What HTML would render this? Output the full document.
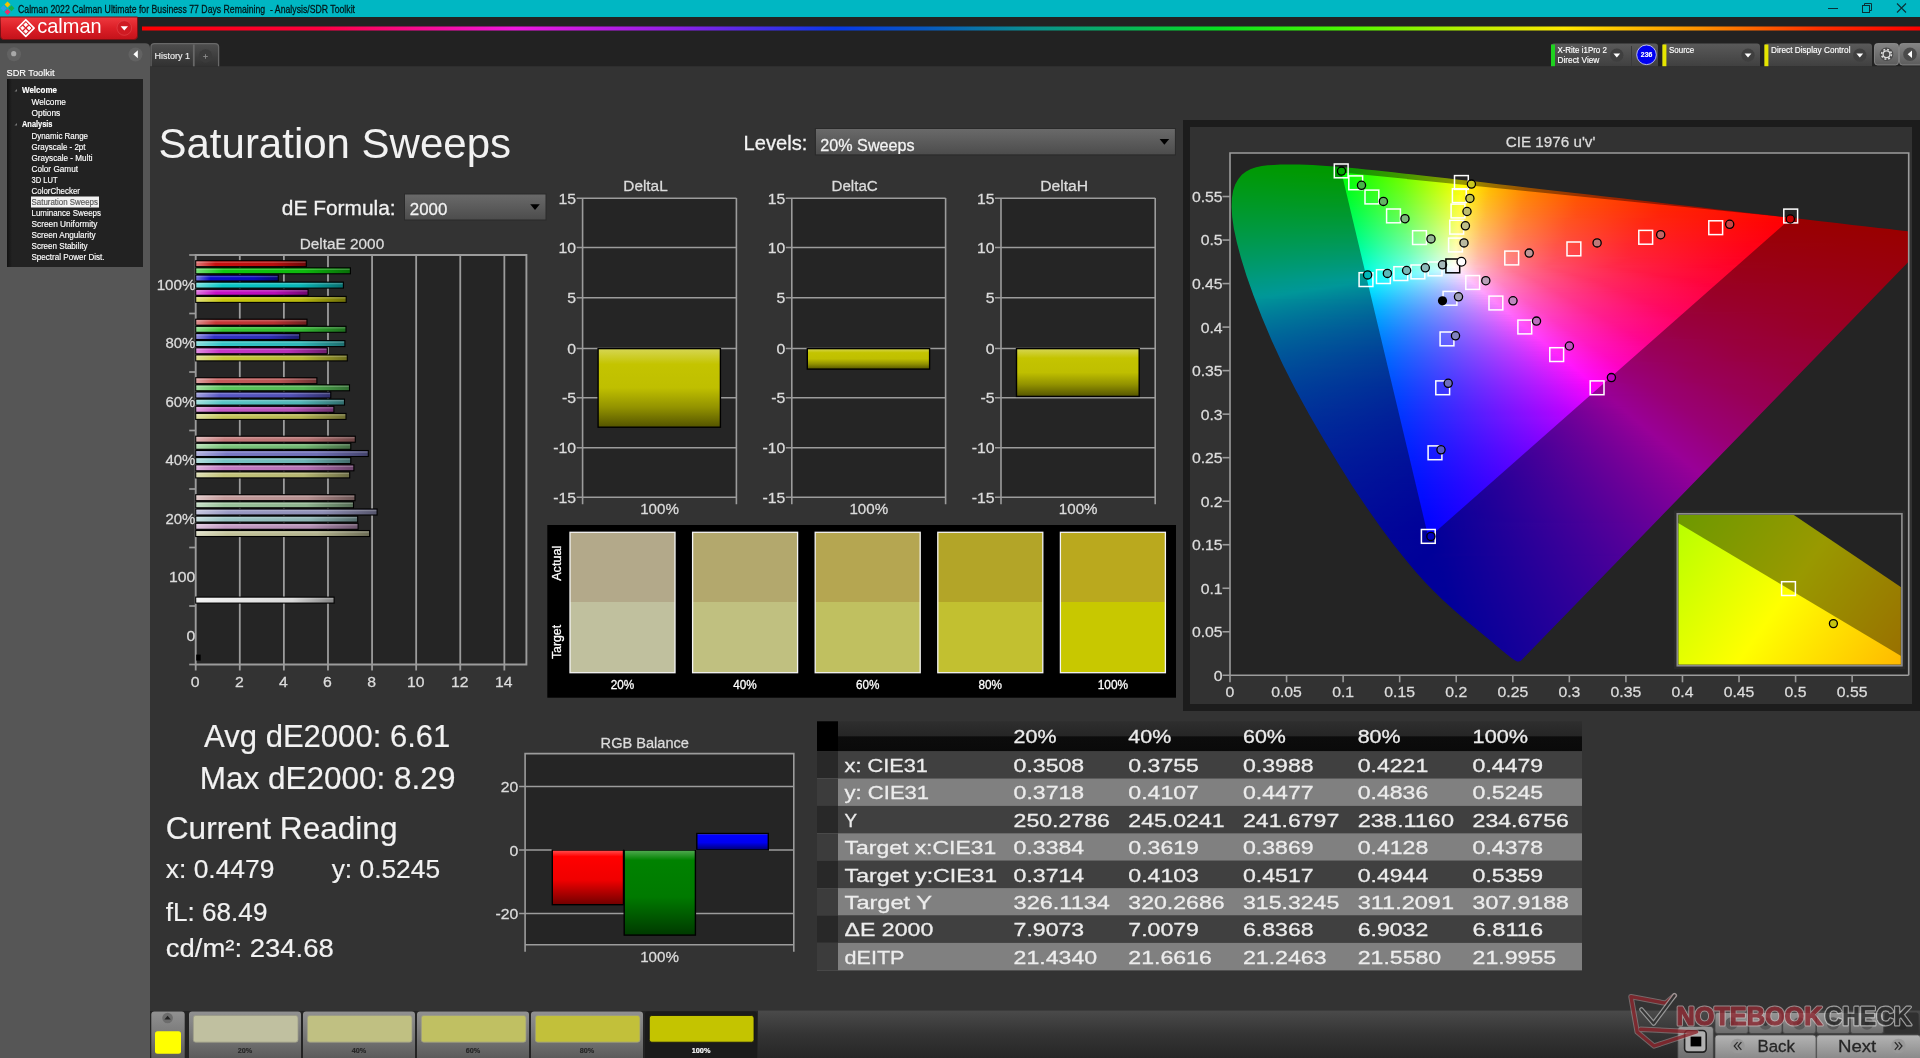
<!DOCTYPE html>
<html lang="en"><head><meta charset="utf-8"><title>Calman 2022 - Analysis/SDR Toolkit</title>
<style>
html,body{margin:0;padding:0;background:#333;}
body{width:1920px;height:1058px;overflow:hidden;position:relative;font-family:"Liberation Sans",sans-serif;}
body>svg{position:absolute;left:0;top:0;will-change:transform;}
svg text{font-family:"Liberation Sans",sans-serif;}
.cie{position:absolute;overflow:hidden;}
.cie i{position:absolute;left:0;width:100%;display:block;}
</style></head><body>
<svg width="1920" height="1058" viewBox="0 0 1920 1058"><defs><linearGradient id="gRed" x1="0" y1="0" x2="0" y2="1"><stop offset="0" stop-color="#ee3a3f"/><stop offset="0.5" stop-color="#dc1f27"/><stop offset="1" stop-color="#c3121a"/></linearGradient>
<radialGradient id="gRedBtn"><stop offset="0" stop-color="#e0262d"/><stop offset="1" stop-color="#c9151c"/></radialGradient>
<linearGradient id="gRain" x1="0" y1="0" x2="1" y2="0"><stop offset="0" stop-color="#f00"/><stop offset="0.1" stop-color="#ff0040"/><stop offset="0.21" stop-color="#f018e0"/><stop offset="0.3" stop-color="#9020e8"/><stop offset="0.39" stop-color="#0838e8"/><stop offset="0.44" stop-color="#0858c0"/><stop offset="0.5" stop-color="#0a9090"/><stop offset="0.555" stop-color="#08b858"/><stop offset="0.605" stop-color="#08e020"/><stop offset="0.68" stop-color="#50f800"/><stop offset="0.745" stop-color="#b8f000"/><stop offset="0.8" stop-color="#ffe800"/><stop offset="0.877" stop-color="#ff9000"/><stop offset="0.943" stop-color="#ff3000"/><stop offset="1" stop-color="#f00"/></linearGradient>
<radialGradient id="gKnob"><stop offset="0" stop-color="#777"/><stop offset="1" stop-color="#5e5e5e"/></radialGradient>
<linearGradient id="gTreeL" x1="0" y1="0" x2="1" y2="0"><stop offset="0" stop-color="#111"/><stop offset="1" stop-color="#222"/></linearGradient>
<linearGradient id="gTab" x1="0" y1="0" x2="0" y2="1"><stop offset="0" stop-color="#4e4e4e"/><stop offset="1" stop-color="#313131"/></linearGradient>
<linearGradient id="gTb" x1="0" y1="0" x2="0" y2="1"><stop offset="0" stop-color="#5a5a5a"/><stop offset="1" stop-color="#404040"/></linearGradient>
<linearGradient id="gBtn" x1="0" y1="0" x2="0" y2="1"><stop offset="0" stop-color="#858585"/><stop offset="1" stop-color="#5c5c5c"/></linearGradient>
<linearGradient id="gDD" x1="0" y1="0" x2="0" y2="1"><stop offset="0" stop-color="#6a6a6a"/><stop offset="1" stop-color="#4c4c4c"/></linearGradient>
<linearGradient id="hb1" x1="0" y1="0" x2="1" y2="0"><stop offset="0" stop-color="#e17b7b"/><stop offset="0.18" stop-color="#c80f0f"/><stop offset="0.7" stop-color="#b80e0e"/><stop offset="1" stop-color="#6e0808"/></linearGradient>
<linearGradient id="hb2" x1="0" y1="0" x2="1" y2="0"><stop offset="0" stop-color="#7be17b"/><stop offset="0.18" stop-color="#0fc80f"/><stop offset="0.7" stop-color="#0eb80e"/><stop offset="1" stop-color="#086e08"/></linearGradient>
<linearGradient id="hb3" x1="0" y1="0" x2="1" y2="0"><stop offset="0" stop-color="#7878e1"/><stop offset="0.18" stop-color="#0a0ac8"/><stop offset="0.7" stop-color="#0909b8"/><stop offset="1" stop-color="#06066e"/></linearGradient>
<linearGradient id="hb4" x1="0" y1="0" x2="1" y2="0"><stop offset="0" stop-color="#78e1e1"/><stop offset="0.18" stop-color="#0ac8c8"/><stop offset="0.7" stop-color="#09b8b8"/><stop offset="1" stop-color="#066e6e"/></linearGradient>
<linearGradient id="hb5" x1="0" y1="0" x2="1" y2="0"><stop offset="0" stop-color="#e17be1"/><stop offset="0.18" stop-color="#c80fc8"/><stop offset="0.7" stop-color="#b80eb8"/><stop offset="1" stop-color="#6e086e"/></linearGradient>
<linearGradient id="hb6" x1="0" y1="0" x2="1" y2="0"><stop offset="0" stop-color="#e1e17b"/><stop offset="0.18" stop-color="#c8c80f"/><stop offset="0.7" stop-color="#b8b80e"/><stop offset="1" stop-color="#6e6e08"/></linearGradient>
<linearGradient id="hb7" x1="0" y1="0" x2="1" y2="0"><stop offset="0" stop-color="#e09191"/><stop offset="0.18" stop-color="#c73737"/><stop offset="0.7" stop-color="#b73232"/><stop offset="1" stop-color="#6d1e1e"/></linearGradient>
<linearGradient id="hb8" x1="0" y1="0" x2="1" y2="0"><stop offset="0" stop-color="#91e091"/><stop offset="0.18" stop-color="#37c737"/><stop offset="0.7" stop-color="#32b732"/><stop offset="1" stop-color="#1e6d1e"/></linearGradient>
<linearGradient id="hb9" x1="0" y1="0" x2="1" y2="0"><stop offset="0" stop-color="#8f8fe0"/><stop offset="0.18" stop-color="#3333c7"/><stop offset="0.7" stop-color="#2f2fb7"/><stop offset="1" stop-color="#1c1c6d"/></linearGradient>
<linearGradient id="hb10" x1="0" y1="0" x2="1" y2="0"><stop offset="0" stop-color="#8fe0e0"/><stop offset="0.18" stop-color="#33c7c7"/><stop offset="0.7" stop-color="#2fb7b7"/><stop offset="1" stop-color="#1c6d6d"/></linearGradient>
<linearGradient id="hb11" x1="0" y1="0" x2="1" y2="0"><stop offset="0" stop-color="#e091e0"/><stop offset="0.18" stop-color="#c737c7"/><stop offset="0.7" stop-color="#b732b7"/><stop offset="1" stop-color="#6d1e6d"/></linearGradient>
<linearGradient id="hb12" x1="0" y1="0" x2="1" y2="0"><stop offset="0" stop-color="#e0e091"/><stop offset="0.18" stop-color="#c7c737"/><stop offset="0.7" stop-color="#b7b732"/><stop offset="1" stop-color="#6d6d1e"/></linearGradient>
<linearGradient id="hb13" x1="0" y1="0" x2="1" y2="0"><stop offset="0" stop-color="#e0a5a5"/><stop offset="0.18" stop-color="#c65b5b"/><stop offset="0.7" stop-color="#b65353"/><stop offset="1" stop-color="#6d3232"/></linearGradient>
<linearGradient id="hb14" x1="0" y1="0" x2="1" y2="0"><stop offset="0" stop-color="#a5e0a5"/><stop offset="0.18" stop-color="#5bc65b"/><stop offset="0.7" stop-color="#53b653"/><stop offset="1" stop-color="#326d32"/></linearGradient>
<linearGradient id="hb15" x1="0" y1="0" x2="1" y2="0"><stop offset="0" stop-color="#a3a3e0"/><stop offset="0.18" stop-color="#5858c6"/><stop offset="0.7" stop-color="#5151b6"/><stop offset="1" stop-color="#30306d"/></linearGradient>
<linearGradient id="hb16" x1="0" y1="0" x2="1" y2="0"><stop offset="0" stop-color="#a3e0e0"/><stop offset="0.18" stop-color="#58c6c6"/><stop offset="0.7" stop-color="#51b6b6"/><stop offset="1" stop-color="#306d6d"/></linearGradient>
<linearGradient id="hb17" x1="0" y1="0" x2="1" y2="0"><stop offset="0" stop-color="#e0a5e0"/><stop offset="0.18" stop-color="#c65bc6"/><stop offset="0.7" stop-color="#b653b6"/><stop offset="1" stop-color="#6d326d"/></linearGradient>
<linearGradient id="hb18" x1="0" y1="0" x2="1" y2="0"><stop offset="0" stop-color="#e0e0a5"/><stop offset="0.18" stop-color="#c6c65b"/><stop offset="0.7" stop-color="#b6b653"/><stop offset="1" stop-color="#6d6d32"/></linearGradient>
<linearGradient id="hb19" x1="0" y1="0" x2="1" y2="0"><stop offset="0" stop-color="#dfb6b6"/><stop offset="0.18" stop-color="#c57b7b"/><stop offset="0.7" stop-color="#b57171"/><stop offset="1" stop-color="#6c4444"/></linearGradient>
<linearGradient id="hb20" x1="0" y1="0" x2="1" y2="0"><stop offset="0" stop-color="#b6dfb6"/><stop offset="0.18" stop-color="#7bc57b"/><stop offset="0.7" stop-color="#71b571"/><stop offset="1" stop-color="#446c44"/></linearGradient>
<linearGradient id="hb21" x1="0" y1="0" x2="1" y2="0"><stop offset="0" stop-color="#b5b5df"/><stop offset="0.18" stop-color="#7979c5"/><stop offset="0.7" stop-color="#6f6fb5"/><stop offset="1" stop-color="#43436c"/></linearGradient>
<linearGradient id="hb22" x1="0" y1="0" x2="1" y2="0"><stop offset="0" stop-color="#b5dfdf"/><stop offset="0.18" stop-color="#79c5c5"/><stop offset="0.7" stop-color="#6fb5b5"/><stop offset="1" stop-color="#436c6c"/></linearGradient>
<linearGradient id="hb23" x1="0" y1="0" x2="1" y2="0"><stop offset="0" stop-color="#dfb6df"/><stop offset="0.18" stop-color="#c57bc5"/><stop offset="0.7" stop-color="#b571b5"/><stop offset="1" stop-color="#6c446c"/></linearGradient>
<linearGradient id="hb24" x1="0" y1="0" x2="1" y2="0"><stop offset="0" stop-color="#dfdfb6"/><stop offset="0.18" stop-color="#c5c57b"/><stop offset="0.7" stop-color="#b5b571"/><stop offset="1" stop-color="#6c6c44"/></linearGradient>
<linearGradient id="hb25" x1="0" y1="0" x2="1" y2="0"><stop offset="0" stop-color="#dfc8c8"/><stop offset="0.18" stop-color="#c49b9b"/><stop offset="0.7" stop-color="#b48f8f"/><stop offset="1" stop-color="#6c5555"/></linearGradient>
<linearGradient id="hb26" x1="0" y1="0" x2="1" y2="0"><stop offset="0" stop-color="#c8dfc8"/><stop offset="0.18" stop-color="#9bc49b"/><stop offset="0.7" stop-color="#8fb48f"/><stop offset="1" stop-color="#556c55"/></linearGradient>
<linearGradient id="hb27" x1="0" y1="0" x2="1" y2="0"><stop offset="0" stop-color="#c8c8df"/><stop offset="0.18" stop-color="#9a9ac4"/><stop offset="0.7" stop-color="#8e8eb4"/><stop offset="1" stop-color="#55556c"/></linearGradient>
<linearGradient id="hb28" x1="0" y1="0" x2="1" y2="0"><stop offset="0" stop-color="#c8dfdf"/><stop offset="0.18" stop-color="#9ac4c4"/><stop offset="0.7" stop-color="#8eb4b4"/><stop offset="1" stop-color="#556c6c"/></linearGradient>
<linearGradient id="hb29" x1="0" y1="0" x2="1" y2="0"><stop offset="0" stop-color="#dfc8df"/><stop offset="0.18" stop-color="#c49bc4"/><stop offset="0.7" stop-color="#b48fb4"/><stop offset="1" stop-color="#6c556c"/></linearGradient>
<linearGradient id="hb30" x1="0" y1="0" x2="1" y2="0"><stop offset="0" stop-color="#dfdfc8"/><stop offset="0.18" stop-color="#c4c49b"/><stop offset="0.7" stop-color="#b4b48f"/><stop offset="1" stop-color="#6c6c55"/></linearGradient>
<linearGradient id="hb31" x1="0" y1="0" x2="1" y2="0"><stop offset="0" stop-color="#f4f4f4"/><stop offset="0.18" stop-color="#ebebeb"/><stop offset="0.7" stop-color="#d8d8d8"/><stop offset="1" stop-color="#818181"/></linearGradient>
<linearGradient id="gYb" x1="0" y1="0" x2="0" y2="1"><stop offset="0" stop-color="#d6d654"/><stop offset="0.2" stop-color="#c4c400"/><stop offset="0.5" stop-color="#bfbf00"/><stop offset="0.75" stop-color="#929200"/><stop offset="1" stop-color="#545400"/></linearGradient>
<linearGradient id="gR" x1="0" y1="0" x2="0" y2="1"><stop offset="0" stop-color="#ff5454"/><stop offset="0.12" stop-color="#ff0000"/><stop offset="0.55" stop-color="#f00000"/><stop offset="1" stop-color="#700000"/></linearGradient>
<linearGradient id="gG" x1="0" y1="0" x2="0" y2="1"><stop offset="0" stop-color="#54ab54"/><stop offset="0.12" stop-color="#008200"/><stop offset="0.55" stop-color="#007a00"/><stop offset="1" stop-color="#003900"/></linearGradient>
<linearGradient id="gB" x1="0" y1="0" x2="0" y2="1"><stop offset="0" stop-color="#5454ff"/><stop offset="0.12" stop-color="#0000ff"/><stop offset="0.55" stop-color="#0000f0"/><stop offset="1" stop-color="#000070"/></linearGradient>
<linearGradient id="gTh" x1="0" y1="0" x2="0" y2="1"><stop offset="0" stop-color="#2e2e2e"/><stop offset="0.48" stop-color="#262626"/><stop offset="0.52" stop-color="#0c0c0c"/><stop offset="1" stop-color="#0a0a0a"/></linearGradient>
<linearGradient id="gIn" gradientUnits="userSpaceOnUse" x1="1679.0" y1="510.4" x2="1900.2" y2="669.0"><stop offset="0" stop-color="#b4ff00"/><stop offset="0.5" stop-color="#ffff00"/><stop offset="1" stop-color="#ffb800"/></linearGradient>
<linearGradient id="gBar" x1="0" y1="0" x2="0" y2="1"><stop offset="0" stop-color="#4a4a4a"/><stop offset="0.5" stop-color="#343434"/><stop offset="1" stop-color="#262626"/></linearGradient>
<linearGradient id="gSw" x1="0" y1="0" x2="0" y2="1"><stop offset="0" stop-color="#919191"/><stop offset="0.5" stop-color="#777"/><stop offset="1" stop-color="#565656"/></linearGradient>
<linearGradient id="gNb" x1="0" y1="0" x2="0" y2="1"><stop offset="0" stop-color="#b4b4b4"/><stop offset="1" stop-color="#858585"/></linearGradient>
<linearGradient id="gSb" x1="0" y1="0" x2="0" y2="1"><stop offset="0" stop-color="#969696"/><stop offset="1" stop-color="#6c6c6c"/></linearGradient></defs>
<rect x="0.00" y="0.00" width="1920.00" height="1058.00" fill="#333"/>
<rect x="0.00" y="17.00" width="1920.00" height="49.20" fill="#222"/>
<rect x="0.00" y="0.00" width="1920.00" height="17.00" fill="#00b7c3"/>
<path d="M7.5 1.5L10.5 4.5L7.5 7.5L4.5 4.5Z" fill="#f5c400"/>
<path d="M3.5 5.3L6.5 8.3L3.5 11.3L0.5 8.3Z" fill="#2aa0e8"/>
<path d="M11.5 5.3L14.5 8.3L11.5 11.3L8.5 8.3Z" fill="#17b14a"/>
<path d="M7.5 9.0L10.5 12.0L7.5 15.0L4.5 12.0Z" fill="#e6336e"/>
<text x="18.0" y="12.7" font-size="11.8" fill="#021518" textLength="337.0" lengthAdjust="spacingAndGlyphs" xml:space="preserve" stroke="#021518" stroke-width="0.28">Calman 2022 Calman Ultimate for Business 77 Days Remaining  - Analysis/SDR Toolkit</text>
<line x1="1828.00" y1="8.50" x2="1838.00" y2="8.50" stroke="#0a3036" stroke-width="1"/>
<rect x="1862.5" y="5.5" width="7" height="7" fill="none" stroke="#0a3036" stroke-width="1"/><path d="M1864.5 5.5V3.5H1871.5V10.5H1869.5" fill="none" stroke="#0a3036" stroke-width="1"/>
<path d="M1897 3.5L1906 12.5M1906 3.5L1897 12.5" stroke="#0a3036" stroke-width="1.1" fill="none"/>
<path d="M0 17H137.5V36Q137.5 39.5 134 39.5H3.5Q0.5 39.5 0.5 36Z" fill="url(#gRed)" stroke="#7c1015" stroke-width="1"/>
<path d="M25.80 19.75L34.10 28.05L25.80 36.35L17.50 28.05Z" fill="none" stroke="#fff" stroke-width="1.7" stroke-linejoin="round"/>
<path d="M25.80 22.85L27.70 24.75L25.80 26.65L23.90 24.75Z" fill="#fff" stroke="#fff" stroke-width="0.8" stroke-linejoin="round"/>
<path d="M22.50 26.15L24.40 28.05L22.50 29.95L20.60 28.05Z" fill="#fff" stroke="#fff" stroke-width="0.8" stroke-linejoin="round"/>
<path d="M29.10 26.15L31.00 28.05L29.10 29.95L27.20 28.05Z" fill="#fff" stroke="#fff" stroke-width="0.8" stroke-linejoin="round"/>
<path d="M25.80 29.45L27.70 31.35L25.80 33.25L23.90 31.35Z" fill="#fff" stroke="#fff" stroke-width="0.8" stroke-linejoin="round"/>
<text x="37.3" y="33.2" font-size="19.9" fill="#fff" textLength="64.3" lengthAdjust="spacingAndGlyphs" stroke="none">calman</text>
<circle cx="124.3" cy="28" r="7.3" fill="#cf1a22" stroke="#e2484d" stroke-width="0.6"/>
<path d="M120.6 26.3H128L124.3 30.6Z" fill="#fff"/>
<rect x="142.00" y="26.50" width="1778.00" height="4.00" fill="url(#gRain)"/>
<path d="M0 43.2H145Q150 43.2 150 48V1058H0Z" fill="#565656"/>
<circle cx="14" cy="54.2" r="7" fill="#626262"/><circle cx="13.7" cy="53.7" r="2.6" fill="#a9a9a9"/>
<circle cx="135.5" cy="54.5" r="7" fill="#626262"/><path d="M137.8 50.2V58.2L133.4 54.2Z" fill="#fff"/>
<text x="6.5" y="76.3" font-size="9.9" fill="#fff" textLength="48.0" lengthAdjust="spacingAndGlyphs" stroke="#fff" stroke-width="0.15">SDR Toolkit</text>
<rect x="7.00" y="79.00" width="136.00" height="188.00" fill="#222"/>
<rect x="7.00" y="79.00" width="5.00" height="188.00" fill="url(#gTreeL)"/>
<rect x="31.00" y="196.50" width="68.00" height="11.00" fill="#f2f2f2"/>
<text x="22.0" y="93.0" font-size="8.5" fill="#fff" font-weight="bold" textLength="35.0" lengthAdjust="spacingAndGlyphs" stroke="#fff" stroke-width="0.15">Welcome</text>
<text x="31.5" y="105.0" font-size="8.5" fill="#fff" textLength="34.5" lengthAdjust="spacingAndGlyphs" stroke="#fff" stroke-width="0.15">Welcome</text>
<text x="31.5" y="115.6" font-size="8.5" fill="#fff" textLength="28.8" lengthAdjust="spacingAndGlyphs" stroke="#fff" stroke-width="0.15">Options</text>
<text x="22.0" y="127.0" font-size="8.5" fill="#fff" font-weight="bold" textLength="30.5" lengthAdjust="spacingAndGlyphs" stroke="#fff" stroke-width="0.15">Analysis</text>
<text x="31.5" y="138.8" font-size="8.5" fill="#fff" textLength="56.5" lengthAdjust="spacingAndGlyphs" stroke="#fff" stroke-width="0.15">Dynamic Range</text>
<text x="31.5" y="149.6" font-size="8.5" fill="#fff" textLength="54.0" lengthAdjust="spacingAndGlyphs" stroke="#fff" stroke-width="0.15">Grayscale - 2pt</text>
<text x="31.5" y="160.6" font-size="8.5" fill="#fff" textLength="61.0" lengthAdjust="spacingAndGlyphs" stroke="#fff" stroke-width="0.15">Grayscale - Multi</text>
<text x="31.5" y="171.7" font-size="8.5" fill="#fff" textLength="46.5" lengthAdjust="spacingAndGlyphs" stroke="#fff" stroke-width="0.15">Color Gamut</text>
<text x="31.5" y="182.5" font-size="8.5" fill="#fff" textLength="26.0" lengthAdjust="spacingAndGlyphs" stroke="#fff" stroke-width="0.15">3D LUT</text>
<text x="31.5" y="193.6" font-size="8.5" fill="#fff" textLength="48.5" lengthAdjust="spacingAndGlyphs" stroke="#fff" stroke-width="0.15">ColorChecker</text>
<text x="31.5" y="204.7" font-size="8.5" fill="#555" textLength="66.5" lengthAdjust="spacingAndGlyphs" stroke="#555" stroke-width="0.15">Saturation Sweeps</text>
<text x="31.5" y="215.7" font-size="8.5" fill="#fff" textLength="69.5" lengthAdjust="spacingAndGlyphs" stroke="#fff" stroke-width="0.15">Luminance Sweeps</text>
<text x="31.5" y="226.8" font-size="8.5" fill="#fff" textLength="66.0" lengthAdjust="spacingAndGlyphs" stroke="#fff" stroke-width="0.15">Screen Uniformity</text>
<text x="31.5" y="238.0" font-size="8.5" fill="#fff" textLength="64.0" lengthAdjust="spacingAndGlyphs" stroke="#fff" stroke-width="0.15">Screen Angularity</text>
<text x="31.5" y="248.6" font-size="8.5" fill="#fff" textLength="56.0" lengthAdjust="spacingAndGlyphs" stroke="#fff" stroke-width="0.15">Screen Stability</text>
<text x="31.5" y="259.6" font-size="8.5" fill="#fff" textLength="73.0" lengthAdjust="spacingAndGlyphs" stroke="#fff" stroke-width="0.15">Spectral Power Dist.</text>
<path d="M17 91.5L14.5 91.5L17 89Z" fill="#777"/><path d="M17 125.5L14.5 125.5L17 123Z" fill="#777"/>
<path d="M151 66.3V47Q151 43.6 154.5 43.6H215Q218.6 43.6 218.6 47V66.3Z" fill="url(#gTab)"/>
<path d="M151 66.3V47Q151 43.6 154.5 43.6H215Q218.6 43.6 218.6 47V66.3" fill="none" stroke="#686868" stroke-width="1.3"/>
<line x1="193.80" y1="44.50" x2="193.80" y2="66.30" stroke="#686868" stroke-width="1.8"/>
<text x="154.6" y="58.5" font-size="9.1" fill="#eee" textLength="35.5" lengthAdjust="spacingAndGlyphs" stroke="#eee" stroke-width="0.15">History 1</text>
<circle cx="205.5" cy="56" r="6.8" fill="#3b3b3b"/><path d="M203.2 56.5H207.8M205.5 54.2V58.8" stroke="#8a8a8a" stroke-width="0.9"/>
<path d="M1551.0 66.2V46.5Q1551.0 43.5 1554.0 43.5H1655.0Q1658.0 43.5 1658.0 46.5V66.2Z" fill="url(#gTb)"/>
<rect x="1551.00" y="44.50" width="4.00" height="21.70" fill="#1fd11f"/>
<path d="M1662.4 66.2V46.5Q1662.4 43.5 1665.4 43.5H1757.0Q1760.0 43.5 1760.0 46.5V66.2Z" fill="url(#gTb)"/>
<rect x="1662.40" y="44.50" width="4.00" height="21.70" fill="#e6e600"/>
<path d="M1764.4 66.2V46.5Q1764.4 43.5 1767.4 43.5H1869.0Q1872.0 43.5 1872.0 46.5V66.2Z" fill="url(#gTb)"/>
<rect x="1764.40" y="44.50" width="4.00" height="21.70" fill="#e6e600"/>
<line x1="1631.50" y1="46.00" x2="1631.50" y2="66.20" stroke="#3a3a3a" stroke-width="1"/>
<text x="1557.4" y="52.9" font-size="8.7" fill="#fff" textLength="49.5" lengthAdjust="spacingAndGlyphs" stroke="#fff" stroke-width="0.15">X-Rite i1Pro 2</text>
<text x="1557.4" y="63.4" font-size="8.7" fill="#fff" textLength="42.0" lengthAdjust="spacingAndGlyphs" stroke="#fff" stroke-width="0.15">Direct View</text>
<text x="1669.0" y="52.9" font-size="8.7" fill="#fff" textLength="25.3" lengthAdjust="spacingAndGlyphs" stroke="#fff" stroke-width="0.15">Source</text>
<text x="1771.0" y="52.9" font-size="8.7" fill="#fff" textLength="79.5" lengthAdjust="spacingAndGlyphs" stroke="#fff" stroke-width="0.15">Direct Display Control</text>
<circle cx="1616.8" cy="55.2" r="6.6" fill="#3f3f3f"/><path d="M1613.4 53.6H1620.2L1616.8 57.6Z" fill="#fff"/>
<circle cx="1748.0" cy="55.2" r="6.6" fill="#3f3f3f"/><path d="M1744.6 53.6H1751.4L1748.0 57.6Z" fill="#fff"/>
<circle cx="1859.8" cy="55.2" r="6.6" fill="#3f3f3f"/><path d="M1856.4 53.6H1863.2L1859.8 57.6Z" fill="#fff"/>
<circle cx="1646.5" cy="54.8" r="9.8" fill="#0000f0" stroke="#dcdcff" stroke-width="0.8"/>
<text x="1640.8" y="57.4" font-size="7.1" fill="#fff" font-weight="bold" textLength="11.5" lengthAdjust="spacingAndGlyphs" stroke="#fff" stroke-width="0.15">236</text>
<rect x="1874.5" y="43.5" width="24" height="21.5" rx="3" fill="url(#gBtn)" stroke="#999" stroke-width="0.7"/>
<rect x="1899.5" y="43.5" width="24" height="21.5" rx="3" fill="url(#gBtn)" stroke="#999" stroke-width="0.7"/>
<circle cx="1886.5" cy="54.3" r="6.8" fill="#4a4a4a"/><circle cx="1886.5" cy="54.3" r="3.4" fill="none" stroke="#ddd" stroke-width="1.3"/><circle cx="1886.5" cy="54.3" r="4.9" fill="none" stroke="#ddd" stroke-width="1.6" stroke-dasharray="1.9 1.95"/>
<circle cx="1910" cy="54.3" r="6.8" fill="#4a4a4a"/><path d="M1912 50.5V58.1L1907.6 54.3Z" fill="#fff"/>
<text x="158.5" y="158.0" font-size="41.8" fill="#f2f2f2" textLength="352.5" lengthAdjust="spacingAndGlyphs">Saturation Sweeps</text>
<text x="281.8" y="215.3" font-size="20.7" fill="#f2f2f2" textLength="113.8" lengthAdjust="spacingAndGlyphs" stroke="#f2f2f2" stroke-width="0.28">dE Formula:</text>
<text x="743.6" y="150.2" font-size="20.5" fill="#f2f2f2" textLength="63.7" lengthAdjust="spacingAndGlyphs" stroke="#f2f2f2" stroke-width="0.28">Levels:</text>
<rect x="404.5" y="194.0" width="141.5" height="26.0" fill="url(#gDD)" stroke="#2a2a2a" stroke-width="1"/>
<svg x="404.5" y="194.0" width="141.5" height="25.0" overflow="hidden"><text x="5.3" y="21.3" font-size="16.4" fill="#f2f2f2" textLength="37.5" lengthAdjust="spacingAndGlyphs" stroke="#f2f2f2" stroke-width="0.28">2000</text></svg>
<path d="M530.2 204.2H539.8L535.0 210.0Z" fill="#000"/>
<rect x="815.4" y="128.5" width="360.0" height="26.4" fill="url(#gDD)" stroke="#2a2a2a" stroke-width="1"/>
<svg x="815.4" y="128.5" width="360.0" height="25.4" overflow="hidden"><text x="4.9" y="22.5" font-size="16.6" fill="#f2f2f2" textLength="94.3" lengthAdjust="spacingAndGlyphs" stroke="#f2f2f2" stroke-width="0.28">20% Sweeps</text></svg>
<path d="M1159.6 138.9H1169.2L1164.4 144.7Z" fill="#000"/>
<rect x="195.70" y="255.00" width="330.70" height="409.50" fill="#252525"/>
<line x1="239.79" y1="255.00" x2="239.79" y2="670.50" stroke="#9c9c9c" stroke-width="1.8"/>
<line x1="283.89" y1="255.00" x2="283.89" y2="670.50" stroke="#9c9c9c" stroke-width="1.8"/>
<line x1="327.98" y1="255.00" x2="327.98" y2="670.50" stroke="#9c9c9c" stroke-width="1.8"/>
<line x1="372.07" y1="255.00" x2="372.07" y2="670.50" stroke="#9c9c9c" stroke-width="1.8"/>
<line x1="416.17" y1="255.00" x2="416.17" y2="670.50" stroke="#9c9c9c" stroke-width="1.8"/>
<line x1="460.26" y1="255.00" x2="460.26" y2="670.50" stroke="#9c9c9c" stroke-width="1.8"/>
<line x1="504.35" y1="255.00" x2="504.35" y2="670.50" stroke="#9c9c9c" stroke-width="1.8"/>
<path d="M195.7 255.0H526.4V664.5H195.7Z" fill="none" stroke="#9c9c9c" stroke-width="1.9"/>
<line x1="195.70" y1="664.50" x2="195.70" y2="670.50" stroke="#9c9c9c" stroke-width="1.8"/>
<line x1="189.20" y1="255.00" x2="195.70" y2="255.00" stroke="#9c9c9c" stroke-width="1.7"/>
<line x1="189.20" y1="313.50" x2="195.70" y2="313.50" stroke="#9c9c9c" stroke-width="1.7"/>
<line x1="189.20" y1="372.00" x2="195.70" y2="372.00" stroke="#9c9c9c" stroke-width="1.7"/>
<line x1="189.20" y1="430.50" x2="195.70" y2="430.50" stroke="#9c9c9c" stroke-width="1.7"/>
<line x1="189.20" y1="489.00" x2="195.70" y2="489.00" stroke="#9c9c9c" stroke-width="1.7"/>
<line x1="189.20" y1="547.50" x2="195.70" y2="547.50" stroke="#9c9c9c" stroke-width="1.7"/>
<line x1="189.20" y1="606.00" x2="195.70" y2="606.00" stroke="#9c9c9c" stroke-width="1.7"/>
<line x1="189.20" y1="664.50" x2="195.70" y2="664.50" stroke="#9c9c9c" stroke-width="1.7"/>
<text x="299.7" y="248.8" font-size="15.3" fill="#dcdcdc" textLength="84.5" lengthAdjust="spacingAndGlyphs" stroke="#dcdcdc" stroke-width="0.28">DeltaE 2000</text>
<text x="156.7" y="289.9" font-size="15.3" fill="#dcdcdc" textLength="38.7" lengthAdjust="spacingAndGlyphs" stroke="#dcdcdc" stroke-width="0.28">100%</text>
<text x="165.5" y="348.4" font-size="15.3" fill="#dcdcdc" textLength="29.9" lengthAdjust="spacingAndGlyphs" stroke="#dcdcdc" stroke-width="0.28">80%</text>
<text x="165.5" y="406.9" font-size="15.3" fill="#dcdcdc" textLength="29.9" lengthAdjust="spacingAndGlyphs" stroke="#dcdcdc" stroke-width="0.28">60%</text>
<text x="165.5" y="465.4" font-size="15.3" fill="#dcdcdc" textLength="29.9" lengthAdjust="spacingAndGlyphs" stroke="#dcdcdc" stroke-width="0.28">40%</text>
<text x="165.5" y="523.9" font-size="15.3" fill="#dcdcdc" textLength="29.9" lengthAdjust="spacingAndGlyphs" stroke="#dcdcdc" stroke-width="0.28">20%</text>
<text x="169.1" y="582.4" font-size="15.3" fill="#dcdcdc" textLength="26.3" lengthAdjust="spacingAndGlyphs" stroke="#dcdcdc" stroke-width="0.28">100</text>
<text x="186.6" y="640.9" font-size="15.3" fill="#dcdcdc" textLength="8.8" lengthAdjust="spacingAndGlyphs" stroke="#dcdcdc" stroke-width="0.28">0</text>
<text x="190.8" y="687.2" font-size="15.3" fill="#dcdcdc" textLength="8.8" lengthAdjust="spacingAndGlyphs" stroke="#dcdcdc" stroke-width="0.28">0</text>
<text x="234.9" y="687.2" font-size="15.3" fill="#dcdcdc" textLength="8.8" lengthAdjust="spacingAndGlyphs" stroke="#dcdcdc" stroke-width="0.28">2</text>
<text x="279.0" y="687.2" font-size="15.3" fill="#dcdcdc" textLength="8.8" lengthAdjust="spacingAndGlyphs" stroke="#dcdcdc" stroke-width="0.28">4</text>
<text x="323.1" y="687.2" font-size="15.3" fill="#dcdcdc" textLength="8.8" lengthAdjust="spacingAndGlyphs" stroke="#dcdcdc" stroke-width="0.28">6</text>
<text x="367.2" y="687.2" font-size="15.3" fill="#dcdcdc" textLength="8.8" lengthAdjust="spacingAndGlyphs" stroke="#dcdcdc" stroke-width="0.28">8</text>
<text x="406.9" y="687.2" font-size="15.3" fill="#dcdcdc" textLength="17.5" lengthAdjust="spacingAndGlyphs" stroke="#dcdcdc" stroke-width="0.28">10</text>
<text x="451.0" y="687.2" font-size="15.3" fill="#dcdcdc" textLength="17.5" lengthAdjust="spacingAndGlyphs" stroke="#dcdcdc" stroke-width="0.28">12</text>
<text x="495.1" y="687.2" font-size="15.3" fill="#dcdcdc" textLength="17.5" lengthAdjust="spacingAndGlyphs" stroke="#dcdcdc" stroke-width="0.28">14</text>
<rect x="195.7" y="260.7" width="110.6" height="6.0" fill="url(#hb1)" stroke="#000" stroke-width="1.1"/>
<rect x="196.3" y="261.6" width="109.3" height="1.3" fill="#fff" opacity="0.22"/>
<rect x="195.7" y="267.8" width="154.7" height="6.0" fill="url(#hb2)" stroke="#000" stroke-width="1.1"/>
<rect x="196.3" y="268.7" width="153.4" height="1.3" fill="#fff" opacity="0.22"/>
<rect x="195.7" y="275.0" width="82.6" height="6.0" fill="url(#hb3)" stroke="#000" stroke-width="1.1"/>
<rect x="196.3" y="275.9" width="81.3" height="1.3" fill="#fff" opacity="0.22"/>
<rect x="195.7" y="282.1" width="147.7" height="6.0" fill="url(#hb4)" stroke="#000" stroke-width="1.1"/>
<rect x="196.3" y="283.0" width="146.4" height="1.3" fill="#fff" opacity="0.22"/>
<rect x="195.7" y="289.3" width="112.4" height="6.0" fill="url(#hb5)" stroke="#000" stroke-width="1.1"/>
<rect x="196.3" y="290.2" width="111.1" height="1.3" fill="#fff" opacity="0.22"/>
<rect x="195.7" y="296.4" width="150.5" height="6.0" fill="url(#hb6)" stroke="#000" stroke-width="1.1"/>
<rect x="196.3" y="297.3" width="149.2" height="1.3" fill="#fff" opacity="0.22"/>
<rect x="195.7" y="319.2" width="111.3" height="6.0" fill="url(#hb7)" stroke="#000" stroke-width="1.1"/>
<rect x="196.3" y="320.1" width="110.0" height="1.3" fill="#fff" opacity="0.22"/>
<rect x="195.7" y="326.3" width="150.3" height="6.0" fill="url(#hb8)" stroke="#000" stroke-width="1.1"/>
<rect x="196.3" y="327.2" width="149.0" height="1.3" fill="#fff" opacity="0.22"/>
<rect x="195.7" y="333.5" width="104.0" height="6.0" fill="url(#hb9)" stroke="#000" stroke-width="1.1"/>
<rect x="196.3" y="334.4" width="102.7" height="1.3" fill="#fff" opacity="0.22"/>
<rect x="195.7" y="340.6" width="149.2" height="6.0" fill="url(#hb10)" stroke="#000" stroke-width="1.1"/>
<rect x="196.3" y="341.5" width="147.9" height="1.3" fill="#fff" opacity="0.22"/>
<rect x="195.7" y="347.8" width="131.6" height="6.0" fill="url(#hb11)" stroke="#000" stroke-width="1.1"/>
<rect x="196.3" y="348.7" width="130.3" height="1.3" fill="#fff" opacity="0.22"/>
<rect x="195.7" y="354.9" width="151.6" height="6.0" fill="url(#hb12)" stroke="#000" stroke-width="1.1"/>
<rect x="196.3" y="355.8" width="150.3" height="1.3" fill="#fff" opacity="0.22"/>
<rect x="195.7" y="377.7" width="121.2" height="6.0" fill="url(#hb13)" stroke="#000" stroke-width="1.1"/>
<rect x="196.3" y="378.6" width="119.9" height="1.3" fill="#fff" opacity="0.22"/>
<rect x="195.7" y="384.8" width="153.8" height="6.0" fill="url(#hb14)" stroke="#000" stroke-width="1.1"/>
<rect x="196.3" y="385.7" width="152.5" height="1.3" fill="#fff" opacity="0.22"/>
<rect x="195.7" y="392.0" width="135.1" height="6.0" fill="url(#hb15)" stroke="#000" stroke-width="1.1"/>
<rect x="196.3" y="392.9" width="133.8" height="1.3" fill="#fff" opacity="0.22"/>
<rect x="195.7" y="399.1" width="148.8" height="6.0" fill="url(#hb16)" stroke="#000" stroke-width="1.1"/>
<rect x="196.3" y="400.0" width="147.5" height="1.3" fill="#fff" opacity="0.22"/>
<rect x="195.7" y="406.3" width="138.2" height="6.0" fill="url(#hb17)" stroke="#000" stroke-width="1.1"/>
<rect x="196.3" y="407.2" width="136.9" height="1.3" fill="#fff" opacity="0.22"/>
<rect x="195.7" y="413.4" width="150.3" height="6.0" fill="url(#hb18)" stroke="#000" stroke-width="1.1"/>
<rect x="196.3" y="414.3" width="149.0" height="1.3" fill="#fff" opacity="0.22"/>
<rect x="195.7" y="436.2" width="159.6" height="6.0" fill="url(#hb19)" stroke="#000" stroke-width="1.1"/>
<rect x="196.3" y="437.1" width="158.3" height="1.3" fill="#fff" opacity="0.22"/>
<rect x="195.7" y="443.3" width="155.1" height="6.0" fill="url(#hb20)" stroke="#000" stroke-width="1.1"/>
<rect x="196.3" y="444.2" width="153.8" height="1.3" fill="#fff" opacity="0.22"/>
<rect x="195.7" y="450.5" width="172.6" height="6.0" fill="url(#hb21)" stroke="#000" stroke-width="1.1"/>
<rect x="196.3" y="451.4" width="171.3" height="1.3" fill="#fff" opacity="0.22"/>
<rect x="195.7" y="457.6" width="155.1" height="6.0" fill="url(#hb22)" stroke="#000" stroke-width="1.1"/>
<rect x="196.3" y="458.5" width="153.8" height="1.3" fill="#fff" opacity="0.22"/>
<rect x="195.7" y="464.8" width="158.2" height="6.0" fill="url(#hb23)" stroke="#000" stroke-width="1.1"/>
<rect x="196.3" y="465.7" width="156.9" height="1.3" fill="#fff" opacity="0.22"/>
<rect x="195.7" y="471.9" width="154.0" height="6.0" fill="url(#hb24)" stroke="#000" stroke-width="1.1"/>
<rect x="196.3" y="472.8" width="152.7" height="1.3" fill="#fff" opacity="0.22"/>
<rect x="195.7" y="494.7" width="159.3" height="6.0" fill="url(#hb25)" stroke="#000" stroke-width="1.1"/>
<rect x="196.3" y="495.6" width="158.0" height="1.3" fill="#fff" opacity="0.22"/>
<rect x="195.7" y="501.8" width="157.8" height="6.0" fill="url(#hb26)" stroke="#000" stroke-width="1.1"/>
<rect x="196.3" y="502.7" width="156.5" height="1.3" fill="#fff" opacity="0.22"/>
<rect x="195.7" y="509.0" width="181.4" height="6.0" fill="url(#hb27)" stroke="#000" stroke-width="1.1"/>
<rect x="196.3" y="509.9" width="180.1" height="1.3" fill="#fff" opacity="0.22"/>
<rect x="195.7" y="516.1" width="162.0" height="6.0" fill="url(#hb28)" stroke="#000" stroke-width="1.1"/>
<rect x="196.3" y="517.0" width="160.7" height="1.3" fill="#fff" opacity="0.22"/>
<rect x="195.7" y="523.3" width="162.4" height="6.0" fill="url(#hb29)" stroke="#000" stroke-width="1.1"/>
<rect x="196.3" y="524.2" width="161.1" height="1.3" fill="#fff" opacity="0.22"/>
<rect x="195.7" y="530.5" width="173.9" height="6.0" fill="url(#hb30)" stroke="#000" stroke-width="1.1"/>
<rect x="196.3" y="531.4" width="172.6" height="1.3" fill="#fff" opacity="0.22"/>
<rect x="195.7" y="597.1" width="138.4" height="6.0" fill="url(#hb31)" stroke="#000" stroke-width="1.1"/>
<rect x="196.3" y="598.0" width="137.1" height="1.3" fill="#fff" opacity="0.22"/>
<rect x="196.20" y="654.60" width="4.50" height="6.00" fill="#000"/>
<rect x="582.60" y="198.00" width="153.80" height="299.20" fill="#252525"/>
<line x1="576.60" y1="198.20" x2="736.40" y2="198.20" stroke="#9c9c9c" stroke-width="1.5"/>
<text x="558.6" y="203.8" font-size="15.3" fill="#dcdcdc" textLength="17.5" lengthAdjust="spacingAndGlyphs" stroke="#dcdcdc" stroke-width="0.28">15</text>
<line x1="576.60" y1="247.60" x2="736.40" y2="247.60" stroke="#9c9c9c" stroke-width="1.5"/>
<text x="558.6" y="253.2" font-size="15.3" fill="#dcdcdc" textLength="17.5" lengthAdjust="spacingAndGlyphs" stroke="#dcdcdc" stroke-width="0.28">10</text>
<line x1="576.60" y1="297.80" x2="736.40" y2="297.80" stroke="#9c9c9c" stroke-width="1.5"/>
<text x="567.3" y="303.4" font-size="15.3" fill="#dcdcdc" textLength="8.8" lengthAdjust="spacingAndGlyphs" stroke="#dcdcdc" stroke-width="0.28">5</text>
<line x1="576.60" y1="348.60" x2="736.40" y2="348.60" stroke="#9c9c9c" stroke-width="1.5"/>
<text x="567.3" y="354.2" font-size="15.3" fill="#dcdcdc" textLength="8.8" lengthAdjust="spacingAndGlyphs" stroke="#dcdcdc" stroke-width="0.28">0</text>
<line x1="576.60" y1="397.80" x2="736.40" y2="397.80" stroke="#9c9c9c" stroke-width="1.5"/>
<text x="562.0" y="403.4" font-size="15.3" fill="#dcdcdc" textLength="14.1" lengthAdjust="spacingAndGlyphs" stroke="#dcdcdc" stroke-width="0.28">-5</text>
<line x1="576.60" y1="447.80" x2="736.40" y2="447.80" stroke="#9c9c9c" stroke-width="1.5"/>
<text x="553.3" y="453.4" font-size="15.3" fill="#dcdcdc" textLength="22.8" lengthAdjust="spacingAndGlyphs" stroke="#dcdcdc" stroke-width="0.28">-10</text>
<line x1="576.60" y1="497.20" x2="736.40" y2="497.20" stroke="#9c9c9c" stroke-width="1.5"/>
<text x="553.3" y="502.8" font-size="15.3" fill="#dcdcdc" textLength="22.8" lengthAdjust="spacingAndGlyphs" stroke="#dcdcdc" stroke-width="0.28">-15</text>
<path d="M582.6 198.0V504.2M736.4 198.0V504.2" stroke="#9c9c9c" stroke-width="1.6" fill="none"/>
<text x="623.3" y="191.3" font-size="15.3" fill="#dcdcdc" textLength="44.4" lengthAdjust="spacingAndGlyphs" stroke="#dcdcdc" stroke-width="0.28">DeltaL</text>
<text x="640.2" y="513.7" font-size="15.3" fill="#dcdcdc" textLength="38.7" lengthAdjust="spacingAndGlyphs" stroke="#dcdcdc" stroke-width="0.28">100%</text>
<rect x="598.1" y="348.6" width="122.3" height="78.6" fill="url(#gYb)" stroke="#000" stroke-width="1.4"/>
<rect x="791.80" y="198.00" width="153.80" height="299.20" fill="#252525"/>
<line x1="785.80" y1="198.20" x2="945.60" y2="198.20" stroke="#9c9c9c" stroke-width="1.5"/>
<text x="767.8" y="203.8" font-size="15.3" fill="#dcdcdc" textLength="17.5" lengthAdjust="spacingAndGlyphs" stroke="#dcdcdc" stroke-width="0.28">15</text>
<line x1="785.80" y1="247.60" x2="945.60" y2="247.60" stroke="#9c9c9c" stroke-width="1.5"/>
<text x="767.8" y="253.2" font-size="15.3" fill="#dcdcdc" textLength="17.5" lengthAdjust="spacingAndGlyphs" stroke="#dcdcdc" stroke-width="0.28">10</text>
<line x1="785.80" y1="297.80" x2="945.60" y2="297.80" stroke="#9c9c9c" stroke-width="1.5"/>
<text x="776.5" y="303.4" font-size="15.3" fill="#dcdcdc" textLength="8.8" lengthAdjust="spacingAndGlyphs" stroke="#dcdcdc" stroke-width="0.28">5</text>
<line x1="785.80" y1="348.60" x2="945.60" y2="348.60" stroke="#9c9c9c" stroke-width="1.5"/>
<text x="776.5" y="354.2" font-size="15.3" fill="#dcdcdc" textLength="8.8" lengthAdjust="spacingAndGlyphs" stroke="#dcdcdc" stroke-width="0.28">0</text>
<line x1="785.80" y1="397.80" x2="945.60" y2="397.80" stroke="#9c9c9c" stroke-width="1.5"/>
<text x="771.2" y="403.4" font-size="15.3" fill="#dcdcdc" textLength="14.1" lengthAdjust="spacingAndGlyphs" stroke="#dcdcdc" stroke-width="0.28">-5</text>
<line x1="785.80" y1="447.80" x2="945.60" y2="447.80" stroke="#9c9c9c" stroke-width="1.5"/>
<text x="762.5" y="453.4" font-size="15.3" fill="#dcdcdc" textLength="22.8" lengthAdjust="spacingAndGlyphs" stroke="#dcdcdc" stroke-width="0.28">-10</text>
<line x1="785.80" y1="497.20" x2="945.60" y2="497.20" stroke="#9c9c9c" stroke-width="1.5"/>
<text x="762.5" y="502.8" font-size="15.3" fill="#dcdcdc" textLength="22.8" lengthAdjust="spacingAndGlyphs" stroke="#dcdcdc" stroke-width="0.28">-15</text>
<path d="M791.8 198.0V504.2M945.6 198.0V504.2" stroke="#9c9c9c" stroke-width="1.6" fill="none"/>
<text x="831.5" y="191.3" font-size="15.3" fill="#dcdcdc" textLength="46.3" lengthAdjust="spacingAndGlyphs" stroke="#dcdcdc" stroke-width="0.28">DeltaC</text>
<text x="849.4" y="513.7" font-size="15.3" fill="#dcdcdc" textLength="38.7" lengthAdjust="spacingAndGlyphs" stroke="#dcdcdc" stroke-width="0.28">100%</text>
<rect x="807.3" y="348.6" width="122.3" height="20.5" fill="url(#gYb)" stroke="#000" stroke-width="1.4"/>
<rect x="1001.00" y="198.00" width="154.20" height="299.20" fill="#252525"/>
<line x1="995.00" y1="198.20" x2="1155.20" y2="198.20" stroke="#9c9c9c" stroke-width="1.5"/>
<text x="977.0" y="203.8" font-size="15.3" fill="#dcdcdc" textLength="17.5" lengthAdjust="spacingAndGlyphs" stroke="#dcdcdc" stroke-width="0.28">15</text>
<line x1="995.00" y1="247.60" x2="1155.20" y2="247.60" stroke="#9c9c9c" stroke-width="1.5"/>
<text x="977.0" y="253.2" font-size="15.3" fill="#dcdcdc" textLength="17.5" lengthAdjust="spacingAndGlyphs" stroke="#dcdcdc" stroke-width="0.28">10</text>
<line x1="995.00" y1="297.80" x2="1155.20" y2="297.80" stroke="#9c9c9c" stroke-width="1.5"/>
<text x="985.7" y="303.4" font-size="15.3" fill="#dcdcdc" textLength="8.8" lengthAdjust="spacingAndGlyphs" stroke="#dcdcdc" stroke-width="0.28">5</text>
<line x1="995.00" y1="348.60" x2="1155.20" y2="348.60" stroke="#9c9c9c" stroke-width="1.5"/>
<text x="985.7" y="354.2" font-size="15.3" fill="#dcdcdc" textLength="8.8" lengthAdjust="spacingAndGlyphs" stroke="#dcdcdc" stroke-width="0.28">0</text>
<line x1="995.00" y1="397.80" x2="1155.20" y2="397.80" stroke="#9c9c9c" stroke-width="1.5"/>
<text x="980.4" y="403.4" font-size="15.3" fill="#dcdcdc" textLength="14.1" lengthAdjust="spacingAndGlyphs" stroke="#dcdcdc" stroke-width="0.28">-5</text>
<line x1="995.00" y1="447.80" x2="1155.20" y2="447.80" stroke="#9c9c9c" stroke-width="1.5"/>
<text x="971.7" y="453.4" font-size="15.3" fill="#dcdcdc" textLength="22.8" lengthAdjust="spacingAndGlyphs" stroke="#dcdcdc" stroke-width="0.28">-10</text>
<line x1="995.00" y1="497.20" x2="1155.20" y2="497.20" stroke="#9c9c9c" stroke-width="1.5"/>
<text x="971.7" y="502.8" font-size="15.3" fill="#dcdcdc" textLength="22.8" lengthAdjust="spacingAndGlyphs" stroke="#dcdcdc" stroke-width="0.28">-15</text>
<path d="M1001.0 198.0V504.2M1155.2 198.0V504.2" stroke="#9c9c9c" stroke-width="1.6" fill="none"/>
<text x="1040.2" y="191.3" font-size="15.3" fill="#dcdcdc" textLength="47.9" lengthAdjust="spacingAndGlyphs" stroke="#dcdcdc" stroke-width="0.28">DeltaH</text>
<text x="1058.8" y="513.7" font-size="15.3" fill="#dcdcdc" textLength="38.7" lengthAdjust="spacingAndGlyphs" stroke="#dcdcdc" stroke-width="0.28">100%</text>
<rect x="1016.5" y="348.6" width="122.7" height="47.8" fill="url(#gYb)" stroke="#000" stroke-width="1.4"/>
<rect x="547.30" y="525.00" width="628.70" height="172.70" fill="#000"/>
<rect x="570.00" y="532.30" width="105.00" height="70.00" fill="#b3a98a"/>
<rect x="570.00" y="602.00" width="105.00" height="70.70" fill="#c0c09e"/>
<rect x="570.0" y="532.3" width="105" height="140.4" fill="none" stroke="#f4f4f4" stroke-width="1.3"/>
<text x="610.7" y="689.2" font-size="12.0" fill="#fff" textLength="23.5" lengthAdjust="spacingAndGlyphs" stroke="#fff" stroke-width="0.28">20%</text>
<rect x="692.60" y="532.30" width="105.00" height="70.00" fill="#b3a86d"/>
<rect x="692.60" y="602.00" width="105.00" height="70.70" fill="#c0c080"/>
<rect x="692.6" y="532.3" width="105" height="140.4" fill="none" stroke="#f4f4f4" stroke-width="1.3"/>
<text x="733.3" y="689.2" font-size="12.0" fill="#fff" textLength="23.5" lengthAdjust="spacingAndGlyphs" stroke="#fff" stroke-width="0.28">40%</text>
<rect x="815.20" y="532.30" width="105.00" height="70.00" fill="#b5a651"/>
<rect x="815.20" y="602.00" width="105.00" height="70.70" fill="#c0c060"/>
<rect x="815.2" y="532.3" width="105" height="140.4" fill="none" stroke="#f4f4f4" stroke-width="1.3"/>
<text x="855.9" y="689.2" font-size="12.0" fill="#fff" textLength="23.5" lengthAdjust="spacingAndGlyphs" stroke="#fff" stroke-width="0.28">60%</text>
<rect x="937.80" y="532.30" width="105.00" height="70.00" fill="#b3a528"/>
<rect x="937.80" y="602.00" width="105.00" height="70.70" fill="#c2c030"/>
<rect x="937.8" y="532.3" width="105" height="140.4" fill="none" stroke="#f4f4f4" stroke-width="1.3"/>
<text x="978.5" y="689.2" font-size="12.0" fill="#fff" textLength="23.5" lengthAdjust="spacingAndGlyphs" stroke="#fff" stroke-width="0.28">80%</text>
<rect x="1060.40" y="532.30" width="105.00" height="70.00" fill="#baa91e"/>
<rect x="1060.40" y="602.00" width="105.00" height="70.70" fill="#c8c800"/>
<rect x="1060.4" y="532.3" width="105" height="140.4" fill="none" stroke="#f4f4f4" stroke-width="1.3"/>
<text x="1097.7" y="689.2" font-size="12.0" fill="#fff" textLength="30.4" lengthAdjust="spacingAndGlyphs" stroke="#fff" stroke-width="0.28">100%</text>
<g transform="translate(561.3,563.3) rotate(-90)"><text x="-17.5" y="0.0" font-size="12.0" fill="#fff" textLength="35.0" lengthAdjust="spacingAndGlyphs" stroke="#fff" stroke-width="0.28">Actual</text></g>
<g transform="translate(561.3,642) rotate(-90)"><text x="-17.1" y="0.0" font-size="12.0" fill="#fff" textLength="34.2" lengthAdjust="spacingAndGlyphs" stroke="#fff" stroke-width="0.28">Target</text></g>
<text x="204.1" y="746.5" font-size="31.2" fill="#f2f2f2" textLength="246.2" lengthAdjust="spacingAndGlyphs" stroke="#f2f2f2" stroke-width="0.18">Avg dE2000: 6.61</text>
<text x="199.8" y="789.1" font-size="31.2" fill="#f2f2f2" textLength="255.6" lengthAdjust="spacingAndGlyphs" stroke="#f2f2f2" stroke-width="0.18">Max dE2000: 8.29</text>
<text x="165.8" y="838.9" font-size="31.2" fill="#f2f2f2" textLength="231.7" lengthAdjust="spacingAndGlyphs" stroke="#f2f2f2" stroke-width="0.18">Current Reading</text>
<text x="165.8" y="877.6" font-size="25.8" fill="#f2f2f2" textLength="108.5" lengthAdjust="spacingAndGlyphs" stroke="#f2f2f2" stroke-width="0.18">x: 0.4479</text>
<text x="331.7" y="877.6" font-size="25.8" fill="#f2f2f2" textLength="108.4" lengthAdjust="spacingAndGlyphs" stroke="#f2f2f2" stroke-width="0.18">y: 0.5245</text>
<text x="165.8" y="921.0" font-size="25.8" fill="#f2f2f2" textLength="101.6" lengthAdjust="spacingAndGlyphs" stroke="#f2f2f2" stroke-width="0.18">fL: 68.49</text>
<text x="165.8" y="957.0" font-size="25.8" fill="#f2f2f2" textLength="167.9" lengthAdjust="spacingAndGlyphs" stroke="#f2f2f2" stroke-width="0.18">cd/m²: 234.68</text>
<rect x="525.10" y="753.60" width="268.70" height="191.20" fill="#252525"/>
<line x1="519.10" y1="786.40" x2="793.80" y2="786.40" stroke="#9c9c9c" stroke-width="1.5"/>
<text x="500.8" y="792.0" font-size="15.3" fill="#dcdcdc" textLength="17.5" lengthAdjust="spacingAndGlyphs" stroke="#dcdcdc" stroke-width="0.28">20</text>
<line x1="519.10" y1="849.90" x2="793.80" y2="849.90" stroke="#9c9c9c" stroke-width="1.5"/>
<text x="509.5" y="855.5" font-size="15.3" fill="#dcdcdc" textLength="8.8" lengthAdjust="spacingAndGlyphs" stroke="#dcdcdc" stroke-width="0.28">0</text>
<line x1="519.10" y1="913.40" x2="793.80" y2="913.40" stroke="#9c9c9c" stroke-width="1.5"/>
<text x="495.5" y="919.0" font-size="15.3" fill="#dcdcdc" textLength="22.8" lengthAdjust="spacingAndGlyphs" stroke="#dcdcdc" stroke-width="0.28">-20</text>
<path d="M525.1 951.8V753.6H793.8V951.8M525.1 944.8H793.8" stroke="#9c9c9c" stroke-width="1.6" fill="none"/>
<text x="600.6" y="748.2" font-size="15.3" fill="#dcdcdc" textLength="88.4" lengthAdjust="spacingAndGlyphs" stroke="#dcdcdc" stroke-width="0.28">RGB Balance</text>
<text x="640.2" y="962.2" font-size="15.3" fill="#dcdcdc" textLength="38.7" lengthAdjust="spacingAndGlyphs" stroke="#dcdcdc" stroke-width="0.28">100%</text>
<rect x="552.3" y="850" width="71.2" height="54.7" fill="url(#gR)" stroke="#000" stroke-width="1.4"/>
<rect x="624.2" y="850" width="71.2" height="85.1" fill="url(#gG)" stroke="#000" stroke-width="1.4"/>
<rect x="696.8" y="833.5" width="71.5" height="16.5" fill="url(#gB)" stroke="#000" stroke-width="1.4"/>
<rect x="817.00" y="721.30" width="765.00" height="30.00" fill="url(#gTh)"/>
<rect x="817.00" y="721.30" width="21.00" height="30.00" fill="#000"/>
<text x="1013.6" y="742.6" font-size="17.7" fill="#ececec" textLength="42.9" lengthAdjust="spacingAndGlyphs" stroke="#ececec" stroke-width="0.28">20%</text>
<text x="1128.3" y="742.6" font-size="17.7" fill="#ececec" textLength="42.9" lengthAdjust="spacingAndGlyphs" stroke="#ececec" stroke-width="0.28">40%</text>
<text x="1243.0" y="742.6" font-size="17.7" fill="#ececec" textLength="42.9" lengthAdjust="spacingAndGlyphs" stroke="#ececec" stroke-width="0.28">60%</text>
<text x="1357.7" y="742.6" font-size="17.7" fill="#ececec" textLength="42.9" lengthAdjust="spacingAndGlyphs" stroke="#ececec" stroke-width="0.28">80%</text>
<text x="1472.6" y="742.6" font-size="17.7" fill="#ececec" textLength="55.4" lengthAdjust="spacingAndGlyphs" stroke="#ececec" stroke-width="0.28">100%</text>
<rect x="817.00" y="751.10" width="765.00" height="27.50" fill="#404040"/>
<rect x="817.00" y="751.10" width="21.00" height="27.50" fill="#282828"/>
<text x="844.6" y="772.0" font-size="18.1" fill="#ececec" textLength="83.3" lengthAdjust="spacingAndGlyphs" stroke="#ececec" stroke-width="0.28">x: CIE31</text>
<text x="1013.6" y="772.0" font-size="17.9" fill="#ececec" textLength="70.6" lengthAdjust="spacingAndGlyphs" stroke="#ececec" stroke-width="0.28">0.3508</text>
<text x="1128.3" y="772.0" font-size="17.9" fill="#ececec" textLength="70.6" lengthAdjust="spacingAndGlyphs" stroke="#ececec" stroke-width="0.28">0.3755</text>
<text x="1243.0" y="772.0" font-size="17.9" fill="#ececec" textLength="70.6" lengthAdjust="spacingAndGlyphs" stroke="#ececec" stroke-width="0.28">0.3988</text>
<text x="1357.7" y="772.0" font-size="17.9" fill="#ececec" textLength="70.6" lengthAdjust="spacingAndGlyphs" stroke="#ececec" stroke-width="0.28">0.4221</text>
<text x="1472.6" y="772.0" font-size="17.9" fill="#ececec" textLength="70.6" lengthAdjust="spacingAndGlyphs" stroke="#ececec" stroke-width="0.28">0.4479</text>
<rect x="817.00" y="778.50" width="765.00" height="27.50" fill="#808080"/>
<rect x="817.00" y="778.50" width="21.00" height="27.50" fill="#3c3c3c"/>
<text x="844.6" y="799.4" font-size="18.1" fill="#ececec" textLength="84.5" lengthAdjust="spacingAndGlyphs" stroke="#ececec" stroke-width="0.28">y: CIE31</text>
<text x="1013.6" y="799.4" font-size="17.9" fill="#ececec" textLength="70.6" lengthAdjust="spacingAndGlyphs" stroke="#ececec" stroke-width="0.28">0.3718</text>
<text x="1128.3" y="799.4" font-size="17.9" fill="#ececec" textLength="70.6" lengthAdjust="spacingAndGlyphs" stroke="#ececec" stroke-width="0.28">0.4107</text>
<text x="1243.0" y="799.4" font-size="17.9" fill="#ececec" textLength="70.6" lengthAdjust="spacingAndGlyphs" stroke="#ececec" stroke-width="0.28">0.4477</text>
<text x="1357.7" y="799.4" font-size="17.9" fill="#ececec" textLength="70.6" lengthAdjust="spacingAndGlyphs" stroke="#ececec" stroke-width="0.28">0.4836</text>
<text x="1472.6" y="799.4" font-size="17.9" fill="#ececec" textLength="70.6" lengthAdjust="spacingAndGlyphs" stroke="#ececec" stroke-width="0.28">0.5245</text>
<rect x="817.00" y="805.90" width="765.00" height="27.50" fill="#404040"/>
<rect x="817.00" y="805.90" width="21.00" height="27.50" fill="#282828"/>
<text x="844.6" y="826.8" font-size="18.1" fill="#ececec" textLength="12.5" lengthAdjust="spacingAndGlyphs" stroke="#ececec" stroke-width="0.28">Y</text>
<text x="1013.6" y="826.8" font-size="17.9" fill="#ececec" textLength="96.3" lengthAdjust="spacingAndGlyphs" stroke="#ececec" stroke-width="0.28">250.2786</text>
<text x="1128.3" y="826.8" font-size="17.9" fill="#ececec" textLength="96.3" lengthAdjust="spacingAndGlyphs" stroke="#ececec" stroke-width="0.28">245.0241</text>
<text x="1243.0" y="826.8" font-size="17.9" fill="#ececec" textLength="96.3" lengthAdjust="spacingAndGlyphs" stroke="#ececec" stroke-width="0.28">241.6797</text>
<text x="1357.7" y="826.8" font-size="17.9" fill="#ececec" textLength="96.3" lengthAdjust="spacingAndGlyphs" stroke="#ececec" stroke-width="0.28">238.1160</text>
<text x="1472.6" y="826.8" font-size="17.9" fill="#ececec" textLength="96.3" lengthAdjust="spacingAndGlyphs" stroke="#ececec" stroke-width="0.28">234.6756</text>
<rect x="817.00" y="833.30" width="765.00" height="27.50" fill="#808080"/>
<rect x="817.00" y="833.30" width="21.00" height="27.50" fill="#3c3c3c"/>
<text x="844.6" y="854.2" font-size="18.1" fill="#ececec" textLength="151.6" lengthAdjust="spacingAndGlyphs" stroke="#ececec" stroke-width="0.28">Target x:CIE31</text>
<text x="1013.6" y="854.2" font-size="17.9" fill="#ececec" textLength="70.6" lengthAdjust="spacingAndGlyphs" stroke="#ececec" stroke-width="0.28">0.3384</text>
<text x="1128.3" y="854.2" font-size="17.9" fill="#ececec" textLength="70.6" lengthAdjust="spacingAndGlyphs" stroke="#ececec" stroke-width="0.28">0.3619</text>
<text x="1243.0" y="854.2" font-size="17.9" fill="#ececec" textLength="70.6" lengthAdjust="spacingAndGlyphs" stroke="#ececec" stroke-width="0.28">0.3869</text>
<text x="1357.7" y="854.2" font-size="17.9" fill="#ececec" textLength="70.6" lengthAdjust="spacingAndGlyphs" stroke="#ececec" stroke-width="0.28">0.4128</text>
<text x="1472.6" y="854.2" font-size="17.9" fill="#ececec" textLength="70.6" lengthAdjust="spacingAndGlyphs" stroke="#ececec" stroke-width="0.28">0.4378</text>
<rect x="817.00" y="860.70" width="765.00" height="27.50" fill="#404040"/>
<rect x="817.00" y="860.70" width="21.00" height="27.50" fill="#282828"/>
<text x="844.6" y="881.6" font-size="18.1" fill="#ececec" textLength="152.6" lengthAdjust="spacingAndGlyphs" stroke="#ececec" stroke-width="0.28">Target y:CIE31</text>
<text x="1013.6" y="881.6" font-size="17.9" fill="#ececec" textLength="70.6" lengthAdjust="spacingAndGlyphs" stroke="#ececec" stroke-width="0.28">0.3714</text>
<text x="1128.3" y="881.6" font-size="17.9" fill="#ececec" textLength="70.6" lengthAdjust="spacingAndGlyphs" stroke="#ececec" stroke-width="0.28">0.4103</text>
<text x="1243.0" y="881.6" font-size="17.9" fill="#ececec" textLength="70.6" lengthAdjust="spacingAndGlyphs" stroke="#ececec" stroke-width="0.28">0.4517</text>
<text x="1357.7" y="881.6" font-size="17.9" fill="#ececec" textLength="70.6" lengthAdjust="spacingAndGlyphs" stroke="#ececec" stroke-width="0.28">0.4944</text>
<text x="1472.6" y="881.6" font-size="17.9" fill="#ececec" textLength="70.6" lengthAdjust="spacingAndGlyphs" stroke="#ececec" stroke-width="0.28">0.5359</text>
<rect x="817.00" y="888.10" width="765.00" height="27.50" fill="#808080"/>
<rect x="817.00" y="888.10" width="21.00" height="27.50" fill="#3c3c3c"/>
<text x="844.6" y="909.0" font-size="18.1" fill="#ececec" textLength="87.4" lengthAdjust="spacingAndGlyphs" stroke="#ececec" stroke-width="0.28">Target Y</text>
<text x="1013.6" y="909.0" font-size="17.9" fill="#ececec" textLength="96.3" lengthAdjust="spacingAndGlyphs" stroke="#ececec" stroke-width="0.28">326.1134</text>
<text x="1128.3" y="909.0" font-size="17.9" fill="#ececec" textLength="96.3" lengthAdjust="spacingAndGlyphs" stroke="#ececec" stroke-width="0.28">320.2686</text>
<text x="1243.0" y="909.0" font-size="17.9" fill="#ececec" textLength="96.3" lengthAdjust="spacingAndGlyphs" stroke="#ececec" stroke-width="0.28">315.3245</text>
<text x="1357.7" y="909.0" font-size="17.9" fill="#ececec" textLength="96.3" lengthAdjust="spacingAndGlyphs" stroke="#ececec" stroke-width="0.28">311.2091</text>
<text x="1472.6" y="909.0" font-size="17.9" fill="#ececec" textLength="96.3" lengthAdjust="spacingAndGlyphs" stroke="#ececec" stroke-width="0.28">307.9188</text>
<rect x="817.00" y="915.50" width="765.00" height="27.50" fill="#404040"/>
<rect x="817.00" y="915.50" width="21.00" height="27.50" fill="#282828"/>
<text x="844.6" y="936.4" font-size="18.1" fill="#ececec" textLength="88.7" lengthAdjust="spacingAndGlyphs" stroke="#ececec" stroke-width="0.28">ΔE 2000</text>
<text x="1013.6" y="936.4" font-size="17.9" fill="#ececec" textLength="70.6" lengthAdjust="spacingAndGlyphs" stroke="#ececec" stroke-width="0.28">7.9073</text>
<text x="1128.3" y="936.4" font-size="17.9" fill="#ececec" textLength="70.6" lengthAdjust="spacingAndGlyphs" stroke="#ececec" stroke-width="0.28">7.0079</text>
<text x="1243.0" y="936.4" font-size="17.9" fill="#ececec" textLength="70.6" lengthAdjust="spacingAndGlyphs" stroke="#ececec" stroke-width="0.28">6.8368</text>
<text x="1357.7" y="936.4" font-size="17.9" fill="#ececec" textLength="70.6" lengthAdjust="spacingAndGlyphs" stroke="#ececec" stroke-width="0.28">6.9032</text>
<text x="1472.6" y="936.4" font-size="17.9" fill="#ececec" textLength="70.6" lengthAdjust="spacingAndGlyphs" stroke="#ececec" stroke-width="0.28">6.8116</text>
<rect x="817.00" y="942.90" width="765.00" height="27.50" fill="#808080"/>
<rect x="817.00" y="942.90" width="21.00" height="27.50" fill="#3c3c3c"/>
<text x="844.6" y="963.8" font-size="18.1" fill="#ececec" textLength="59.9" lengthAdjust="spacingAndGlyphs" stroke="#ececec" stroke-width="0.28">dEITP</text>
<text x="1013.6" y="963.8" font-size="17.9" fill="#ececec" textLength="83.5" lengthAdjust="spacingAndGlyphs" stroke="#ececec" stroke-width="0.28">21.4340</text>
<text x="1128.3" y="963.8" font-size="17.9" fill="#ececec" textLength="83.5" lengthAdjust="spacingAndGlyphs" stroke="#ececec" stroke-width="0.28">21.6616</text>
<text x="1243.0" y="963.8" font-size="17.9" fill="#ececec" textLength="83.5" lengthAdjust="spacingAndGlyphs" stroke="#ececec" stroke-width="0.28">21.2463</text>
<text x="1357.7" y="963.8" font-size="17.9" fill="#ececec" textLength="83.5" lengthAdjust="spacingAndGlyphs" stroke="#ececec" stroke-width="0.28">21.5580</text>
<text x="1472.6" y="963.8" font-size="17.9" fill="#ececec" textLength="83.5" lengthAdjust="spacingAndGlyphs" stroke="#ececec" stroke-width="0.28">21.9955</text>
<rect x="1183.00" y="120.00" width="737.00" height="591.00" fill="#1c1c1c"/>
<rect x="1190.00" y="127.00" width="722.00" height="577.00" fill="#323232"/>
<text x="1505.8" y="146.6" font-size="15.3" fill="#dcdcdc" textLength="89.5" lengthAdjust="spacingAndGlyphs" stroke="#dcdcdc" stroke-width="0.28">CIE 1976 u'v'</text>
<rect x="1230.00" y="153.00" width="678.70" height="522.30" fill="#242424"/>
<rect x="150.00" y="1010.60" width="1770.00" height="48.00" fill="url(#gBar)"/>
<rect x="150.00" y="1010.60" width="608.00" height="48.00" fill="#242424"/>
<rect x="151.3" y="1011.5" width="33.4" height="50" rx="3" fill="url(#gSw)"/>
<rect x="155" y="1031.3" width="26" height="22.4" rx="2.5" fill="#ffff00"/>
<circle cx="167.6" cy="1018" r="5.3" fill="#6c6c6c"/><path d="M164.4 1019.6H170.8L167.6 1015.8Z" fill="#222"/>
<rect x="189.0" y="1011.5" width="112" height="50" rx="3" fill="url(#gSw)"/>
<rect x="193.3" y="1015.5" width="104.7" height="26.7" rx="2.5" fill="#c0c0a0" stroke="#9a9a88" stroke-width="0.8"/>
<text x="237.8" y="1053.3" font-size="7.3" fill="#262626" font-weight="bold" textLength="14.5" lengthAdjust="spacingAndGlyphs" stroke="#262626" stroke-width="0.15">20%</text>
<rect x="303.0" y="1011.5" width="112" height="50" rx="3" fill="url(#gSw)"/>
<rect x="307.3" y="1015.5" width="104.7" height="26.7" rx="2.5" fill="#c0c082" stroke="#9a9a88" stroke-width="0.8"/>
<text x="351.8" y="1053.3" font-size="7.3" fill="#262626" font-weight="bold" textLength="14.5" lengthAdjust="spacingAndGlyphs" stroke="#262626" stroke-width="0.15">40%</text>
<rect x="417.0" y="1011.5" width="112" height="50" rx="3" fill="url(#gSw)"/>
<rect x="421.3" y="1015.5" width="104.7" height="26.7" rx="2.5" fill="#c0c062" stroke="#9a9a88" stroke-width="0.8"/>
<text x="465.8" y="1053.3" font-size="7.3" fill="#262626" font-weight="bold" textLength="14.5" lengthAdjust="spacingAndGlyphs" stroke="#262626" stroke-width="0.15">60%</text>
<rect x="531.0" y="1011.5" width="112" height="50" rx="3" fill="url(#gSw)"/>
<rect x="535.3" y="1015.5" width="104.7" height="26.7" rx="2.5" fill="#c2c03a" stroke="#9a9a88" stroke-width="0.8"/>
<text x="579.8" y="1053.3" font-size="7.3" fill="#262626" font-weight="bold" textLength="14.5" lengthAdjust="spacingAndGlyphs" stroke="#262626" stroke-width="0.15">80%</text>
<rect x="645.0" y="1011.5" width="112" height="50" rx="3" fill="#1b1b1b"/>
<rect x="649.3" y="1015.5" width="104.7" height="26.7" rx="2.5" fill="#c4c400" stroke="#111" stroke-width="0.8"/>
<text x="691.7" y="1053.3" font-size="7.3" fill="#fff" font-weight="bold" textLength="18.7" lengthAdjust="spacingAndGlyphs" stroke="#fff" stroke-width="0.15">100%</text>
<rect x="1715.0" y="1012.5" width="33.2" height="21" rx="2.5" fill="url(#gSb)" stroke="#444" stroke-width="0.8"/>
<circle cx="1731.6" cy="1023.5" r="6.2" fill="#5a5a5a"/><circle cx="1731.6" cy="1023.5" r="2.4" fill="#3a3a3a"/>
<rect x="1748.8" y="1012.5" width="33.2" height="21" rx="2.5" fill="url(#gSb)" stroke="#444" stroke-width="0.8"/>
<circle cx="1765.4" cy="1023.5" r="6.2" fill="#5a5a5a"/><circle cx="1765.4" cy="1023.5" r="2.4" fill="#3a3a3a"/>
<rect x="1782.7" y="1012.5" width="33.2" height="21" rx="2.5" fill="url(#gSb)" stroke="#444" stroke-width="0.8"/>
<circle cx="1799.3" cy="1023.5" r="6.2" fill="#5a5a5a"/><circle cx="1799.3" cy="1023.5" r="2.4" fill="#3a3a3a"/>
<rect x="1816.5" y="1012.5" width="33.2" height="21" rx="2.5" fill="url(#gSb)" stroke="#444" stroke-width="0.8"/>
<circle cx="1833.1" cy="1023.5" r="6.2" fill="#5a5a5a"/><circle cx="1833.1" cy="1023.5" r="2.4" fill="#3a3a3a"/>
<rect x="1850.4" y="1012.5" width="33.2" height="21" rx="2.5" fill="url(#gSb)" stroke="#444" stroke-width="0.8"/>
<circle cx="1867.0" cy="1023.5" r="6.2" fill="#5a5a5a"/><circle cx="1867.0" cy="1023.5" r="2.4" fill="#3a3a3a"/>
<rect x="1884.6" y="1012.5" width="34" height="21" rx="2.5" fill="#303030"/><circle cx="1902" cy="1023.5" r="6.2" fill="#282828"/>
<rect x="1677.8" y="1026.4" width="35.6" height="34" rx="3" fill="url(#gSb)" stroke="#444" stroke-width="0.8"/>
<rect x="1684.6" y="1030.5" width="21.6" height="21.6" rx="3.5" fill="#b0b0b0" stroke="#222" stroke-width="1.6"/><rect x="1690.6" y="1036.6" width="10.7" height="9.8" fill="#000"/>
<rect x="1715" y="1035" width="101" height="26" rx="3" fill="url(#gNb)" stroke="#555" stroke-width="0.8"/>
<rect x="1816.6" y="1035" width="104" height="26" rx="3" fill="url(#gNb)" stroke="#555" stroke-width="0.8"/>
<circle cx="1737.5" cy="1046" r="7.3" fill="#999"/><circle cx="1898.4" cy="1046" r="7.3" fill="#999"/>
<path d="M1737.6 1042.2L1734.2 1046L1737.6 1049.8M1741.4 1042.2L1738 1046L1741.4 1049.8" fill="none" stroke="#2a2a2a" stroke-width="1.2"/>
<path d="M1894.8 1042.2L1898.2 1046L1894.8 1049.8M1898.6 1042.2L1902 1046L1898.6 1049.8" fill="none" stroke="#2a2a2a" stroke-width="1.2"/>
<text x="1757.5" y="1051.6" font-size="17.1" fill="#262626" textLength="37.5" lengthAdjust="spacingAndGlyphs" stroke="#262626" stroke-width="0.28">Back</text>
<text x="1838.0" y="1051.6" font-size="17.1" fill="#262626" textLength="38.3" lengthAdjust="spacingAndGlyphs" stroke="#262626" stroke-width="0.28">Next</text>
</svg>
<div class="cie" style="left:1230.0px;top:162.0px;width:678.7px;height:502.0px"><i style="top:0px;height:1px;background:linear-gradient(90deg,#00ff02 0%,#01ff00 16.2%,#6bff00 25%,#dbff00 32.4%,#fffe00 34.5%,#ffbd00 38.9%,#ff8300 45.1%,#ff5000 54.2%,#ff2500 68.4%,#ff0000 91.9%,#ff0000 100%)"></i><i style="top:1px;height:1px;background:linear-gradient(90deg,#00ff03 0%,#01ff00 16.2%,#6bff00 25%,#dcff00 32.4%,#fffe00 34.5%,#ffc000 38.6%,#ff8700 44.5%,#ff5400 53.3%,#ff2800 66.9%,#ff0200 89.6%,#ff0000 100%)"></i><i style="top:2px;height:1px;background:linear-gradient(90deg,#00ff05 0%,#01ff00 16.2%,#6bff00 25%,#dcff00 32.4%,#fffd00 34.5%,#ffc000 38.6%,#ff8700 44.5%,#ff5400 53.3%,#ff2800 66.9%,#ff0200 89.6%,#ff0000 100%)"></i><i style="top:3px;height:1px;background:linear-gradient(90deg,#00ff06 0%,#00ff00 15.6%,#06ff00 16.8%,#73ff00 25.6%,#e6ff00 33%,#fffd00 34.5%,#ffc000 38.6%,#ff8700 44.5%,#ff5300 53.3%,#ff2700 66.9%,#ff0200 89.6%,#ff0000 100%)"></i><i style="top:4px;height:1px;background:linear-gradient(90deg,#00ff07 0%,#00ff00 15%,#03ff00 16.5%,#6fff00 25.3%,#e1ff00 32.7%,#fffd00 34.5%,#ffbf00 38.6%,#ff8700 44.5%,#ff5300 53.3%,#ff2700 66.9%,#ff0200 89.6%,#ff0000 100%)"></i><i style="top:5px;height:1px;background:linear-gradient(90deg,#00ff09 0%,#00ff00 15.3%,#06ff00 16.8%,#73ff00 25.6%,#e6ff00 33%,#fffd00 34.5%,#ffbf00 38.6%,#ff8600 44.5%,#ff5300 53.3%,#ff2700 66.9%,#ff0200 89.6%,#ff0000 100%)"></i><i style="top:6px;height:1px;background:linear-gradient(90deg,#00ff0a 0%,#00ff00 16.2%,#62ff00 24.5%,#d2ff00 31.8%,#fffc00 34.5%,#ffbf00 38.6%,#ff8600 44.5%,#ff5300 53.3%,#ff2700 66.9%,#ff0100 89.9%,#ff0000 100%)"></i><i style="top:7px;height:1px;background:linear-gradient(90deg,#00ff0c 0%,#02ff00 16.5%,#6eff00 25.3%,#e2ff00 32.7%,#fffc00 34.5%,#ffbe00 38.6%,#ff8600 44.5%,#ff5200 53.3%,#ff2600 66.9%,#ff0100 89.9%,#ff0000 100%)"></i><i style="top:8px;height:1px;background:linear-gradient(90deg,#00ff0d 0%,#01ff00 16.5%,#6eff00 25.3%,#e2ff00 32.7%,#fffc00 34.5%,#ffbe00 38.6%,#ff8500 44.5%,#ff5200 53.3%,#ff2600 66.9%,#ff0100 89.9%,#ff0000 100%)"></i><i style="top:9px;height:1px;background:linear-gradient(90deg,#00ff0e 0%,#01ff00 16.5%,#6eff00 25.3%,#e2ff00 32.7%,#fffc00 34.5%,#ffbe00 38.6%,#ff8500 44.5%,#ff5300 53%,#ff2700 66.6%,#ff0100 89.3%,#ff0000 100%)"></i><i style="top:10px;height:1px;background:linear-gradient(90deg,#00ff10 0%,#01ff00 16.5%,#6eff00 25.3%,#ddff00 32.4%,#fffb00 34.5%,#ffbe00 38.6%,#ff8500 44.5%,#ff5300 53%,#ff2600 66.6%,#ff0100 89.3%,#ff0000 100%)"></i><i style="top:11px;height:1px;background:linear-gradient(90deg,#00ff11 0%,#04ff01 16.8%,#6eff00 25.3%,#ddff00 32.4%,#fffb00 34.5%,#ffbd00 38.6%,#ff8400 44.5%,#ff5200 53%,#ff2600 66.6%,#ff0100 89.3%,#ff0000 100%)"></i><i style="top:12px;height:1px;background:linear-gradient(90deg,#00ff13 0%,#03ff03 16.8%,#6dff00 25.3%,#ddff00 32.4%,#feff00 34.2%,#ffb900 38.9%,#ff8200 44.8%,#ff5000 53.6%,#ff2400 67.5%,#ff0000 90.2%,#ff0000 100%)"></i><i style="top:13px;height:1px;background:linear-gradient(90deg,#00ff14 0%,#03ff05 16.8%,#6dff00 25.3%,#ddff00 32.4%,#feff00 34.2%,#ffbd00 38.6%,#ff8400 44.5%,#ff5200 53%,#ff2600 66.6%,#ff0100 89.3%,#ff0000 100%)"></i><i style="top:14px;height:1px;background:linear-gradient(90deg,#00ff16 0%,#02ff07 16.8%,#6dff00 25.3%,#deff00 32.4%,#feff00 34.2%,#ffbc00 38.6%,#ff8300 44.5%,#ff5200 53%,#ff2500 66.6%,#ff0000 89.3%,#ff0000 100%)"></i><i style="top:15px;height:1px;background:linear-gradient(90deg,#00ff17 0%,#02ff08 16.8%,#6dff00 25.3%,#deff00 32.4%,#feff00 34.2%,#ffbc00 38.6%,#ff8300 44.5%,#ff5100 53%,#ff2500 66.6%,#ff0000 89.3%,#ff0000 100%)"></i><i style="top:16px;height:1px;background:linear-gradient(90deg,#00ff18 0%,#02ff0a 16.8%,#6dff00 25.3%,#deff00 32.4%,#ffff00 34.2%,#ffbf00 38.3%,#ff8500 44.2%,#ff5200 52.7%,#ff2600 66%,#ff0100 88.4%,#ff0000 100%)"></i><i style="top:17px;height:1px;background:linear-gradient(90deg,#00ff1a 0%,#01ff0c 16.8%,#6dff02 25.3%,#deff00 32.4%,#ffff00 34.2%,#ffbf00 38.3%,#ff8700 43.9%,#ff5500 52.2%,#ff2800 65.1%,#ff0300 86.9%,#ff0000 100%)"></i><i style="top:18px;height:1px;background:linear-gradient(90deg,#00ff1b 0%,#01ff0e 16.8%,#6cff04 25.3%,#deff00 32.4%,#ffff00 34.2%,#ffbf00 38.3%,#ff8700 43.9%,#ff5400 52.2%,#ff2800 65.1%,#ff0200 86.9%,#ff0000 100%)"></i><i style="top:19px;height:1px;background:linear-gradient(90deg,#00ff1d 0%,#01ff0f 16.8%,#6cff06 25.3%,#deff00 32.4%,#ffff00 34.2%,#ffbe00 38.3%,#ff8600 43.9%,#ff5400 52.2%,#ff2800 65.1%,#ff0200 86.9%,#ff0000 100%)"></i><i style="top:20px;height:1px;background:linear-gradient(90deg,#00ff1e 0%,#03ff11 17.1%,#70ff08 25.6%,#e4ff00 32.7%,#fffe00 34.2%,#ffbe00 38.3%,#ff8600 43.9%,#ff5400 52.2%,#ff2800 65.1%,#ff0200 86.9%,#ff0000 100%)"></i><i style="top:21px;height:1px;background:linear-gradient(90deg,#00ff20 0%,#03ff13 17.1%,#70ff0a 25.6%,#e4ff00 32.7%,#fffe00 34.2%,#ffbe00 38.3%,#ff8600 43.9%,#ff5300 52.2%,#ff2700 65.1%,#ff0200 86.9%,#ff0000 100%)"></i><i style="top:22px;height:1px;background:linear-gradient(90deg,#00ff21 0%,#03ff15 17.1%,#70ff0c 25.6%,#e4ff02 32.7%,#fffe00 34.2%,#ffbd00 38.3%,#ff8500 43.9%,#ff5300 52.2%,#ff2700 65.1%,#ff0200 86.9%,#ff0000 100%)"></i><i style="top:23px;height:1px;background:linear-gradient(90deg,#00ff23 0%,#02ff16 17.1%,#6cff0e 25.3%,#dfff05 32.4%,#fffe02 34.2%,#ffbd00 38.3%,#ff8500 43.9%,#ff5300 52.2%,#ff2700 65.1%,#ff0100 86.9%,#ff0000 100%)"></i><i style="top:24px;height:1px;background:linear-gradient(90deg,#00ff24 0%,#02ff18 17.1%,#6cff10 25.3%,#dfff07 32.4%,#fffd04 34.2%,#ffbd00 38.3%,#ff8500 43.9%,#ff5300 52.2%,#ff2600 65.1%,#ff0100 86.9%,#ff0000 100%)"></i><i style="top:25px;height:1px;background:linear-gradient(90deg,#00ff26 0%,#01ff1a 17.1%,#6bff12 25.3%,#dfff09 32.4%,#fffd07 34.2%,#ffbc00 38.3%,#ff8400 43.9%,#ff5200 52.2%,#ff2600 65.1%,#ff0100 86.9%,#ff0000 100%)"></i><i style="top:26px;height:1px;background:linear-gradient(90deg,#00ff27 0%,#01ff1c 17.1%,#6bff14 25.3%,#dfff0c 32.4%,#fffd09 34.2%,#ffbc02 38.3%,#ff8400 43.9%,#ff5200 52.2%,#ff2600 65.1%,#ff0100 86.9%,#ff0000 100%)"></i><i style="top:27px;height:1px;background:linear-gradient(90deg,#00ff29 0%,#01ff1e 17.1%,#6bff16 25.3%,#daff0e 32.1%,#fffc0c 34.2%,#ffbc04 38.3%,#ff8400 43.9%,#ff5200 52.2%,#ff2600 65.1%,#ff0100 86.9%,#ff0000 100%)"></i><i style="top:28px;height:1px;background:linear-gradient(90deg,#00ff2a 0%,#00ff20 17.1%,#6bff18 25.3%,#daff11 32.1%,#fffc0e 34.2%,#ffbb06 38.3%,#ff8300 43.9%,#ff5100 52.2%,#ff2500 65.1%,#ff0000 86.9%,#ff0000 100%)"></i><i style="top:29px;height:1px;background:linear-gradient(90deg,#00ff2c 0%,#03ff21 17.4%,#6fff1a 25.6%,#e0ff13 32.4%,#fffc10 34.2%,#ffbb08 38.3%,#ff8300 43.9%,#ff5100 52.2%,#ff2500 65.1%,#ff0000 86.9%,#ff0000 100%)"></i><i style="top:30px;height:1px;background:linear-gradient(90deg,#00ff2d 0%,#03ff23 17.4%,#6fff1c 25.6%,#e0ff15 32.4%,#fffc13 34.2%,#ffbe0a 38%,#ff8502 43.6%,#ff5200 51.9%,#ff2600 64.5%,#ff0100 86%,#ff0000 100%)"></i><i style="top:31px;height:1px;background:linear-gradient(90deg,#00ff2f 0%,#02ff25 17.4%,#6fff1e 25.6%,#e0ff17 32.4%,#fffb15 34.2%,#ffbe0c 38%,#ff8504 43.6%,#ff5200 51.9%,#ff2600 64.5%,#ff0100 86%,#ff0000 100%)"></i><i style="top:32px;height:1px;background:linear-gradient(90deg,#00ff30 0%,#02ff27 17.4%,#6fff21 25.6%,#e1ff1a 32.4%,#fffb17 34.2%,#ffbe0e 38%,#ff8405 43.6%,#ff5100 51.9%,#ff2600 64.5%,#ff0100 86%,#ff0000 100%)"></i><i style="top:33px;height:1px;background:linear-gradient(90deg,#00ff32 0%,#02ff29 17.4%,#6eff23 25.6%,#e1ff1c 32.4%,#fdff1b 33.9%,#ffba0f 38.3%,#ff8206 43.9%,#ff5000 52.2%,#ff2400 65.1%,#ff0000 86.6%,#ff0000 100%)"></i><i style="top:34px;height:1px;background:linear-gradient(90deg,#00ff34 0%,#01ff2b 17.4%,#6eff25 25.6%,#e1ff1f 32.4%,#feff1d 33.9%,#ffb911 38.3%,#ff8108 43.9%,#ff5000 52.2%,#ff2400 65.1%,#ff0000 86.3%,#ff0000 100%)"></i><i style="top:35px;height:1px;background:linear-gradient(90deg,#00ff35 0%,#01ff2d 17.4%,#6eff27 25.6%,#e1ff21 32.4%,#feff20 33.9%,#ffbd14 38%,#ff830a 43.6%,#ff5101 51.9%,#ff2500 64.5%,#ff0000 86%,#ff0000 100%)"></i><i style="top:36px;height:1px;background:linear-gradient(90deg,#00ff37 0%,#00ff2f 17.4%,#6aff29 25.3%,#dcff24 32.1%,#feff22 33.9%,#ffbc16 38%,#ff830b 43.6%,#ff5002 51.9%,#ff2500 64.5%,#ff0000 85.8%,#ff0000 100%)"></i><i style="top:37px;height:1px;background:linear-gradient(90deg,#00ff38 0%,#04ff30 17.7%,#6eff2b 25.6%,#e1ff26 32.4%,#ffff25 33.9%,#ffbc18 38%,#ff830d 43.6%,#ff5003 51.9%,#ff2500 64.5%,#ff0000 85.8%,#ff0000 100%)"></i><i style="top:38px;height:1px;background:linear-gradient(90deg,#00ff3a 0%,#03ff32 17.7%,#6eff2e 25.6%,#e2ff29 32.4%,#ffff27 33.9%,#ffc01b 37.7%,#ff870f 43%,#ff5405 51%,#ff2700 63.4%,#ff0200 84%,#ff0000 100%)"></i><i style="top:39px;height:1px;background:linear-gradient(90deg,#00ff3b 0%,#03ff34 17.7%,#6dff30 25.6%,#e2ff2b 32.4%,#ffff2a 33.9%,#ffbf1d 37.7%,#ff8711 43%,#ff5406 51%,#ff2700 63.4%,#ff0200 84%,#ff0000 100%)"></i><i style="top:40px;height:1px;background:linear-gradient(90deg,#00ff3d 0%,#02ff36 17.7%,#6dff32 25.6%,#dcff2e 32.1%,#ffff2c 33.9%,#ffbf1f 37.7%,#ff8613 43%,#ff5308 51%,#ff2700 63.4%,#ff0200 84%,#ff0000 100%)"></i><i style="top:41px;height:1px;background:linear-gradient(90deg,#00ff3f 0%,#02ff38 17.7%,#6dff34 25.6%,#dcff30 32.1%,#fffe2f 33.9%,#ffbf21 37.7%,#ff8614 43%,#ff5309 51%,#ff2700 63.4%,#ff0100 84%,#ff0000 100%)"></i><i style="top:42px;height:1px;background:linear-gradient(90deg,#00ff40 0%,#01ff3a 17.7%,#6dff37 25.6%,#ddff33 32.1%,#fffe31 33.9%,#ffbe23 37.7%,#ff8616 43%,#ff530a 51%,#ff2600 63.4%,#ff0100 84%,#ff0000 100%)"></i><i style="top:43px;height:1px;background:linear-gradient(90deg,#00ff42 0%,#01ff3c 17.7%,#6dff39 25.6%,#ddff35 32.1%,#fffe34 33.9%,#ffbe25 37.7%,#ff8517 43%,#ff520b 51%,#ff2601 63.4%,#ff0100 84%,#ff0000 100%)"></i><i style="top:44px;height:1px;background:linear-gradient(90deg,#00ff43 0%,#01ff3e 17.7%,#6dff3b 25.6%,#ddff38 32.1%,#fffe37 33.9%,#ffbe27 37.7%,#ff8519 43%,#ff520d 51%,#ff2602 63.4%,#ff0100 84%,#ff0000 100%)"></i><i style="top:45px;height:1px;background:linear-gradient(90deg,#00ff45 0%,#00ff41 17.7%,#6dff3e 25.6%,#ddff3b 32.1%,#fffd39 33.9%,#ffbd29 37.7%,#ff851b 43%,#ff520e 51%,#ff2603 63.4%,#ff0100 84%,#ff0000 100%)"></i><i style="top:46px;height:1px;background:linear-gradient(90deg,#00ff47 0%,#03ff43 18%,#6cff40 25.6%,#ddff3d 32.1%,#fffd3c 33.9%,#ffbd2b 37.7%,#ff841c 43%,#ff510f 51%,#ff2503 63.4%,#ff0000 84%,#ff0000 100%)"></i><i style="top:47px;height:1px;background:linear-gradient(90deg,#00ff48 0%,#03ff45 18%,#6cff42 25.6%,#ddff40 32.1%,#fffd3e 33.9%,#ffbd2d 37.7%,#ff841e 43%,#ff5110 51%,#ff2504 63.4%,#ff0000 84%,#ff0000 100%)"></i><i style="top:48px;height:1px;background:linear-gradient(90deg,#00ff4a 0%,#03ff47 18%,#6cff45 25.6%,#deff42 32.1%,#fffc41 33.9%,#ffbc2f 37.7%,#ff8420 43%,#ff5111 51%,#ff2505 63.4%,#ff0000 84%,#ff0000 100%)"></i><i style="top:49px;height:1px;background:linear-gradient(90deg,#00ff4c 0%,#02ff49 18%,#6cff47 25.6%,#deff45 32.1%,#fffc44 33.9%,#ffbc31 37.7%,#ff8321 43%,#ff5013 51%,#ff2406 63.4%,#ff0000 83.7%,#ff0000 100%)"></i><i style="top:50px;height:1px;background:linear-gradient(90deg,#00ff4d 0%,#02ff4b 18%,#6cff49 25.6%,#deff48 32.1%,#fffc46 33.9%,#ffbc33 37.7%,#ff8323 43%,#ff5014 51%,#ff2407 63.4%,#ff0000 83.7%,#ff0000 100%)"></i><i style="top:51px;height:1px;background:linear-gradient(90deg,#00ff4f 0%,#01ff4d 18%,#6bff4c 25.6%,#deff4a 32.1%,#fffb49 33.9%,#ffbb36 37.7%,#ff8324 43%,#ff5015 51%,#ff2408 63.4%,#ff0000 83.7%,#ff0000 100%)"></i><i style="top:52px;height:1px;background:linear-gradient(90deg,#00ff51 0%,#01ff4f 18%,#6bff4e 25.6%,#deff4d 32.1%,#fffb4c 33.9%,#ffbb38 37.7%,#ff8226 43%,#ff4f16 51%,#ff2409 63.4%,#ff0000 83.4%,#ff0000 100%)"></i><i style="top:53px;height:1px;background:linear-gradient(90deg,#00ff52 0%,#00ff51 18%,#6bff51 25.6%,#deff50 32.1%,#fffb4e 33.9%,#ffbb3a 37.7%,#ff8228 43%,#ff4f18 51%,#ff230a 63.4%,#ff0000 83.4%,#ff0000 100%)"></i><i style="top:54px;height:1px;background:linear-gradient(90deg,#00ff54 0%,#00ff53 18%,#6bff53 25.6%,#dfff53 32.1%,#fdff52 33.6%,#ffba3c 37.7%,#ff8229 43%,#ff4f19 51%,#ff230b 63.4%,#ff0000 83.1%,#ff0000 100%)"></i><i style="top:55px;height:1px;background:linear-gradient(90deg,#00ff56 0%,#03ff56 18.3%,#6fff55 25.9%,#dfff55 32.1%,#fdff55 33.6%,#ffba3e 37.7%,#ff812b 43%,#ff4e1a 51%,#ff230b 63.4%,#ff0000 83.1%,#ff0000 100%)"></i><i style="top:56px;height:1px;background:linear-gradient(90deg,#00ff57 0%,#03ff58 18.3%,#6fff58 25.9%,#dfff58 32.1%,#feff58 33.6%,#ffbd42 37.4%,#ff862f 42.4%,#ff541d 49.8%,#ff280e 61.3%,#ff0201 80.7%,#ff0000 100%)"></i><i style="top:57px;height:1px;background:linear-gradient(90deg,#00ff59 0%,#02ff5a 18.3%,#6fff5a 25.9%,#dfff5b 32.1%,#feff5b 33.6%,#ffbd44 37.4%,#ff8630 42.4%,#ff541f 49.8%,#ff280f 61.3%,#ff0202 80.7%,#ff0000 100%)"></i><i style="top:58px;height:1px;background:linear-gradient(90deg,#00ff5b 0%,#02ff5c 18.3%,#6fff5d 25.9%,#dfff5e 32.1%,#feff5e 33.6%,#ffbd46 37.4%,#ff8532 42.4%,#ff5320 49.8%,#ff2710 61.3%,#ff0203 80.7%,#ff0000 100%)"></i><i style="top:59px;height:1px;background:linear-gradient(90deg,#00ff5d 0%,#01ff5e 18.3%,#6fff5f 25.9%,#e0ff61 32.1%,#ffff61 33.6%,#ffc14a 37.1%,#ff8735 42.1%,#ff5422 49.5%,#ff2811 61%,#ff0304 80.2%,#ff0000 100%)"></i><i style="top:60px;height:1px;background:linear-gradient(90deg,#00ff5e 0%,#01ff61 18.3%,#6aff62 25.6%,#daff63 31.8%,#ffff64 33.6%,#ffc04c 37.1%,#ff8736 42.1%,#ff5423 49.5%,#ff2812 61%,#ff0204 80.2%,#ff0000 100%)"></i><i style="top:61px;height:1px;background:linear-gradient(90deg,#00ff60 0%,#01ff63 18.3%,#6aff64 25.6%,#daff66 31.8%,#ffff67 33.6%,#ffc04e 37.1%,#ff8738 42.1%,#ff5424 49.5%,#ff2713 61%,#ff0205 80.2%,#ff0000 100%)"></i><i style="top:62px;height:1px;background:linear-gradient(90deg,#00ff62 0%,#00ff65 18.3%,#69ff67 25.6%,#daff69 31.8%,#fffe6a 33.6%,#ffc051 37.1%,#ff863a 42.1%,#ff5326 49.5%,#ff2714 61%,#ff0205 80.2%,#ff0000 100%)"></i><i style="top:63px;height:1px;background:linear-gradient(90deg,#00ff63 0%,#03ff67 18.6%,#6eff6a 25.9%,#e0ff6c 32.1%,#fffe6c 33.6%,#ffbf53 37.1%,#ff863c 42.1%,#ff5327 49.5%,#ff2715 61%,#ff0206 80.2%,#ff0000 100%)"></i><i style="top:64px;height:1px;background:linear-gradient(90deg,#00ff65 0%,#03ff6a 18.6%,#6eff6c 25.9%,#e1ff6f 32.1%,#fffe6f 33.6%,#ffbf55 37.1%,#ff863d 42.1%,#ff5328 49.5%,#ff2716 61%,#ff0107 80.2%,#ff0000 100%)"></i><i style="top:65px;height:1px;background:linear-gradient(90deg,#00ff67 0%,#03ff6c 18.6%,#6eff6f 25.9%,#e1ff72 32.1%,#fffe72 33.6%,#ffbe57 37.1%,#ff853f 42.1%,#ff522a 49.5%,#ff2617 61%,#ff0107 80.2%,#ff0000 100%)"></i><i style="top:66px;height:1px;background:linear-gradient(90deg,#00ff69 0%,#02ff6e 18.6%,#6eff71 25.9%,#e1ff75 32.1%,#fffd75 33.6%,#ffbe5a 37.1%,#ff8541 42.1%,#ff522b 49.5%,#ff2618 61%,#ff0108 80.2%,#ff0000 100%)"></i><i style="top:67px;height:1px;background:linear-gradient(90deg,#00ff6b 0%,#02ff71 18.6%,#6dff74 25.9%,#e1ff78 32.1%,#fffd78 33.6%,#ffbe5c 37.1%,#ff8443 42.1%,#ff522c 49.5%,#ff2619 61%,#ff0109 80.2%,#ff0000 100%)"></i><i style="top:68px;height:1px;background:linear-gradient(90deg,#00ff6c 0%,#01ff73 18.6%,#6dff77 25.9%,#e1ff7b 32.1%,#fffd7b 33.6%,#ffbd5e 37.1%,#ff8445 42.1%,#ff512e 49.5%,#ff251a 61%,#ff0009 80.4%,#ff0000 100%)"></i><i style="top:69px;height:1px;background:linear-gradient(90deg,#00ff6e 0%,#01ff75 18.6%,#6dff79 25.9%,#dbff7e 31.8%,#fffc7e 33.6%,#ffbd61 37.1%,#ff8446 42.1%,#ff512f 49.5%,#ff251b 61%,#ff000a 80.4%,#ff0001 100%)"></i><i style="top:70px;height:1px;background:linear-gradient(90deg,#00ff70 0%,#00ff78 18.6%,#6dff7c 25.9%,#dbff81 31.8%,#fffc81 33.6%,#ffbd63 37.1%,#ff8348 42.1%,#ff5131 49.5%,#ff251c 61%,#ff000b 80.2%,#ff0001 100%)"></i><i style="top:71px;height:1px;background:linear-gradient(90deg,#00ff72 0%,#00ff7a 18.6%,#68ff7f 25.6%,#dcff84 31.8%,#fffc84 33.6%,#ffbc65 37.1%,#ff834a 42.1%,#ff5032 49.5%,#ff251d 61%,#ff000b 80.2%,#ff0002 100%)"></i><i style="top:72px;height:1px;background:linear-gradient(90deg,#00ff74 0%,#03ff7d 18.9%,#6dff82 25.9%,#dcff87 31.8%,#fffb87 33.6%,#ffbc68 37.1%,#ff834c 42.1%,#ff5033 49.5%,#ff241e 61%,#ff000c 79.9%,#ff0002 100%)"></i><i style="top:73px;height:1px;background:linear-gradient(90deg,#00ff75 0%,#03ff7f 18.9%,#6cff84 25.9%,#dcff8a 31.8%,#fffb8a 33.6%,#ffbb6a 37.1%,#ff824e 42.1%,#ff5035 49.5%,#ff241f 61%,#ff000d 79.9%,#ff0003 100%)"></i><i style="top:74px;height:1px;background:linear-gradient(90deg,#00ff77 0%,#02ff81 18.9%,#6cff87 25.9%,#dcff8d 31.8%,#fdff8f 33.3%,#ffb76a 37.4%,#ff7f4e 42.4%,#ff4e35 49.8%,#ff221f 61.6%,#ff000d 80.2%,#ff0003 100%)"></i><i style="top:75px;height:1px;background:linear-gradient(90deg,#00ff79 0%,#02ff84 18.9%,#6cff8a 25.9%,#dcff90 31.8%,#fdff92 33.3%,#ffbb6f 37.1%,#ff8151 42.1%,#ff4f37 49.5%,#ff2321 61%,#ff000e 79.6%,#ff0004 100%)"></i><i style="top:76px;height:1px;background:linear-gradient(90deg,#00ff7b 0%,#01ff86 18.9%,#6cff8d 25.9%,#ddff93 31.8%,#fdff95 33.3%,#ffba71 37.1%,#ff8153 42.1%,#ff4f39 49.5%,#ff2322 61%,#ff000f 79.6%,#ff0004 100%)"></i><i style="top:77px;height:1px;background:linear-gradient(90deg,#00ff7d 0%,#01ff89 18.9%,#6cff8f 25.9%,#ddff97 31.8%,#feff99 33.3%,#ffba74 37.1%,#ff8155 42.1%,#ff4e3a 49.5%,#ff2323 61%,#ff0010 79.3%,#ff0005 100%)"></i><i style="top:78px;height:1px;background:linear-gradient(90deg,#00ff7f 0%,#01ff8b 18.9%,#6bff92 25.9%,#ddff9a 31.8%,#feff9c 33.3%,#ffbe79 36.8%,#ff865a 41.6%,#ff533e 48.6%,#ff2726 59.5%,#ff0212 77.8%,#ff0005 100%)"></i><i style="top:79px;height:1px;background:linear-gradient(90deg,#00ff80 0%,#00ff8e 18.9%,#6bff95 25.9%,#ddff9d 31.8%,#feff9f 33.3%,#ffbd7b 36.8%,#ff855c 41.6%,#ff523f 48.6%,#ff2627 59.5%,#ff0112 77.8%,#ff0006 100%)"></i><i style="top:80px;height:1px;background:linear-gradient(90deg,#00ff82 0%,#00ff90 18.9%,#66ff98 25.6%,#d7ffa0 31.5%,#ffffa3 33.3%,#ffbd7d 36.8%,#ff855e 41.6%,#ff5241 48.6%,#ff2628 59.5%,#ff0113 77.8%,#ff0006 100%)"></i><i style="top:81px;height:1px;background:linear-gradient(90deg,#00ff84 0%,#03ff93 19.2%,#70ff9b 26.2%,#e4ffa4 32.1%,#ffffa6 33.3%,#ffc183 36.5%,#ff8761 41.3%,#ff5544 48%,#ff282b 58.6%,#ff0315 76.3%,#ff0007 100%)"></i><i style="top:82px;height:1px;background:linear-gradient(90deg,#00ff86 0%,#03ff96 19.2%,#70ff9e 26.2%,#e4ffa7 32.1%,#ffffa9 33.3%,#ffc185 36.5%,#ff8763 41.3%,#ff5446 48%,#ff282c 58.6%,#ff0316 76.3%,#ff0007 100%)"></i><i style="top:83px;height:1px;background:linear-gradient(90deg,#00ff88 0%,#02ff98 19.2%,#70ffa1 26.2%,#deffaa 31.8%,#fffead 33.3%,#ffc088 36.5%,#ff8665 41.3%,#ff5447 48%,#ff282d 58.6%,#ff0316 76.3%,#ff0008 100%)"></i><i style="top:84px;height:1px;background:linear-gradient(90deg,#00ff8a 0%,#02ff9b 19.2%,#6affa4 25.9%,#deffae 31.8%,#fffeb0 33.3%,#ffc08a 36.5%,#ff8667 41.3%,#ff5449 48%,#ff282e 58.6%,#ff0217 76.3%,#ff0008 100%)"></i><i style="top:85px;height:1px;background:linear-gradient(90deg,#00ff8c 0%,#01ff9d 19.2%,#6affa7 25.9%,#d8ffb0 31.5%,#fffeb3 33.3%,#ffc08d 36.5%,#ff8669 41.3%,#ff534a 48%,#ff272f 58.6%,#ff0218 76.3%,#ff0009 100%)"></i><i style="top:86px;height:1px;background:linear-gradient(90deg,#00ff8e 0%,#01ffa0 19.2%,#6affaa 25.9%,#d8ffb4 31.5%,#fffeb6 33.3%,#ffbf8f 36.5%,#ff856b 41.3%,#ff534c 48%,#ff2730 58.6%,#ff0219 76.3%,#ff0009 100%)"></i><i style="top:87px;height:1px;background:linear-gradient(90deg,#00ff90 0%,#00ffa3 19.2%,#6affad 25.9%,#d8ffb7 31.5%,#fffdba 33.3%,#ffbf92 36.5%,#ff856d 41.3%,#ff534d 48%,#ff2731 58.6%,#ff0219 76.3%,#ff000a 100%)"></i><i style="top:88px;height:1px;background:linear-gradient(90deg,#00ff92 0%,#00ffa5 19.2%,#69ffb0 25.9%,#d8ffbb 31.5%,#fffdbd 33.3%,#ffbe95 36.5%,#ff846f 41.3%,#ff524e 48%,#ff2632 58.6%,#ff011a 76.3%,#ff000a 100%)"></i><i style="top:89px;height:1px;background:linear-gradient(90deg,#00ff94 0%,#03ffa8 19.4%,#6effb3 26.2%,#dfffbf 31.8%,#fffdc0 33.3%,#ffbe97 36.5%,#ff8471 41.3%,#ff5250 48%,#ff2633 58.6%,#ff011a 76.6%,#ff000b 100%)"></i><i style="top:90px;height:1px;background:linear-gradient(90deg,#00ff96 0%,#03ffab 19.4%,#6effb6 26.2%,#dfffc2 31.8%,#fffcc4 33.3%,#ffbe9a 36.5%,#ff8473 41.3%,#ff5251 48%,#ff2634 58.6%,#ff001b 76.6%,#ff000b 100%)"></i><i style="top:91px;height:1px;background:linear-gradient(90deg,#00ff97 0%,#02ffae 19.4%,#6effb9 26.2%,#e0ffc6 31.8%,#fffcc7 33.3%,#ffbd9c 36.5%,#ff8375 41.3%,#ff5153 48%,#ff2535 58.6%,#ff001c 76.6%,#ff000c 100%)"></i><i style="top:92px;height:1px;background:linear-gradient(90deg,#00ff99 0%,#02ffb0 19.4%,#6effbc 26.2%,#e0ffc9 31.8%,#fffbca 33.3%,#ffbd9f 36.5%,#ff8377 41.3%,#ff5154 48%,#ff2536 58.6%,#ff001d 76.6%,#ff000c 100%)"></i><i style="top:93px;height:1px;background:linear-gradient(90deg,#00ff9b 0%,#01ffb3 19.4%,#6effc0 26.2%,#e0ffcd 31.8%,#fffbce 33.3%,#ffbca2 36.5%,#ff8279 41.3%,#ff5056 48%,#ff2537 58.6%,#ff001e 76.3%,#ff000d 100%)"></i><i style="top:94px;height:1px;background:linear-gradient(90deg,#00ff9d 0%,#01ffb6 19.4%,#6effc3 26.2%,#e0ffd0 31.8%,#fffbd1 33.3%,#ffbca4 36.5%,#ff857d 41%,#ff5259 47.7%,#ff263a 58.1%,#ff011f 75.4%,#ff000d 100%)"></i><i style="top:95px;height:1px;background:linear-gradient(90deg,#00ff9f 0%,#00ffb9 19.4%,#6dffc6 26.2%,#e0ffd4 31.8%,#fcffd8 33%,#ffb7a4 36.8%,#ff7f7b 41.6%,#ff4c57 48.6%,#ff2238 59.5%,#ff001f 76.6%,#ff000e 100%)"></i><i style="top:96px;height:1px;background:linear-gradient(90deg,#00ffa1 0%,#00ffbb 19.4%,#6dffc9 26.2%,#e1ffd8 31.8%,#fdffdb 33%,#ffb7a6 36.8%,#ff7e7d 41.6%,#ff4c58 48.6%,#ff2139 59.5%,#ff0020 76.3%,#ff000e 100%)"></i><i style="top:97px;height:1px;background:linear-gradient(90deg,#00ffa3 0%,#00ffbe 19.4%,#68ffcc 25.9%,#daffdb 31.5%,#fdffdf 33%,#ffbbad 36.5%,#ff8483 41%,#ff515d 47.7%,#ff253d 58.1%,#ff0021 75.4%,#ff000f 100%)"></i><i style="top:98px;height:1px;background:linear-gradient(90deg,#00ffa5 0%,#03ffc2 19.7%,#6dffd0 26.2%,#e1ffdf 31.8%,#fdffe3 33%,#ffbaaf 36.5%,#ff8385 41%,#ff505f 47.7%,#ff253e 58.1%,#ff0022 75.4%,#ff000f 100%)"></i><i style="top:99px;height:1px;background:linear-gradient(90deg,#00ffa8 0%,#03ffc4 19.7%,#6dffd3 26.2%,#daffe2 31.5%,#feffe7 33%,#ffbab2 36.5%,#ff8388 41%,#ff5060 47.7%,#ff253f 58.1%,#ff0023 75.4%,#ff0010 100%)"></i><i style="top:100px;height:1px;background:linear-gradient(90deg,#00ffaa 0%,#02ffc7 19.7%,#6cffd6 26.2%,#dbffe6 31.5%,#feffeb 33%,#ffbeb8 36.2%,#ff858c 40.7%,#ff5365 47.1%,#ff2742 57.2%,#ff0225 74%,#ff0010 100%)"></i><i style="top:101px;height:1px;background:linear-gradient(90deg,#00ffac 0%,#02ffca 19.7%,#6cffd9 26.2%,#dbffe9 31.5%,#feffef 33%,#ffbebb 36.2%,#ff858e 40.7%,#ff5266 47.1%,#ff2744 57.2%,#ff0226 74%,#ff0011 100%)"></i><i style="top:102px;height:1px;background:linear-gradient(90deg,#00ffae 0%,#01ffcd 19.7%,#6cffdd 26.2%,#dbffed 31.5%,#fffff3 33%,#ffbdbe 36.2%,#ff8590 40.7%,#ff5268 47.1%,#ff2645 57.2%,#ff0127 74%,#ff0011 100%)"></i><i style="top:103px;height:1px;background:linear-gradient(90deg,#00ffb0 0%,#01ffd0 19.7%,#6cffe0 26.2%,#dbfff1 31.5%,#fffff6 33%,#ffc2c5 36%,#ff8a97 40.1%,#ff576e 46.3%,#ff2b4a 55.7%,#ff052b 71.6%,#ff001f 82.5%,#ff0012 100%)"></i><i style="top:104px;height:1px;background:linear-gradient(90deg,#00ffb2 0%,#00ffd3 19.7%,#6bffe4 26.2%,#dbfff5 31.5%,#fffffa 33%,#ffc2c8 36%,#ff8a9a 40.1%,#ff576f 46.3%,#ff2b4b 55.7%,#ff052c 71.6%,#ff001e 83.7%,#ff0012 100%)"></i><i style="top:105px;height:1px;background:linear-gradient(90deg,#00ffb4 0%,#00ffd6 19.7%,#66ffe6 25.9%,#d5fff8 31.2%,#fffefe 33%,#ffc1cb 36%,#ff899c 40.1%,#ff5671 46.3%,#ff2a4c 55.7%,#ff042c 71.6%,#ff001d 85.8%,#ff0013 100%)"></i><i style="top:106px;height:1px;background:linear-gradient(90deg,#00ffb6 0%,#04ffd9 20%,#71ffeb 26.5%,#e3fffe 31.8%,#fff7fb 33.3%,#ffb7c5 36.5%,#ff8096 41%,#ff4f6d 47.4%,#ff2348 57.8%,#ff0029 74.6%,#ff0013 100%)"></i><i style="top:107px;height:1px;background:linear-gradient(90deg,#00ffb8 0%,#03ffdc 20%,#70ffef 26.5%,#e7fbff 32.1%,#fff6ff 33.3%,#ffb7c8 36.5%,#ff7f99 41%,#ff4e6e 47.4%,#ff2349 57.8%,#ff002a 74.3%,#ff0014 100%)"></i><i style="top:108px;height:1px;background:linear-gradient(90deg,#00ffba 0%,#02ffdf 20%,#6bfff1 26.2%,#d1fbff 31.2%,#ffeffc 33.6%,#ffb2c7 36.8%,#ff7996 41.6%,#ff496c 48.3%,#ff1e46 59.2%,#ff002a 74.8%,#ff0014 100%)"></i><i style="top:109px;height:1px;background:linear-gradient(90deg,#00ffbc 0%,#02ffe3 20%,#6afff5 26.2%,#bdfaff 30.4%,#feedff 33.6%,#ffadc6 37.1%,#ff7695 41.8%,#ff466a 48.9%,#ff1c45 60.1%,#ff002b 75.1%,#ff0015 100%)"></i><i style="top:110px;height:1px;background:linear-gradient(90deg,#00ffbf 0%,#01ffe6 20%,#6afff8 26.2%,#b5f8ff 30.1%,#ffe7fe 33.9%,#ffacc9 37.1%,#ff7697 41.8%,#ff456c 48.9%,#ff1b46 60.1%,#ff002c 74.8%,#ff0015 100%)"></i><i style="top:111px;height:1px;background:linear-gradient(90deg,#00ffc1 0%,#01ffe9 20%,#6afffc 26.2%,#fde5ff 33.9%,#ffa3c4 37.7%,#ff6e93 42.7%,#ff3e67 50.4%,#ff1542 62.5%,#ff002c 75.4%,#ff0016 100%)"></i><i style="top:112px;height:1px;background:linear-gradient(90deg,#00ffc3 0%,#00ffec 20%,#74fcff 26.8%,#ffe0ff 34.2%,#ffa3c6 37.7%,#ff6d95 42.7%,#ff3d68 50.4%,#ff1543 62.5%,#ff002d 75.1%,#ff0017 100%)"></i><i style="top:113px;height:1px;background:linear-gradient(90deg,#00ffc5 0%,#00ffef 20%,#68fbff 26.2%,#ffd9fc 34.5%,#ff9fc5 38%,#ff6a94 43%,#ff3b68 50.7%,#ff1342 63.1%,#ff002e 75.1%,#ff0017 100%)"></i><i style="top:114px;height:1px;background:linear-gradient(90deg,#00ffc7 0%,#00fff2 20%,#57fbff 25.3%,#fed8ff 34.5%,#ff9ac4 38.3%,#ff6592 43.6%,#ff3766 51.6%,#ff0f40 64.5%,#ff002f 75.1%,#ff0018 100%)"></i><i style="top:115px;height:1px;background:linear-gradient(90deg,#00ffc9 0%,#00fff4 19.7%,#0cfff8 20.9%,#51f8ff 25%,#ffd3fd 34.8%,#ff9ac7 38.3%,#ff6594 43.6%,#ff3767 51.6%,#ff0f41 64.5%,#ff002f 75.1%,#ff0018 100%)"></i><i style="top:116px;height:1px;background:linear-gradient(90deg,#00ffcc 0%,#00fff7 19.7%,#0cfffb 20.9%,#8ce8ff 28.6%,#fdd1ff 34.8%,#ff92c2 38.9%,#ff5e8f 44.5%,#ff3063 53%,#ff093d 67.2%,#ff002f 75.7%,#ff0019 100%)"></i><i style="top:117px;height:1px;background:linear-gradient(90deg,#00ffce 0%,#00fffa 19.4%,#07fffd 20.6%,#bedaff 31.5%,#ffccfe 35.1%,#ff92c5 38.9%,#ff5d91 44.5%,#ff3064 53%,#ff093e 67.2%,#ff0030 75.7%,#ff0019 100%)"></i><i style="top:118px;height:1px;background:linear-gradient(90deg,#00ffd0 0%,#00fffc 19.2%,#02feff 20.3%,#b6d8ff 31.2%,#ffc6fc 35.4%,#ff8ec4 39.2%,#ff5b91 44.8%,#ff2d63 53.6%,#ff073d 68.1%,#ff0030 76.3%,#ff001a 100%)"></i><i style="top:119px;height:1px;background:linear-gradient(90deg,#00ffd2 0%,#00fcff 20%,#6de4ff 27.1%,#ffc5ff 35.4%,#ff8ac3 39.5%,#ff568f 45.4%,#ff2b62 54.2%,#ff053c 69%,#ff002e 78.7%,#ff001a 100%)"></i><i style="top:120px;height:1px;background:linear-gradient(90deg,#00ffd4 0%,#00fcff 19.2%,#05f7ff 20.6%,#bcd0ff 31.8%,#ffc0fd 35.7%,#ff89c5 39.5%,#ff5892 45.1%,#ff2b65 53.9%,#ff063e 68.4%,#ff0031 76.9%,#ff001b 100%)"></i><i style="top:121px;height:1px;background:linear-gradient(90deg,#00ffd7 0%,#00fbff 18.3%,#00f5ff 20.3%,#b9cdff 31.8%,#febeff 35.7%,#ff82c1 40.1%,#ff528e 46%,#ff2762 55.1%,#ff023b 70.4%,#ff001c 98.7%,#ff001b 100%)"></i><i style="top:122px;height:1px;background:linear-gradient(90deg,#00ffd9 0%,#00fcff 17.1%,#00f2ff 20.3%,#b2cbff 31.5%,#ffbafe 36%,#ff82c3 40.1%,#ff5190 46%,#ff2763 55.1%,#ff023d 70.1%,#ff001d 97.8%,#ff001c 100%)"></i><i style="top:123px;height:1px;background:linear-gradient(90deg,#00ffdb 0%,#00fcff 16.2%,#03eeff 20.6%,#bac6ff 32.1%,#ffb4fc 36.2%,#ff7ec2 40.4%,#ff4f90 46.3%,#ff2563 55.4%,#ff013d 70.7%,#ff001d 98.7%,#ff001c 100%)"></i><i style="top:124px;height:1px;background:linear-gradient(90deg,#00ffde 0%,#00fbff 15.3%,#03ebff 20.6%,#bcc2ff 32.4%,#ffb4ff 36.2%,#ff7ec5 40.4%,#ff4f91 46.3%,#ff2564 55.4%,#ff013e 70.4%,#ff001e 98.1%,#ff001d 100%)"></i><i style="top:125px;height:1px;background:linear-gradient(90deg,#00ffe0 0%,#00fbff 14.4%,#02e8ff 20.6%,#bac0ff 32.4%,#ffaffd 36.5%,#ff7ac4 40.7%,#ff4b8f 46.9%,#ff2262 56.3%,#ff003d 71.6%,#ff001d 100%)"></i><i style="top:126px;height:1px;background:linear-gradient(90deg,#00ffe2 0%,#00fcff 13.3%,#02e5ff 20.6%,#b8bdff 32.4%,#feadff 36.5%,#ff77c3 41%,#ff488f 47.1%,#ff2063 56.6%,#ff003d 71.6%,#ff001e 100%)"></i><i style="top:127px;height:1px;background:linear-gradient(90deg,#00ffe4 0%,#00fbff 12.4%,#01e3ff 20.6%,#bab9ff 32.7%,#ffa9fe 36.8%,#ff76c5 41%,#ff4891 47.1%,#ff2064 56.6%,#ff003f 71.3%,#ff001f 99%,#ff001e 100%)"></i><i style="top:128px;height:1px;background:linear-gradient(90deg,#00ffe7 0%,#00fbff 11.5%,#01e0ff 20.6%,#b8b7ff 32.7%,#ffa4fc 37.1%,#ff70c1 41.6%,#ff438d 48%,#ff1b60 58.1%,#ff003f 71.9%,#ff001f 100%)"></i><i style="top:129px;height:1px;background:linear-gradient(90deg,#00ffe9 0%,#00fcff 10.3%,#00ddff 20.6%,#b6b4ff 32.7%,#ffa4ff 37.1%,#ff73c6 41.3%,#ff4692 47.4%,#ff1e65 56.9%,#ff0041 71.3%,#ff0020 98.7%,#ff001f 100%)"></i><i style="top:130px;height:1px;background:linear-gradient(90deg,#00ffeb 0%,#00fbff 9.4%,#00dbff 20.6%,#b3b2ff 32.7%,#ff9ffd 37.4%,#ff6dc2 41.8%,#ff408e 48.3%,#ff1a61 58.3%,#ff0041 71.6%,#ff0021 99%,#ff0020 100%)"></i><i style="top:131px;height:1px;background:linear-gradient(90deg,#00ffee 0%,#00fbff 8.5%,#03d7ff 20.9%,#bbadff 33.3%,#fe9eff 37.4%,#ff6ac1 42.1%,#ff3e8e 48.6%,#ff1861 58.6%,#ff0042 71.6%,#ff0021 99%,#ff0020 100%)"></i><i style="top:132px;height:1px;background:linear-gradient(90deg,#00fff0 0%,#00fbff 7.7%,#03d5ff 20.9%,#b9abff 33.3%,#ff9afe 37.7%,#ff69c4 42.1%,#ff3e90 48.6%,#ff1863 58.6%,#ff0042 71.6%,#ff0022 98.7%,#ff0021 100%)"></i><i style="top:133px;height:1px;background:linear-gradient(90deg,#00fff3 0%,#00fbff 6.8%,#02d2ff 20.9%,#bba8ff 33.6%,#ff95fc 38%,#ff66c3 42.4%,#ff3c90 48.9%,#ff1763 58.9%,#ff0044 71.3%,#ff0023 97.8%,#ff0021 100%)"></i><i style="top:134px;height:1px;background:linear-gradient(90deg,#00fff5 0%,#00faff 5.9%,#02d0ff 20.9%,#b9a5ff 33.6%,#ff95ff 38%,#ff66c5 42.4%,#ff3c91 48.9%,#ff1764 58.9%,#ff0045 71.3%,#ff0024 97.8%,#ff0022 100%)"></i><i style="top:135px;height:1px;background:linear-gradient(90deg,#00fff7 0%,#00f9ff 5.6%,#01cdff 20.9%,#b7a3ff 33.6%,#ff90fd 38.3%,#ff63c4 42.7%,#ff3a91 49.2%,#ff1664 59.2%,#ff0046 71.3%,#ff0024 97.5%,#ff0022 100%)"></i><i style="top:136px;height:1px;background:linear-gradient(90deg,#00fffa 0%,#00f5ff 6.2%,#01cbff 20.9%,#b9a0ff 33.9%,#ff90ff 38.3%,#ff60c3 43%,#ff378f 49.8%,#ff1362 60.1%,#ff0046 71.3%,#ff0025 97.5%,#ff0023 100%)"></i><i style="top:137px;height:1px;background:linear-gradient(90deg,#00fffc 0%,#00c8ff 20.9%,#b79eff 33.9%,#ff8cfd 38.6%,#ff5dc2 43.3%,#ff358f 50.1%,#ff1262 60.4%,#ff0048 71%,#ff0026 96.7%,#ff0023 100%)"></i><i style="top:138px;height:1px;background:linear-gradient(90deg,#00ffff 0%,#00c6ff 20.9%,#b99bff 34.2%,#ff88fc 38.9%,#ff5bc2 43.6%,#ff338f 50.4%,#ff1062 61%,#ff0049 71%,#ff0027 96.7%,#ff0024 100%)"></i><i style="top:139px;height:1px;background:linear-gradient(90deg,#00fdff 0%,#03c3ff 21.2%,#bc98ff 34.5%,#ff87fe 38.9%,#ff5ac4 43.6%,#ff3390 50.4%,#ff1063 61%,#ff004a 70.7%,#ff0028 95.8%,#ff0024 100%)"></i><i style="top:140px;height:1px;background:linear-gradient(90deg,#00fbff 0%,#03c1ff 21.2%,#ba96ff 34.5%,#ff83fc 39.2%,#ff57c3 43.9%,#ff3190 50.7%,#ff0f63 61.3%,#ff004b 70.7%,#ff0029 95.8%,#ff0025 100%)"></i><i style="top:141px;height:1px;background:linear-gradient(90deg,#00f8ff 0%,#02bfff 21.2%,#bc93ff 34.8%,#ff83ff 39.2%,#ff57c5 43.9%,#ff3192 50.7%,#ff0e64 61.3%,#ff004c 70.4%,#ff002a 94.9%,#ff0026 100%)"></i><i style="top:142px;height:1px;background:linear-gradient(90deg,#00f6ff 0%,#02bcff 21.2%,#ba91ff 34.8%,#ff7ffd 39.5%,#ff54c4 44.2%,#ff2e90 51.3%,#ff0c62 62.2%,#ff004d 70.7%,#ff002a 95.5%,#ff0026 100%)"></i><i style="top:143px;height:1px;background:linear-gradient(90deg,#00f4ff 0%,#01baff 21.2%,#b88fff 34.8%,#ff7bfc 39.8%,#ff50c1 44.8%,#ff2b8e 51.9%,#ff0a61 63.1%,#ff004e 70.7%,#ff002b 95.2%,#ff0027 100%)"></i><i style="top:144px;height:1px;background:linear-gradient(90deg,#00f1ff 0%,#01b8ff 21.2%,#ba8cff 35.1%,#ff7bfe 39.8%,#ff51c5 44.5%,#ff2c91 51.6%,#ff0b64 62.5%,#ff004f 70.4%,#ff002c 94.6%,#ff0027 100%)"></i><i style="top:145px;height:1px;background:linear-gradient(90deg,#00efff 0%,#01b6ff 21.2%,#b88aff 35.1%,#ff77fc 40.1%,#ff4dc2 45.1%,#ff288e 52.5%,#ff0861 63.7%,#ff004f 71%,#ff002c 95.5%,#ff0028 100%)"></i><i style="top:146px;height:1px;background:linear-gradient(90deg,#00edff 0%,#00b4ff 21.2%,#b688ff 35.1%,#ff76ff 40.1%,#ff4cc4 45.1%,#ff2891 52.2%,#ff0964 63.1%,#ff0051 70.4%,#ff002d 94.3%,#ff0028 100%)"></i><i style="top:147px;height:1px;background:linear-gradient(90deg,#00ebff 0%,#03b1ff 21.5%,#bd84ff 35.7%,#ff73fd 40.4%,#ff4ac3 45.4%,#ff268f 52.7%,#ff0762 63.9%,#ff0050 71.3%,#ff002d 95.8%,#ff0029 100%)"></i><i style="top:148px;height:1px;background:linear-gradient(90deg,#00e8ff 0%,#03afff 21.5%,#bb83ff 35.7%,#ff6ffb 40.7%,#ff48c2 45.7%,#ff248f 53%,#ff0562 64.5%,#ff004c 73.4%,#ff002a 99.3%,#ff0029 100%)"></i><i style="top:149px;height:1px;background:linear-gradient(90deg,#00e6ff 0%,#02adff 21.5%,#b981ff 35.7%,#ff6ffe 40.7%,#ff47c4 45.7%,#ff2490 53%,#ff0563 64.2%,#ff004f 72.5%,#ff002c 97.5%,#ff002a 100%)"></i><i style="top:150px;height:1px;background:linear-gradient(90deg,#00e4ff 0%,#02acff 21.5%,#bb7eff 36%,#ff6bfc 41%,#ff45c3 46%,#ff2290 53.3%,#ff0463 64.8%,#ff003d 83.7%,#ff002a 100%)"></i><i style="top:151px;height:1px;background:linear-gradient(90deg,#00e2ff 0%,#02aaff 21.5%,#b97cff 36%,#ff6bff 41%,#ff45c5 46%,#ff2291 53.3%,#ff0465 64.5%,#ff0043 79.6%,#ff002b 100%)"></i><i style="top:152px;height:1px;background:linear-gradient(90deg,#00e0ff 0%,#01a8ff 21.5%,#b77bff 36%,#ff68fd 41.3%,#ff41c2 46.6%,#ff1f8e 54.2%,#ff0161 66%,#ff003b 85.8%,#ff002b 100%)"></i><i style="top:153px;height:1px;background:linear-gradient(90deg,#00deff 0%,#01a6ff 21.5%,#b978ff 36.2%,#ff64fb 41.6%,#ff3fc1 46.9%,#ff1d8e 54.5%,#ff0061 66.3%,#ff003b 86%,#ff002c 100%)"></i><i style="top:154px;height:1px;background:linear-gradient(90deg,#00dcff 0%,#00a4ff 21.5%,#b777ff 36.2%,#ff64fe 41.6%,#ff3ec3 46.9%,#ff1d8f 54.5%,#ff0062 66.3%,#ff003c 85.8%,#ff002c 100%)"></i><i style="top:155px;height:1px;background:linear-gradient(90deg,#00daff 0%,#03a2ff 21.8%,#b974ff 36.5%,#ff61fc 41.8%,#ff3cc2 47.1%,#ff1b8f 54.8%,#ff0063 66.6%,#ff003c 86.3%,#ff002d 100%)"></i><i style="top:156px;height:1px;background:linear-gradient(90deg,#00d8ff 0%,#03a0ff 21.8%,#bb72ff 36.8%,#ff60ff 41.8%,#ff3cc4 47.1%,#ff1b91 54.8%,#ff0064 66.6%,#ff003d 86%,#ff002d 100%)"></i><i style="top:157px;height:1px;background:linear-gradient(90deg,#00d6ff 0%,#029eff 21.8%,#ba70ff 36.8%,#ff5dfd 42.1%,#ff39c3 47.4%,#ff1a90 55.1%,#ff0064 66.9%,#ff003d 86.6%,#ff002e 100%)"></i><i style="top:158px;height:1px;background:linear-gradient(90deg,#00d4ff 0%,#029cff 21.8%,#bc6eff 37.1%,#ff5dff 42.1%,#ff39c5 47.4%,#ff1992 55.1%,#ff0065 66.9%,#ff003e 86.3%,#ff002f 100%)"></i><i style="top:159px;height:1px;background:linear-gradient(90deg,#00d3ff 0%,#029bff 21.8%,#ba6cff 37.1%,#ff5afe 42.4%,#ff37c4 47.7%,#ff1790 55.7%,#ff0066 66.9%,#ff003f 86.3%,#ff002f 100%)"></i><i style="top:160px;height:1px;background:linear-gradient(90deg,#00d1ff 0%,#0199ff 21.8%,#b86bff 37.1%,#ff57fc 42.7%,#ff34c1 48.3%,#ff158e 56.3%,#ff0067 66.9%,#ff003f 86.3%,#ff0030 100%)"></i><i style="top:161px;height:1px;background:linear-gradient(90deg,#00cfff 0%,#0198ff 21.8%,#ba68ff 37.4%,#ff56fe 42.7%,#ff35c5 48%,#ff1691 56%,#ff0068 66.6%,#ff0041 85.8%,#ff0030 100%)"></i><i style="top:162px;height:1px;background:linear-gradient(90deg,#00cdff 0%,#0096ff 21.8%,#b867ff 37.4%,#ff54fd 43%,#ff31c2 48.6%,#ff138e 56.9%,#ff0069 66.6%,#ff0042 85.5%,#ff0031 100%)"></i><i style="top:163px;height:1px;background:linear-gradient(90deg,#00cbff 0%,#0394ff 22.1%,#ba65ff 37.7%,#ff53ff 43%,#ff31c4 48.6%,#ff1391 56.6%,#ff006b 66.3%,#ff0044 84.9%,#ff0031 100%)"></i><i style="top:164px;height:1px;background:linear-gradient(90deg,#00caff 0%,#0392ff 22.1%,#bc62ff 38%,#ff50fd 43.3%,#ff2fc3 48.9%,#ff118f 57.2%,#ff006c 66.3%,#ff0044 84.9%,#ff0032 100%)"></i><i style="top:165px;height:1px;background:linear-gradient(90deg,#00c8ff 0%,#0290ff 22.1%,#ba61ff 38%,#ff4efc 43.6%,#ff2dc3 49.2%,#ff108f 57.5%,#ff006d 66.3%,#ff0045 84.6%,#ff0032 100%)"></i><i style="top:166px;height:1px;background:linear-gradient(90deg,#00c6ff 0%,#028fff 22.1%,#b960ff 38%,#ff4dfe 43.6%,#ff2dc4 49.2%,#ff0f90 57.5%,#ff006f 66%,#ff0047 84%,#ff0033 100%)"></i><i style="top:167px;height:1px;background:linear-gradient(90deg,#00c4ff 0%,#028dff 22.1%,#bb5eff 38.3%,#ff4bfd 43.9%,#ff2bc4 49.5%,#ff0e90 57.8%,#ff0070 66%,#ff0048 84%,#ff0033 100%)"></i><i style="top:168px;height:1px;background:linear-gradient(90deg,#00c3ff 0%,#018cff 22.1%,#b95cff 38.3%,#ff4aff 43.9%,#ff2ac5 49.5%,#ff0e92 57.8%,#ff0072 65.7%,#ff0049 83.4%,#ff0034 100%)"></i><i style="top:169px;height:1px;background:linear-gradient(90deg,#00c1ff 0%,#018aff 22.1%,#b75bff 38.3%,#ff47fd 44.2%,#ff27c2 50.1%,#ff0b8f 58.6%,#ff0072 66%,#ff004a 83.7%,#ff0034 100%)"></i><i style="top:170px;height:1px;background:linear-gradient(90deg,#00c0ff 0%,#0189ff 22.1%,#b959ff 38.6%,#ff45fc 44.5%,#ff26c2 50.4%,#ff0a8e 58.9%,#ff0073 66%,#ff004a 83.7%,#ff0035 100%)"></i><i style="top:171px;height:1px;background:linear-gradient(90deg,#00beff 0%,#0387ff 22.4%,#bb57ff 38.9%,#ff44fe 44.5%,#ff25c3 50.4%,#ff0a90 58.9%,#ff0075 65.7%,#ff004c 83.1%,#ff0036 100%)"></i><i style="top:172px;height:1px;background:linear-gradient(90deg,#00bcff 0%,#0385ff 22.4%,#b956ff 38.9%,#ff42fc 44.8%,#ff24c3 50.7%,#ff0990 59.2%,#ff0075 66%,#ff004c 83.4%,#ff0036 100%)"></i><i style="top:173px;height:1px;background:linear-gradient(90deg,#00bbff 0%,#0384ff 22.4%,#bb54ff 39.2%,#ff42ff 44.8%,#ff23c4 50.7%,#ff0891 59.2%,#ff0077 65.7%,#ff004e 82.8%,#ff0037 100%)"></i><i style="top:174px;height:1px;background:linear-gradient(90deg,#00b9ff 0%,#0283ff 22.4%,#ba52ff 39.2%,#ff3ffd 45.1%,#ff22c4 51%,#ff0791 59.5%,#ff0077 66%,#ff004e 83.4%,#ff0037 100%)"></i><i style="top:175px;height:1px;background:linear-gradient(90deg,#00b8ff 0%,#0281ff 22.4%,#bb50ff 39.5%,#ff3dfc 45.4%,#ff1fc1 51.6%,#ff058e 60.4%,#ff0071 68.4%,#ff0048 87.2%,#ff0038 100%)"></i><i style="top:176px;height:1px;background:linear-gradient(90deg,#00b6ff 0%,#0180ff 22.4%,#ba4fff 39.5%,#ff3cfe 45.4%,#ff20c5 51.3%,#ff0590 60.1%,#ff0073 67.8%,#ff004b 86%,#ff0038 100%)"></i><i style="top:177px;height:1px;background:linear-gradient(90deg,#00b5ff 0%,#017fff 22.4%,#b84eff 39.5%,#ff3afc 45.7%,#ff1dc2 51.9%,#ff048f 60.7%,#ff0062 74.6%,#ff003b 97.5%,#ff0039 100%)"></i><i style="top:178px;height:1px;background:linear-gradient(90deg,#00b3ff 0%,#017dff 22.4%,#ba4cff 39.8%,#ff3afe 45.7%,#ff1cc3 51.9%,#ff0390 60.7%,#ff0063 74.6%,#ff003c 97.2%,#ff0039 100%)"></i><i style="top:179px;height:1px;background:linear-gradient(90deg,#00b2ff 0%,#037bff 22.7%,#bc4aff 40.1%,#ff37fd 46%,#ff1bc3 52.2%,#ff028f 61.3%,#ff0062 75.1%,#ff003c 98.4%,#ff003a 100%)"></i><i style="top:180px;height:1px;background:linear-gradient(90deg,#00b0ff 0%,#037aff 22.7%,#ba49ff 40.1%,#ff35fc 46.3%,#ff1ac2 52.5%,#ff018f 61.6%,#ff0061 75.7%,#ff003b 99.3%,#ff003a 100%)"></i><i style="top:181px;height:1px;background:linear-gradient(90deg,#00afff 0%,#0379ff 22.7%,#bc47ff 40.4%,#ff35fe 46.3%,#ff19c4 52.5%,#ff0090 61.6%,#ff0062 75.7%,#ff003c 99%,#ff003b 100%)"></i><i style="top:182px;height:1px;background:linear-gradient(90deg,#00adff 0%,#0278ff 22.7%,#ba46ff 40.4%,#ff33fc 46.6%,#ff18c3 52.7%,#ff0090 61.9%,#ff0062 76%,#ff003c 99.6%,#ff003b 100%)"></i><i style="top:183px;height:1px;background:linear-gradient(90deg,#00acff 0%,#0276ff 22.7%,#b945ff 40.4%,#ff32fe 46.6%,#ff17c5 52.7%,#ff0091 61.9%,#ff0063 76%,#ff003d 99.3%,#ff003c 100%)"></i><i style="top:184px;height:1px;background:linear-gradient(90deg,#00abff 0%,#0175ff 22.7%,#bb43ff 40.7%,#ff30fd 46.9%,#ff15c2 53.3%,#ff008e 62.8%,#ff0061 77.2%,#ff003d 100%)"></i><i style="top:185px;height:1px;background:linear-gradient(90deg,#00a9ff 0%,#0174ff 22.7%,#b942ff 40.7%,#ff2efc 47.1%,#ff13c1 53.6%,#ff0090 62.5%,#ff0063 76.6%,#ff003d 100%)"></i><i style="top:186px;height:1px;background:linear-gradient(90deg,#00a8ff 0%,#0173ff 22.7%,#b741ff 40.7%,#ff2dfe 47.1%,#ff13c3 53.6%,#ff0092 62.5%,#ff0064 76.6%,#ff003e 100%)"></i><i style="top:187px;height:1px;background:linear-gradient(90deg,#00a6ff 0%,#0371ff 23%,#bc3fff 41.3%,#ff2bfc 47.4%,#ff12c2 53.9%,#ff0094 62.2%,#ff0066 76%,#ff003f 99%,#ff003e 100%)"></i><i style="top:188px;height:1px;background:linear-gradient(90deg,#00a5ff 0%,#0370ff 23%,#bb3eff 41.3%,#ff2bfe 47.4%,#ff11c4 53.9%,#ff0095 62.2%,#ff0067 76%,#ff0040 98.7%,#ff003f 100%)"></i><i style="top:189px;height:1px;background:linear-gradient(90deg,#00a4ff 0%,#036fff 23%,#b93dff 41.3%,#ff29fd 47.7%,#ff10c3 54.2%,#ff0098 61.9%,#ff006a 75.4%,#ff0042 97.5%,#ff003f 100%)"></i><i style="top:190px;height:1px;background:linear-gradient(90deg,#00a2ff 0%,#026dff 23%,#bb3bff 41.6%,#ff27fb 48%,#ff0ec1 54.8%,#ff0099 61.9%,#ff006a 75.4%,#ff0043 97.5%,#ff0040 100%)"></i><i style="top:191px;height:1px;background:linear-gradient(90deg,#00a1ff 0%,#026cff 23%,#ba3aff 41.6%,#ff27fd 48%,#ff0ec4 54.5%,#ff009a 61.9%,#ff006b 75.4%,#ff0043 97.5%,#ff0040 100%)"></i><i style="top:192px;height:1px;background:linear-gradient(90deg,#00a0ff 0%,#026bff 23%,#b839ff 41.6%,#ff25fc 48.3%,#ff0cc1 55.1%,#ff009c 61.6%,#ff006e 74.8%,#ff0046 96.4%,#ff0041 100%)"></i><i style="top:193px;height:1px;background:linear-gradient(90deg,#009fff 0%,#016aff 23%,#ba38ff 41.8%,#ff24fe 48.3%,#ff0cc3 55.1%,#ff009e 61.6%,#ff006e 74.8%,#ff0046 96.4%,#ff0041 100%)"></i><i style="top:194px;height:1px;background:linear-gradient(90deg,#009dff 0%,#0468ff 23.3%,#bb36ff 42.1%,#ff22fd 48.6%,#ff0ac2 55.4%,#ff009f 61.6%,#ff006f 74.8%,#ff0047 96.1%,#ff0042 100%)"></i><i style="top:195px;height:1px;background:linear-gradient(90deg,#009cff 0%,#0367ff 23.3%,#ba35ff 42.1%,#ff21fb 48.9%,#ff09c2 55.7%,#ff00a0 61.6%,#ff0071 74.6%,#ff0048 95.5%,#ff0043 100%)"></i><i style="top:196px;height:1px;background:linear-gradient(90deg,#009bff 0%,#0366ff 23.3%,#bc33ff 42.4%,#ff20fd 48.9%,#ff09c3 55.7%,#ff00a1 61.6%,#ff0072 74.6%,#ff0049 95.5%,#ff0043 100%)"></i><i style="top:197px;height:1px;background:linear-gradient(90deg,#009aff 0%,#0365ff 23.3%,#ba33ff 42.4%,#ff1efc 49.2%,#ff08c3 56%,#ff00a2 61.6%,#ff0073 74.6%,#ff004a 95.5%,#ff0044 100%)"></i><i style="top:198px;height:1px;background:linear-gradient(90deg,#0099ff 0%,#0264ff 23.3%,#bc31ff 42.7%,#ff1efe 49.2%,#ff07c4 56%,#ff00a4 61.6%,#ff0073 74.6%,#ff004b 95.2%,#ff0044 100%)"></i><i style="top:199px;height:1px;background:linear-gradient(90deg,#0097ff 0%,#0263ff 23.3%,#ba30ff 42.7%,#ff1cfd 49.5%,#ff05c1 56.6%,#ff009c 63.4%,#ff006d 77.2%,#ff0045 99.6%,#ff0045 100%)"></i><i style="top:200px;height:1px;background:linear-gradient(90deg,#0096ff 0%,#0262ff 23.3%,#b92fff 42.7%,#ff1bfb 49.8%,#ff04c1 56.9%,#ff008d 67.2%,#ff0061 83.1%,#ff0045 100%)"></i><i style="top:201px;height:1px;background:linear-gradient(90deg,#0095ff 0%,#0161ff 23.3%,#ba2eff 43%,#ff1afd 49.8%,#ff04c2 56.9%,#ff008e 67.2%,#ff0061 83.1%,#ff0046 100%)"></i><i style="top:202px;height:1px;background:linear-gradient(90deg,#0094ff 0%,#0460ff 23.6%,#bc2cff 43.3%,#ff18fc 50.1%,#ff02c2 57.2%,#ff008e 67.5%,#ff0061 83.4%,#ff0046 100%)"></i><i style="top:203px;height:1px;background:linear-gradient(90deg,#0093ff 0%,#035fff 23.6%,#bb2cff 43.3%,#ff18fe 50.1%,#ff02c3 57.2%,#ff008f 67.5%,#ff0062 83.4%,#ff0047 100%)"></i><i style="top:204px;height:1px;background:linear-gradient(90deg,#0092ff 0%,#035eff 23.6%,#bc2aff 43.6%,#ff16fc 50.4%,#ff01c3 57.5%,#ff008f 67.8%,#ff0062 83.7%,#ff0048 100%)"></i><i style="top:205px;height:1px;background:linear-gradient(90deg,#0090ff 0%,#035dff 23.6%,#bb29ff 43.6%,#ff15fb 50.7%,#ff00c2 57.8%,#ff008e 68.4%,#ff0061 84.6%,#ff0048 100%)"></i><i style="top:206px;height:1px;background:linear-gradient(90deg,#008fff 0%,#025cff 23.6%,#b929ff 43.6%,#ff14fd 50.7%,#ff00c3 57.8%,#ff0090 68.1%,#ff0063 84%,#ff0049 100%)"></i><i style="top:207px;height:1px;background:linear-gradient(90deg,#008eff 0%,#025bff 23.6%,#bb27ff 43.9%,#ff13fc 51%,#ff00c1 58.3%,#ff008e 69%,#ff0061 85.5%,#ff0049 100%)"></i><i style="top:208px;height:1px;background:linear-gradient(90deg,#008dff 0%,#025aff 23.6%,#ba26ff 43.9%,#ff12fe 51%,#ff00c2 58.3%,#ff008f 69%,#ff0062 85.5%,#ff004a 100%)"></i><i style="top:209px;height:1px;background:linear-gradient(90deg,#008cff 0%,#0159ff 23.6%,#b826ff 43.9%,#ff11fc 51.3%,#ff00c4 58.3%,#ff0090 69%,#ff0063 85.2%,#ff004a 100%)"></i><i style="top:210px;height:1px;background:linear-gradient(90deg,#008bff 0%,#0457ff 23.9%,#bd23ff 44.5%,#ff0ffb 51.6%,#ff00c5 58.3%,#ff0091 69%,#ff0064 85.2%,#ff004b 100%)"></i><i style="top:211px;height:1px;background:linear-gradient(90deg,#008aff 0%,#0357ff 23.9%,#bb23ff 44.5%,#ff0ffd 51.6%,#ff00c8 58.1%,#ff0094 68.4%,#ff0066 84.3%,#ff004b 100%)"></i><i style="top:212px;height:1px;background:linear-gradient(90deg,#0089ff 0%,#0356ff 23.9%,#ba22ff 44.5%,#ff0dfc 51.9%,#ff00ca 58.1%,#ff0095 68.4%,#ff0067 84%,#ff004c 100%)"></i><i style="top:213px;height:1px;background:linear-gradient(90deg,#0088ff 0%,#0355ff 23.9%,#bb21ff 44.8%,#ff0dfd 51.9%,#ff00cb 58.1%,#ff0096 68.4%,#ff0068 84%,#ff004d 100%)"></i><i style="top:214px;height:1px;background:linear-gradient(90deg,#0087ff 0%,#0254ff 23.9%,#ba20ff 44.8%,#ff0cfc 52.2%,#ff00cc 58.1%,#ff0097 68.4%,#ff0069 84%,#ff004d 100%)"></i><i style="top:215px;height:1px;background:linear-gradient(90deg,#0086ff 0%,#0253ff 23.9%,#bc1eff 45.1%,#ff0bfe 52.2%,#ff00d0 57.8%,#ff009a 67.8%,#ff006c 83.1%,#ff004e 100%)"></i><i style="top:216px;height:1px;background:linear-gradient(90deg,#0085ff 0%,#0252ff 23.9%,#ba1eff 45.1%,#ff0afd 52.5%,#ff00d1 57.8%,#ff009b 67.8%,#ff006d 82.8%,#ff004e 100%)"></i><i style="top:217px;height:1px;background:linear-gradient(90deg,#0084ff 0%,#0151ff 23.9%,#b91dff 45.1%,#ff08fc 52.7%,#ff00d3 57.8%,#ff009d 67.8%,#ff006e 82.8%,#ff004f 100%)"></i><i style="top:218px;height:1px;background:linear-gradient(90deg,#0083ff 0%,#0450ff 24.2%,#bd1bff 45.7%,#ff08fd 52.7%,#ff00d4 57.8%,#ff009f 67.5%,#ff0070 82.2%,#ff004f 100%)"></i><i style="top:219px;height:1px;background:linear-gradient(90deg,#0082ff 0%,#034fff 24.2%,#bc1aff 45.7%,#ff06fc 53%,#ff00d3 58.1%,#ff009d 68.1%,#ff006f 83.1%,#ff0050 100%)"></i><i style="top:220px;height:1px;background:linear-gradient(90deg,#0081ff 0%,#034eff 24.2%,#bb1aff 45.7%,#ff06fe 53%,#ff00d3 58.3%,#ff009d 68.4%,#ff006e 83.7%,#ff0051 100%)"></i><i style="top:221px;height:1px;background:linear-gradient(90deg,#0080ff 0%,#034dff 24.2%,#bc19ff 46%,#ff05fd 53.3%,#ff00c8 60.1%,#ff0094 71%,#ff0066 87.8%,#ff0051 100%)"></i><i style="top:222px;height:1px;background:linear-gradient(90deg,#007fff 0%,#024dff 24.2%,#bb18ff 46%,#ff03fc 53.6%,#ff00c1 61.6%,#ff008d 73.1%,#ff0061 90.8%,#ff0052 100%)"></i><i style="top:223px;height:1px;background:linear-gradient(90deg,#007eff 0%,#024cff 24.2%,#b917ff 46%,#ff03fd 53.6%,#ff00c4 61.3%,#ff0090 72.5%,#ff0063 89.9%,#ff0052 100%)"></i><i style="top:224px;height:1px;background:linear-gradient(90deg,#007dff 0%,#024bff 24.2%,#bb16ff 46.3%,#ff02fc 53.9%,#ff00c2 61.9%,#ff008e 73.4%,#ff0061 91.4%,#ff0053 100%)"></i><i style="top:225px;height:1px;background:linear-gradient(90deg,#007cff 0%,#014aff 24.2%,#ba15ff 46.3%,#ff01fe 53.9%,#ff00c3 61.9%,#ff008f 73.4%,#ff0062 91.1%,#ff0053 100%)"></i><i style="top:226px;height:1px;background:linear-gradient(90deg,#007bff 0%,#0349ff 24.5%,#bb14ff 46.6%,#ff00fd 54.2%,#ff00c2 62.2%,#ff008f 73.7%,#ff0062 91.6%,#ff0054 100%)"></i><i style="top:227px;height:1px;background:linear-gradient(90deg,#007aff 0%,#0348ff 24.5%,#bc13ff 46.9%,#ff00fc 54.5%,#ff00c2 62.5%,#ff008e 74.3%,#ff0061 92.5%,#ff0054 100%)"></i><i style="top:228px;height:1px;background:linear-gradient(90deg,#0079ff 0%,#0347ff 24.5%,#bb12ff 46.9%,#ff00fd 54.5%,#ff00c3 62.5%,#ff008f 74.3%,#ff0062 92.2%,#ff0055 100%)"></i><i style="top:229px;height:1px;background:linear-gradient(90deg,#0078ff 0%,#0347ff 24.5%,#ba12ff 46.9%,#ff00fc 54.8%,#ff00c3 62.8%,#ff008f 74.6%,#ff0061 92.8%,#ff0056 100%)"></i><i style="top:230px;height:1px;background:linear-gradient(90deg,#0077ff 0%,#0246ff 24.5%,#bb11ff 47.1%,#ff00fe 54.8%,#ff00c4 62.8%,#ff0090 74.6%,#ff0063 92.5%,#ff0056 100%)"></i><i style="top:231px;height:1px;background:linear-gradient(90deg,#0077ff 0%,#0245ff 24.5%,#ba10ff 47.1%,#ff00fd 55.1%,#ff00c2 63.4%,#ff008d 75.4%,#ff0061 94%,#ff0057 100%)"></i><i style="top:232px;height:1px;background:linear-gradient(90deg,#0076ff 0%,#0245ff 24.5%,#bb0fff 47.4%,#fd00ff 54.8%,#ff00bf 63.9%,#ff008c 76%,#ff0060 94.9%,#ff0057 100%)"></i><i style="top:233px;height:1px;background:linear-gradient(90deg,#0075ff 0%,#0244ff 24.5%,#ba0eff 47.4%,#fc00ff 54.8%,#ff00bc 64.8%,#ff0089 77.5%,#ff005c 97.2%,#ff0058 100%)"></i><i style="top:234px;height:1px;background:linear-gradient(90deg,#0074ff 0%,#0342ff 24.8%,#bb0dff 47.7%,#f700ff 54.5%,#ff00f9 56%,#ff00c0 64.2%,#ff008c 76.6%,#ff005f 95.8%,#ff0058 100%)"></i><i style="top:235px;height:1px;background:linear-gradient(90deg,#0073ff 0%,#0342ff 24.8%,#bd0cff 48%,#f600ff 54.5%,#ff00f8 56.3%,#ff00be 64.8%,#ff008b 77.2%,#ff005f 96.4%,#ff0059 100%)"></i><i style="top:236px;height:1px;background:linear-gradient(90deg,#0072ff 0%,#0341ff 24.8%,#bc0bff 48%,#f400ff 54.5%,#ff00fa 56.3%,#ff00bf 64.8%,#ff008c 77.2%,#ff0060 96.4%,#ff005a 100%)"></i><i style="top:237px;height:1px;background:linear-gradient(90deg,#0071ff 0%,#0340ff 24.8%,#ba0bff 48%,#f300ff 54.5%,#ff00fb 56.3%,#ff00c0 64.8%,#ff008d 77.2%,#ff0060 96.4%,#ff005a 100%)"></i><i style="top:238px;height:1px;background:linear-gradient(90deg,#0071ff 0%,#0240ff 24.8%,#bc0aff 48.3%,#ef00ff 54.2%,#ff00fa 56.6%,#ff00c0 65.1%,#ff008d 77.5%,#ff0060 96.7%,#ff005b 100%)"></i><i style="top:239px;height:1px;background:linear-gradient(90deg,#0070ff 0%,#023fff 24.8%,#bb09ff 48.3%,#ed00ff 54.2%,#ff00fc 56.6%,#ff00c1 65.1%,#ff008e 77.5%,#ff0061 96.7%,#ff005b 100%)"></i><i style="top:240px;height:1px;background:linear-gradient(90deg,#006fff 0%,#023eff 24.8%,#b909ff 48.3%,#e900ff 53.9%,#ff00fb 56.9%,#ff00c1 65.4%,#ff008e 77.8%,#ff0061 97%,#ff005c 100%)"></i><i style="top:241px;height:1px;background:linear-gradient(90deg,#006eff 0%,#023eff 24.8%,#bb08ff 48.6%,#ed00ff 54.5%,#ff00fc 56.9%,#ff00c2 65.4%,#ff008e 77.8%,#ff0062 97%,#ff005c 100%)"></i><i style="top:242px;height:1px;background:linear-gradient(90deg,#006dff 0%,#033cff 25%,#bc06ff 48.9%,#ec00ff 54.5%,#ff00fb 57.2%,#ff00c1 65.7%,#ff008d 78.4%,#ff0061 97.8%,#ff005d 100%)"></i><i style="top:243px;height:1px;background:linear-gradient(90deg,#006dff 0%,#033cff 25%,#bb06ff 48.9%,#ef00ff 55.1%,#ff00fd 57.2%,#ff00c3 65.7%,#ff008f 78.1%,#ff0062 97.2%,#ff005e 100%)"></i><i style="top:244px;height:1px;background:linear-gradient(90deg,#006cff 0%,#033bff 25%,#bc05ff 49.2%,#fa00ff 56.6%,#ff00f0 58.9%,#ff00b6 68.4%,#ff0084 82.2%,#ff005e 100%)"></i><i style="top:245px;height:1px;background:linear-gradient(90deg,#006bff 0%,#033bff 25%,#bb04ff 49.2%,#ff00fd 57.5%,#ff00c3 66%,#ff008f 78.7%,#ff0062 98.1%,#ff005f 100%)"></i><i style="top:246px;height:1px;background:linear-gradient(90deg,#006aff 0%,#023aff 25%,#ba04ff 49.2%,#ff00fc 57.8%,#ff00c1 66.6%,#ff008e 79.3%,#ff0061 99%,#ff005f 100%)"></i><i style="top:247px;height:1px;background:linear-gradient(90deg,#0069ff 0%,#0239ff 25%,#bb03ff 49.5%,#ff00fb 58.1%,#ff00c1 66.9%,#ff008d 79.9%,#ff0060 99.9%,#ff0060 100%)"></i><i style="top:248px;height:1px;background:linear-gradient(90deg,#0069ff 0%,#0239ff 25%,#ba02ff 49.5%,#ff00fd 58.1%,#ff00c2 66.9%,#ff008e 79.9%,#ff0061 99.9%,#ff0061 100%)"></i><i style="top:249px;height:1px;background:linear-gradient(90deg,#0068ff 0%,#0238ff 25%,#bb01ff 49.8%,#ff00fc 58.3%,#ff00c2 67.2%,#ff008e 80.2%,#ff0061 100%)"></i><i style="top:250px;height:1px;background:linear-gradient(90deg,#0067ff 0%,#0337ff 25.3%,#bc00ff 50.1%,#ff00fd 58.3%,#ff00c3 67.2%,#ff008f 80.2%,#ff0062 100%)"></i><i style="top:251px;height:1px;background:linear-gradient(90deg,#0066ff 0%,#0336ff 25.3%,#bb00ff 50.1%,#ff00fc 58.6%,#ff00c2 67.5%,#ff008e 80.4%,#ff0062 100%)"></i><i style="top:252px;height:1px;background:linear-gradient(90deg,#0066ff 0%,#0336ff 25.3%,#ba00ff 50.1%,#ff00fb 58.9%,#ff00c2 67.8%,#ff008e 80.7%,#ff0063 100%)"></i><i style="top:253px;height:1px;background:linear-gradient(90deg,#0065ff 0%,#0335ff 25.3%,#bb00ff 50.4%,#ff00fd 58.9%,#ff00c3 67.8%,#ff008f 80.7%,#ff0063 100%)"></i><i style="top:254px;height:1px;background:linear-gradient(90deg,#0064ff 0%,#0234ff 25.3%,#ba00ff 50.4%,#ff00fc 59.2%,#ff00c1 68.4%,#ff008d 81.6%,#ff0064 100%)"></i><i style="top:255px;height:1px;background:linear-gradient(90deg,#0063ff 0%,#0234ff 25.3%,#bc00ff 50.7%,#ff00fd 59.2%,#ff00c2 68.4%,#ff008e 81.6%,#ff0065 100%)"></i><i style="top:256px;height:1px;background:linear-gradient(90deg,#0063ff 0%,#0233ff 25.3%,#bb00ff 50.7%,#ff00fc 59.5%,#ff00c2 68.7%,#ff008e 81.9%,#ff0065 100%)"></i><i style="top:257px;height:1px;background:linear-gradient(90deg,#0062ff 0%,#0233ff 25.3%,#b900ff 50.7%,#ff00fe 59.5%,#ff00c3 68.7%,#ff008f 81.9%,#ff0066 100%)"></i><i style="top:258px;height:1px;background:linear-gradient(90deg,#0061ff 0%,#0332ff 25.6%,#b600ff 50.4%,#ff00fd 59.8%,#ff00c2 69%,#ff008f 82.2%,#ff0066 100%)"></i><i style="top:259px;height:1px;background:linear-gradient(90deg,#0061ff 0%,#0331ff 25.6%,#b500ff 50.4%,#ff00fc 60.1%,#ff00c2 69.3%,#ff008e 82.8%,#ff0067 100%)"></i><i style="top:260px;height:1px;background:linear-gradient(90deg,#0060ff 0%,#0330ff 25.6%,#b200ff 50.1%,#ff00fd 60.1%,#ff00c3 69.3%,#ff008f 82.5%,#ff0067 100%)"></i><i style="top:261px;height:1px;background:linear-gradient(90deg,#005fff 0%,#0330ff 25.6%,#b100ff 50.1%,#ff00fc 60.4%,#ff00c2 69.5%,#ff008e 83.1%,#ff0068 100%)"></i><i style="top:262px;height:1px;background:linear-gradient(90deg,#005eff 0%,#022fff 25.6%,#ad00ff 49.8%,#ff00fe 60.4%,#ff00c4 69.5%,#ff008f 83.1%,#ff0069 100%)"></i><i style="top:263px;height:1px;background:linear-gradient(90deg,#005eff 0%,#022fff 25.6%,#ac00ff 49.8%,#ff00fd 60.7%,#ff00c2 70.1%,#ff008e 83.7%,#ff0069 100%)"></i><i style="top:264px;height:1px;background:linear-gradient(90deg,#005dff 0%,#022eff 25.6%,#a900ff 49.5%,#ff00fc 61%,#ff00c1 70.4%,#ff008d 84.3%,#ff006a 100%)"></i><i style="top:265px;height:1px;background:linear-gradient(90deg,#005cff 0%,#022eff 25.6%,#a800ff 49.5%,#ff00fd 61%,#ff00c2 70.4%,#ff008e 84.3%,#ff006a 100%)"></i><i style="top:266px;height:1px;background:linear-gradient(90deg,#005cff 0%,#032dff 25.9%,#a500ff 49.2%,#ff00fc 61.3%,#ff00c2 70.7%,#ff008e 84.6%,#ff006b 100%)"></i><i style="top:267px;height:1px;background:linear-gradient(90deg,#005bff 0%,#032cff 25.9%,#a400ff 49.2%,#ff00fd 61.3%,#ff00c3 70.7%,#ff008f 84.6%,#ff006c 100%)"></i><i style="top:268px;height:1px;background:linear-gradient(90deg,#005aff 0%,#032cff 25.9%,#a100ff 48.9%,#ff00fc 61.6%,#ff00c3 71%,#ff008f 84.9%,#ff006c 100%)"></i><i style="top:269px;height:1px;background:linear-gradient(90deg,#005aff 0%,#032bff 25.9%,#9e00ff 48.6%,#ff00fc 61.9%,#ff00c1 71.6%,#ff008d 85.8%,#ff006d 100%)"></i><i style="top:270px;height:1px;background:linear-gradient(90deg,#0059ff 0%,#022bff 25.9%,#9d00ff 48.6%,#ff00fd 61.9%,#ff00c3 71.3%,#ff008f 85.2%,#ff006d 100%)"></i><i style="top:271px;height:1px;background:linear-gradient(90deg,#0058ff 0%,#022aff 25.9%,#9a00ff 48.3%,#ff00fc 62.2%,#ff00c1 71.9%,#ff008e 86%,#ff006e 100%)"></i><i style="top:272px;height:1px;background:linear-gradient(90deg,#0058ff 0%,#022aff 25.9%,#9900ff 48.3%,#ff00fd 62.2%,#ff00c2 71.9%,#ff008e 86%,#ff006f 100%)"></i><i style="top:273px;height:1px;background:linear-gradient(90deg,#0057ff 0%,#0229ff 25.9%,#9600ff 48%,#ff00fc 62.5%,#ff00c2 72.2%,#ff008e 86.3%,#ff006f 100%)"></i><i style="top:274px;height:1px;background:linear-gradient(90deg,#0057ff 0%,#0328ff 26.2%,#9500ff 48%,#ff00fc 62.8%,#ff00c2 72.5%,#ff008d 86.9%,#ff0070 100%)"></i><i style="top:275px;height:1px;background:linear-gradient(90deg,#0056ff 0%,#0328ff 26.2%,#9200ff 47.7%,#ff00fd 62.8%,#ff00c3 72.5%,#ff008f 86.6%,#ff0070 100%)"></i><i style="top:276px;height:1px;background:linear-gradient(90deg,#0055ff 0%,#0327ff 26.2%,#9200ff 47.7%,#ff00fc 63.1%,#ff00c2 72.8%,#ff008e 87.2%,#ff0071 100%)"></i><i style="top:277px;height:1px;background:linear-gradient(90deg,#0055ff 0%,#0327ff 26.2%,#8f00ff 47.4%,#ff00fd 63.1%,#ff00c3 72.8%,#ff008f 87.2%,#ff0072 100%)"></i><i style="top:278px;height:1px;background:linear-gradient(90deg,#0054ff 0%,#0226ff 26.2%,#8e00ff 47.4%,#ff00fc 63.4%,#ff00c1 73.4%,#ff008e 87.8%,#ff0072 100%)"></i><i style="top:279px;height:1px;background:linear-gradient(90deg,#0054ff 0%,#0226ff 26.2%,#8b00ff 47.1%,#ff00fb 63.7%,#ff00c1 73.7%,#ff008d 88.4%,#ff0073 100%)"></i><i style="top:280px;height:1px;background:linear-gradient(90deg,#0053ff 0%,#0225ff 26.2%,#8a00ff 47.1%,#ff00fd 63.7%,#ff00c2 73.7%,#ff008f 88.1%,#ff0073 100%)"></i><i style="top:281px;height:1px;background:linear-gradient(90deg,#0052ff 0%,#0225ff 26.2%,#8700ff 46.9%,#ff00fc 63.9%,#ff00c2 74%,#ff008e 88.7%,#ff0074 100%)"></i><i style="top:282px;height:1px;background:linear-gradient(90deg,#0052ff 0%,#0324ff 26.5%,#8500ff 46.6%,#ff00fd 63.9%,#ff00c3 74%,#ff008e 88.7%,#ff0074 100%)"></i><i style="top:283px;height:1px;background:linear-gradient(90deg,#0051ff 0%,#0323ff 26.5%,#8400ff 46.6%,#ff00fc 64.2%,#ff00c2 74.3%,#ff008e 89%,#ff0075 100%)"></i><i style="top:284px;height:1px;background:linear-gradient(90deg,#0051ff 0%,#0323ff 26.5%,#8100ff 46.3%,#ff00fb 64.5%,#ff00c0 74.8%,#ff008d 89.9%,#ff0076 100%)"></i><i style="top:285px;height:1px;background:linear-gradient(90deg,#0050ff 0%,#0322ff 26.5%,#8000ff 46.3%,#ff00fd 64.5%,#ff00c3 74.6%,#ff008f 89.3%,#ff0076 100%)"></i><i style="top:286px;height:1px;background:linear-gradient(90deg,#004fff 0%,#0222ff 26.5%,#7e00ff 46%,#ff00fc 64.8%,#ff00c1 75.1%,#ff008d 90.2%,#ff0077 100%)"></i><i style="top:287px;height:1px;background:linear-gradient(90deg,#004fff 0%,#0221ff 26.5%,#7d00ff 46%,#ff00fd 64.8%,#ff00c2 75.1%,#ff008e 90.2%,#ff0077 100%)"></i><i style="top:288px;height:1px;background:linear-gradient(90deg,#004eff 0%,#0221ff 26.5%,#7a00ff 45.7%,#ff00fc 65.1%,#ff00c2 75.4%,#ff008e 90.5%,#ff0078 100%)"></i><i style="top:289px;height:1px;background:linear-gradient(90deg,#004eff 0%,#0420ff 26.8%,#7a00ff 45.7%,#ff00fd 65.1%,#ff00c3 75.4%,#ff008f 90.5%,#ff0079 100%)"></i><i style="top:290px;height:1px;background:linear-gradient(90deg,#004dff 0%,#0320ff 26.8%,#7700ff 45.4%,#ff00fd 65.4%,#ff00c2 75.7%,#ff008f 90.8%,#ff0079 100%)"></i><i style="top:291px;height:1px;background:linear-gradient(90deg,#004dff 0%,#031fff 26.8%,#7600ff 45.4%,#ff00fc 65.7%,#ff00c2 76%,#ff008e 91.4%,#ff007a 100%)"></i><i style="top:292px;height:1px;background:linear-gradient(90deg,#004cff 0%,#031fff 26.8%,#7400ff 45.1%,#ff00fd 65.7%,#ff00c3 76%,#ff008f 91.1%,#ff007a 100%)"></i><i style="top:293px;height:1px;background:linear-gradient(90deg,#004bff 0%,#031eff 26.8%,#7300ff 45.1%,#ff00fc 66%,#ff00c1 76.6%,#ff008e 91.9%,#ff007b 100%)"></i><i style="top:294px;height:1px;background:linear-gradient(90deg,#004bff 0%,#021eff 26.8%,#7100ff 44.8%,#ff00fd 66%,#ff00c3 76.3%,#ff008f 91.6%,#ff007c 100%)"></i><i style="top:295px;height:1px;background:linear-gradient(90deg,#004aff 0%,#021dff 26.8%,#7000ff 44.8%,#ff00fd 66.3%,#ff00c2 76.9%,#ff008e 92.2%,#ff007c 100%)"></i><i style="top:296px;height:1px;background:linear-gradient(90deg,#004aff 0%,#021dff 26.8%,#6e00ff 44.5%,#ff00fc 66.6%,#ff00c1 77.2%,#ff008d 92.8%,#ff007d 100%)"></i><i style="top:297px;height:1px;background:linear-gradient(90deg,#0049ff 0%,#041cff 27.1%,#6d00ff 44.5%,#ff00fd 66.6%,#ff00c2 77.2%,#ff008e 92.8%,#ff007e 100%)"></i><i style="top:298px;height:1px;background:linear-gradient(90deg,#0049ff 0%,#031cff 27.1%,#6a00ff 44.2%,#ff00fc 66.9%,#ff00c2 77.5%,#ff008e 93.1%,#ff007e 100%)"></i><i style="top:299px;height:1px;background:linear-gradient(90deg,#0048ff 0%,#031bff 27.1%,#6a00ff 44.2%,#ff00fd 66.9%,#ff00c3 77.5%,#ff008f 93.1%,#ff007f 100%)"></i><i style="top:300px;height:1px;background:linear-gradient(90deg,#0048ff 0%,#031bff 27.1%,#6700ff 43.9%,#ff00fc 67.2%,#ff00c2 77.8%,#ff008f 93.4%,#ff007f 100%)"></i><i style="top:301px;height:1px;background:linear-gradient(90deg,#0047ff 0%,#031aff 27.1%,#6700ff 43.9%,#ff00fc 67.5%,#ff00c1 78.4%,#ff008d 94.3%,#ff0080 100%)"></i><i style="top:302px;height:1px;background:linear-gradient(90deg,#0047ff 0%,#031aff 27.1%,#6400ff 43.6%,#ff00fd 67.5%,#ff00c2 78.4%,#ff008e 94.3%,#ff0081 100%)"></i><i style="top:303px;height:1px;background:linear-gradient(90deg,#0046ff 0%,#021aff 27.1%,#6200ff 43.3%,#ff00fc 67.8%,#ff00c1 78.7%,#ff008e 94.6%,#ff0081 100%)"></i><i style="top:304px;height:1px;background:linear-gradient(90deg,#0046ff 0%,#0219ff 27.1%,#6100ff 43.3%,#ff00fd 67.8%,#ff00c2 78.7%,#ff008e 94.6%,#ff0082 100%)"></i><i style="top:305px;height:1px;background:linear-gradient(90deg,#0045ff 0%,#0418ff 27.4%,#5f00ff 43%,#ff00fc 68.1%,#ff00c2 79%,#ff008e 94.9%,#ff0082 100%)"></i><i style="top:306px;height:1px;background:linear-gradient(90deg,#0045ff 0%,#0318ff 27.4%,#5f00ff 43%,#ff00fc 68.4%,#ff00c2 79.3%,#ff008e 95.2%,#ff0083 100%)"></i><i style="top:307px;height:1px;background:linear-gradient(90deg,#0044ff 0%,#0318ff 27.4%,#5c00ff 42.7%,#ff00fd 68.4%,#ff00c3 79.3%,#ff008f 95.2%,#ff0084 100%)"></i><i style="top:308px;height:1px;background:linear-gradient(90deg,#0044ff 0%,#0317ff 27.4%,#5c00ff 42.7%,#ff00fc 68.7%,#ff00c2 79.6%,#ff008e 95.8%,#ff0084 100%)"></i><i style="top:309px;height:1px;background:linear-gradient(90deg,#0043ff 0%,#0317ff 27.4%,#5900ff 42.4%,#ff00fd 68.7%,#ff00c3 79.6%,#ff008f 95.5%,#ff0085 100%)"></i><i style="top:310px;height:1px;background:linear-gradient(90deg,#0043ff 0%,#0317ff 27.4%,#5900ff 42.4%,#ff00fc 69%,#ff00c1 80.2%,#ff008e 96.4%,#ff0085 100%)"></i><i style="top:311px;height:1px;background:linear-gradient(90deg,#0042ff 0%,#0216ff 27.4%,#5700ff 42.1%,#ff00fc 69.3%,#ff00c1 80.4%,#ff008d 97%,#ff0086 100%)"></i><i style="top:312px;height:1px;background:linear-gradient(90deg,#0042ff 0%,#0216ff 27.4%,#5600ff 42.1%,#ff00fd 69.3%,#ff00c2 80.4%,#ff008e 96.7%,#ff0087 100%)"></i><i style="top:313px;height:1px;background:linear-gradient(90deg,#0041ff 0%,#0415ff 27.7%,#5400ff 41.8%,#ff00fc 69.5%,#ff00c2 80.7%,#ff008e 97.2%,#ff0087 100%)"></i><i style="top:314px;height:1px;background:linear-gradient(90deg,#0041ff 0%,#0315ff 27.7%,#5300ff 41.8%,#ff00fd 69.5%,#ff00c3 80.7%,#ff008e 97.2%,#ff0088 100%)"></i><i style="top:315px;height:1px;background:linear-gradient(90deg,#0040ff 0%,#0314ff 27.7%,#5100ff 41.6%,#ff00fc 69.8%,#ff00c2 81%,#ff008e 97.5%,#ff0089 100%)"></i><i style="top:316px;height:1px;background:linear-gradient(90deg,#0040ff 0%,#0314ff 27.7%,#5100ff 41.6%,#ff00fc 70.1%,#ff00c1 81.6%,#ff008d 98.4%,#ff0089 100%)"></i><i style="top:317px;height:1px;background:linear-gradient(90deg,#003fff 0%,#0313ff 27.7%,#4f00ff 41.3%,#ff00fd 70.1%,#ff00c3 81.3%,#ff008f 97.8%,#ff008a 100%)"></i><i style="top:318px;height:1px;background:linear-gradient(90deg,#003fff 0%,#0313ff 27.7%,#4e00ff 41.3%,#ff00fc 70.4%,#ff00c1 81.9%,#ff008d 98.7%,#ff008a 100%)"></i><i style="top:319px;height:1px;background:linear-gradient(90deg,#003eff 0%,#0213ff 27.7%,#4c00ff 41%,#ff00fd 70.4%,#ff00c2 81.9%,#ff008e 98.7%,#ff008b 100%)"></i><i style="top:320px;height:1px;background:linear-gradient(90deg,#003eff 0%,#0212ff 27.7%,#4b00ff 41%,#ff00fc 70.7%,#ff00c2 82.2%,#ff008e 99%,#ff008c 100%)"></i><i style="top:321px;height:1px;background:linear-gradient(90deg,#003dff 0%,#0412ff 28%,#4900ff 40.7%,#ff00fb 71%,#ff00c1 82.5%,#ff008e 99.3%,#ff008c 100%)"></i><i style="top:322px;height:1px;background:linear-gradient(90deg,#003dff 0%,#0311ff 28%,#4900ff 40.7%,#ff00fd 71%,#ff00c2 82.5%,#ff008e 99.3%,#ff008d 100%)"></i><i style="top:323px;height:1px;background:linear-gradient(90deg,#003cff 0%,#0311ff 28%,#4700ff 40.4%,#ff00fc 71.3%,#ff00c2 82.8%,#ff008e 99.6%,#ff008d 100%)"></i><i style="top:324px;height:1px;background:linear-gradient(90deg,#003cff 0%,#0311ff 28%,#4600ff 40.4%,#ff00fd 71.3%,#ff00c3 82.8%,#ff008f 99.6%,#ff008e 100%)"></i><i style="top:325px;height:1px;background:linear-gradient(90deg,#003cff 0%,#0310ff 28%,#4600ff 40.4%,#ff00fc 71.6%,#ff00c1 83.4%,#ff008f 100%)"></i><i style="top:326px;height:1px;background:linear-gradient(90deg,#003bff 0%,#0310ff 28%,#4400ff 40.1%,#ff00fb 71.9%,#ff00c1 83.7%,#ff008f 100%)"></i><i style="top:327px;height:1px;background:linear-gradient(90deg,#003bff 0%,#0210ff 28%,#4300ff 40.1%,#ff00fd 71.9%,#ff00c2 83.7%,#ff0090 100%)"></i><i style="top:328px;height:1px;background:linear-gradient(90deg,#003aff 0%,#020fff 28%,#4100ff 39.8%,#fd00ff 71.3%,#ff00bd 85.2%,#ff0091 100%)"></i><i style="top:329px;height:1px;background:linear-gradient(90deg,#003aff 0%,#040eff 28.3%,#4100ff 39.8%,#fb00ff 71.3%,#ff00ba 86%,#ff0091 100%)"></i><i style="top:330px;height:1px;background:linear-gradient(90deg,#0039ff 0%,#030eff 28.3%,#3f00ff 39.5%,#fa00ff 71.3%,#ff00ee 74.8%,#ff00b5 87.8%,#ff0092 100%)"></i><i style="top:331px;height:1px;background:linear-gradient(90deg,#0039ff 0%,#030eff 28.3%,#3f00ff 39.5%,#f900ff 71.3%,#ff00f6 73.7%,#ff00bc 86%,#ff0092 100%)"></i><i style="top:332px;height:1px;background:linear-gradient(90deg,#0039ff 0%,#030dff 28.3%,#3d00ff 39.2%,#f800ff 71.3%,#ff00f7 73.7%,#ff00bd 86%,#ff0093 100%)"></i><i style="top:333px;height:1px;background:linear-gradient(90deg,#0038ff 0%,#030dff 28.3%,#3c00ff 39.2%,#f700ff 71.3%,#ff00f8 73.7%,#ff00be 86%,#ff0094 100%)"></i><i style="top:334px;height:1px;background:linear-gradient(90deg,#0038ff 0%,#030dff 28.3%,#3c00ff 39.2%,#f600ff 71.3%,#ff00f9 73.7%,#ff00c0 85.8%,#ff0094 100%)"></i><i style="top:335px;height:1px;background:linear-gradient(90deg,#0037ff 0%,#020dff 28.3%,#3a00ff 38.9%,#f500ff 71.3%,#ff00fa 73.7%,#ff00c0 85.8%,#ff0095 100%)"></i><i style="top:336px;height:1px;background:linear-gradient(90deg,#0037ff 0%,#020cff 28.3%,#3a00ff 38.9%,#f400ff 71.3%,#ff00fb 73.7%,#ff00c1 85.8%,#ff0096 100%)"></i><i style="top:337px;height:1px;background:linear-gradient(90deg,#0036ff 0%,#030bff 28.6%,#3800ff 38.6%,#f300ff 71.3%,#ff00fb 74%,#ff00c0 86.3%,#ff0096 100%)"></i><i style="top:338px;height:1px;background:linear-gradient(90deg,#0036ff 0%,#030bff 28.6%,#3700ff 38.6%,#f200ff 71.3%,#ff00fc 74%,#ff00c2 86%,#ff0097 100%)"></i><i style="top:339px;height:1px;background:linear-gradient(90deg,#0036ff 0%,#030bff 28.6%,#3500ff 38.3%,#f100ff 71.3%,#ff00fb 74.3%,#ff00c0 86.6%,#ff0097 100%)"></i><i style="top:340px;height:1px;background:linear-gradient(90deg,#0035ff 0%,#030bff 28.6%,#3500ff 38.3%,#f000ff 71.3%,#ff00fa 74.6%,#ff00c0 86.9%,#ff0098 100%)"></i><i style="top:341px;height:1px;background:linear-gradient(90deg,#0035ff 0%,#030aff 28.6%,#3500ff 38.3%,#ef00ff 71.3%,#ff00fb 74.6%,#ff00c1 86.9%,#ff0099 100%)"></i><i style="top:342px;height:1px;background:linear-gradient(90deg,#0034ff 0%,#030aff 28.6%,#3300ff 38%,#ee00ff 71.3%,#ff00fb 74.8%,#ff00c0 87.2%,#ff0099 100%)"></i><i style="top:343px;height:1px;background:linear-gradient(90deg,#0034ff 0%,#020aff 28.6%,#3200ff 38%,#ed00ff 71.3%,#ff00fc 74.8%,#ff00c1 87.2%,#ff009a 100%)"></i><i style="top:344px;height:1px;background:linear-gradient(90deg,#0034ff 0%,#0209ff 28.6%,#3100ff 37.7%,#ec00ff 71.3%,#ff00fb 75.1%,#ff00c1 87.5%,#ff009b 100%)"></i><i style="top:345px;height:1px;background:linear-gradient(90deg,#0033ff 0%,#0309ff 28.9%,#3200ff 38%,#ed00ff 71.6%,#ff00fc 75.1%,#ff00c2 87.5%,#ff009b 100%)"></i><i style="top:346px;height:1px;background:linear-gradient(90deg,#0033ff 0%,#0308ff 28.9%,#3100ff 38%,#ec00ff 71.6%,#ff00fb 75.4%,#ff00c0 88.1%,#ff009c 100%)"></i><i style="top:347px;height:1px;background:linear-gradient(90deg,#0032ff 0%,#0308ff 28.9%,#3100ff 38%,#ec00ff 71.9%,#ff00fb 75.7%,#ff00c0 88.4%,#ff009d 100%)"></i><i style="top:348px;height:1px;background:linear-gradient(90deg,#0032ff 0%,#0308ff 28.9%,#3100ff 38%,#eb00ff 71.9%,#ff00fc 75.7%,#ff00c1 88.4%,#ff009d 100%)"></i><i style="top:349px;height:1px;background:linear-gradient(90deg,#0032ff 0%,#0307ff 28.9%,#2f00ff 37.7%,#e900ff 71.6%,#ff00fb 76%,#ff00c1 88.7%,#ff009e 100%)"></i><i style="top:350px;height:1px;background:linear-gradient(90deg,#0031ff 0%,#0307ff 28.9%,#3000ff 38%,#eb00ff 72.2%,#ff00fc 76%,#ff00c1 88.7%,#ff009e 100%)"></i><i style="top:351px;height:1px;background:linear-gradient(90deg,#0031ff 0%,#0207ff 28.9%,#2e00ff 37.7%,#e900ff 71.9%,#ff00fb 76.3%,#ff00c1 89%,#ff009f 100%)"></i><i style="top:352px;height:1px;background:linear-gradient(90deg,#0030ff 0%,#0207ff 28.9%,#2f00ff 38%,#e900ff 72.2%,#ff00fc 76.3%,#ff00c2 89%,#ff00a0 100%)"></i><i style="top:353px;height:1px;background:linear-gradient(90deg,#0030ff 0%,#0306ff 29.2%,#3200ff 38.6%,#ee00ff 73.1%,#ff00fc 76.6%,#ff00c1 89.3%,#ff00a0 100%)"></i><i style="top:354px;height:1px;background:linear-gradient(90deg,#0030ff 0%,#0306ff 29.2%,#3500ff 39.2%,#f000ff 73.7%,#ff00fb 76.9%,#ff00c0 89.9%,#ff00a1 100%)"></i><i style="top:355px;height:1px;background:linear-gradient(90deg,#002fff 0%,#0305ff 29.2%,#3600ff 39.5%,#f100ff 74%,#ff00fc 76.9%,#ff00c1 89.9%,#ff00a2 100%)"></i><i style="top:356px;height:1px;background:linear-gradient(90deg,#002fff 0%,#0305ff 29.2%,#3a00ff 40.4%,#f500ff 74.8%,#ff00fa 77.5%,#ff00c0 90.5%,#ff00a2 100%)"></i><i style="top:357px;height:1px;background:linear-gradient(90deg,#002fff 0%,#0305ff 29.2%,#3e00ff 41.3%,#f900ff 75.7%,#ff00f4 78.7%,#ff00ba 92.2%,#ff00a3 100%)"></i><i style="top:358px;height:1px;background:linear-gradient(90deg,#002eff 0%,#0305ff 29.2%,#4400ff 42.4%,#ff00fc 77.5%,#ff00c1 90.5%,#ff00a4 100%)"></i><i style="top:359px;height:1px;background:linear-gradient(90deg,#002eff 0%,#0204ff 29.2%,#5400ff 45.7%,#ff00fd 77.5%,#ff00c2 90.5%,#ff00a4 100%)"></i><i style="top:360px;height:1px;background:linear-gradient(90deg,#002dff 0%,#0204ff 29.2%,#6f00ff 51%,#ff00fc 77.8%,#ff00c1 90.8%,#ff00a5 100%)"></i><i style="top:361px;height:1px;background:linear-gradient(90deg,#002dff 0%,#0303ff 29.5%,#bd00ff 65.7%,#ff00fd 77.8%,#ff00c2 90.8%,#ff00a6 100%)"></i><i style="top:362px;height:1px;background:linear-gradient(90deg,#002dff 0%,#0303ff 29.5%,#bc00ff 65.7%,#ff00fc 78.1%,#ff00c2 91.1%,#ff00a6 100%)"></i><i style="top:363px;height:1px;background:linear-gradient(90deg,#002cff 0%,#0303ff 29.5%,#bb00ff 65.7%,#ff00fc 78.4%,#ff00c1 91.6%,#ff00a7 100%)"></i><i style="top:364px;height:1px;background:linear-gradient(90deg,#002cff 0%,#0302ff 29.5%,#bc00ff 66%,#ff00fc 78.4%,#ff00c2 91.4%,#ff00a7 100%)"></i><i style="top:365px;height:1px;background:linear-gradient(90deg,#002cff 0%,#0302ff 29.5%,#bb00ff 66%,#ff00fc 78.7%,#ff00c1 91.9%,#ff00a8 100%)"></i><i style="top:366px;height:1px;background:linear-gradient(90deg,#002bff 0%,#0302ff 29.5%,#bc00ff 66.3%,#ff00fd 78.7%,#ff00c2 91.9%,#ff00a9 100%)"></i><i style="top:367px;height:1px;background:linear-gradient(90deg,#002bff 0%,#0202ff 29.5%,#bb00ff 66.3%,#ff00fc 79%,#ff00c2 92.2%,#ff00a9 100%)"></i><i style="top:368px;height:1px;background:linear-gradient(90deg,#002bff 0%,#0201ff 29.5%,#bb00ff 66.3%,#ff00fb 79.3%,#ff00c1 92.5%,#ff00aa 100%)"></i><i style="top:369px;height:1px;background:linear-gradient(90deg,#002aff 0%,#0301ff 29.8%,#bd00ff 66.9%,#ff00fc 79.3%,#ff00c2 92.5%,#ff00ab 100%)"></i><i style="top:370px;height:1px;background:linear-gradient(90deg,#002aff 0%,#0301ff 29.8%,#bc00ff 66.9%,#ff00fc 79.6%,#ff00c2 92.8%,#ff00ab 100%)"></i><i style="top:371px;height:1px;background:linear-gradient(90deg,#002aff 0%,#0300ff 29.8%,#bc00ff 66.9%,#ff00fd 79.6%,#ff00c2 92.8%,#ff00ac 100%)"></i><i style="top:372px;height:1px;background:linear-gradient(90deg,#0029ff 0%,#0300ff 29.8%,#bc00ff 67.2%,#ff00fc 79.9%,#ff00c1 93.4%,#ff00ad 100%)"></i><i style="top:373px;height:1px;background:linear-gradient(90deg,#0029ff 0%,#0300ff 29.8%,#bc00ff 67.2%,#ff00fb 80.2%,#ff00c1 93.7%,#ff00ad 100%)"></i><i style="top:374px;height:1px;background:linear-gradient(90deg,#0029ff 0%,#0300ff 29.8%,#bb00ff 67.2%,#ff00fc 80.2%,#ff00c2 93.7%,#ff00ae 100%)"></i><i style="top:375px;height:1px;background:linear-gradient(90deg,#0028ff 0%,#0200ff 29.8%,#bc00ff 67.5%,#ff00fc 80.4%,#ff00c1 94%,#ff00af 100%)"></i><i style="top:376px;height:1px;background:linear-gradient(90deg,#0028ff 0%,#0200ff 29.8%,#bb00ff 67.5%,#ff00fd 80.4%,#ff00c2 94%,#ff00af 100%)"></i><i style="top:377px;height:1px;background:linear-gradient(90deg,#0028ff 0%,#0300ff 30.1%,#bc00ff 67.8%,#ff00fc 80.7%,#ff00c2 94.3%,#ff00b0 100%)"></i><i style="top:378px;height:1px;background:linear-gradient(90deg,#0027ff 0%,#0300ff 30.1%,#bd00ff 68.1%,#ff00fb 81%,#ff00c0 94.9%,#ff00b1 100%)"></i><i style="top:379px;height:1px;background:linear-gradient(90deg,#0027ff 0%,#0300ff 30.1%,#bc00ff 68.1%,#ff00fc 81%,#ff00c2 94.6%,#ff00b1 100%)"></i><i style="top:380px;height:1px;background:linear-gradient(90deg,#0027ff 0%,#0300ff 30.1%,#bb00ff 68.1%,#ff00fc 81.3%,#ff00c1 95.2%,#ff00b2 100%)"></i><i style="top:381px;height:1px;background:linear-gradient(90deg,#0026ff 0%,#0300ff 30.1%,#bc00ff 68.4%,#ff00fd 81.3%,#ff00c2 95.2%,#ff00b3 100%)"></i><i style="top:382px;height:1px;background:linear-gradient(90deg,#0026ff 0%,#0300ff 30.1%,#bb00ff 68.4%,#ff00fc 81.6%,#ff00c1 95.5%,#ff00b3 100%)"></i><i style="top:383px;height:1px;background:linear-gradient(90deg,#0026ff 0%,#0200ff 30.1%,#bc00ff 68.7%,#ff00fb 81.9%,#ff00c1 95.8%,#ff00b4 100%)"></i><i style="top:384px;height:1px;background:linear-gradient(90deg,#0025ff 0%,#0400ff 30.4%,#bd00ff 69%,#ff00fc 81.9%,#ff00c2 95.8%,#ff00b5 100%)"></i><i style="top:385px;height:1px;background:linear-gradient(90deg,#0025ff 0%,#0300ff 30.4%,#bc00ff 69%,#ff00fc 82.2%,#ff00c2 96.1%,#ff00b5 100%)"></i><i style="top:386px;height:1px;background:linear-gradient(90deg,#0025ff 0%,#0300ff 30.4%,#bd00ff 69.3%,#ff00fd 82.2%,#ff00c2 96.1%,#ff00b6 100%)"></i><i style="top:387px;height:1px;background:linear-gradient(90deg,#0024ff 0%,#0200ff 30.1%,#bb00ff 69%,#ff00fc 82.5%,#ff00c1 96.7%,#ff00b6 100%)"></i><i style="top:388px;height:1px;background:linear-gradient(90deg,#0024ff 0%,#0000ff 29.8%,#b800ff 68.7%,#ff00fb 82.8%,#ff00c1 97%,#ff00b7 100%)"></i><i style="top:389px;height:1px;background:linear-gradient(90deg,#0024ff 0%,#0000ff 29.8%,#b900ff 69%,#ff00fc 82.8%,#ff00c1 97%,#ff00b8 100%)"></i><i style="top:390px;height:1px;background:linear-gradient(90deg,#0023ff 0%,#0000ff 29.8%,#b900ff 69%,#ff00fc 83.1%,#ff00c1 97.2%,#ff00b8 100%)"></i><i style="top:391px;height:1px;background:linear-gradient(90deg,#0023ff 0%,#0000ff 29.5%,#a300ff 64.8%,#ff00fd 83.1%,#ff00c2 97.2%,#ff00b9 100%)"></i><i style="top:392px;height:1px;background:linear-gradient(90deg,#0023ff 0%,#0000ff 29.2%,#8300ff 58.3%,#ff00fc 83.4%,#ff00c2 97.5%,#ff00ba 100%)"></i><i style="top:393px;height:1px;background:linear-gradient(90deg,#0022ff 0%,#0000ff 29.2%,#7e00ff 57.5%,#ff00fd 83.4%,#ff00c2 97.5%,#ff00ba 100%)"></i><i style="top:394px;height:1px;background:linear-gradient(90deg,#0022ff 0%,#0000ff 28.9%,#1400ff 34.5%,#ce00ff 73.7%,#ff00fc 83.7%,#ff00c2 97.8%,#ff00bb 100%)"></i><i style="top:395px;height:1px;background:linear-gradient(90deg,#0022ff 0%,#0000ff 28.9%,#1100ff 33.9%,#cb00ff 73.4%,#ff00fc 84%,#ff00c1 98.4%,#ff00bc 100%)"></i><i style="top:396px;height:1px;background:linear-gradient(90deg,#0022ff 0%,#0000ff 28.6%,#0900ff 32.1%,#c300ff 71.9%,#ff00fc 84%,#ff00c1 98.4%,#ff00bc 100%)"></i><i style="top:397px;height:1px;background:linear-gradient(90deg,#0021ff 0%,#0000ff 28.6%,#0800ff 31.8%,#c100ff 71.6%,#ff00fc 84.3%,#ff00c1 98.7%,#ff00bd 100%)"></i><i style="top:398px;height:1px;background:linear-gradient(90deg,#0021ff 0%,#0000ff 28.3%,#0600ff 31.5%,#bf00ff 71.3%,#ff00fb 84.6%,#ff00c1 99%,#ff00be 100%)"></i><i style="top:399px;height:1px;background:linear-gradient(90deg,#0021ff 0%,#0000ff 28.3%,#0600ff 31.5%,#c000ff 71.6%,#ff00fc 84.6%,#ff00c2 99%,#ff00be 100%)"></i><i style="top:400px;height:1px;background:linear-gradient(90deg,#0020ff 0%,#0000ff 28%,#0500ff 31.2%,#bd00ff 71.3%,#ff00fc 84.9%,#ff00c1 99.3%,#ff00bf 100%)"></i><i style="top:401px;height:1px;background:linear-gradient(90deg,#0020ff 0%,#0000ff 28%,#0600ff 31.5%,#c000ff 71.9%,#ff00fc 84.9%,#ff00c2 99.3%,#ff00c0 100%)"></i><i style="top:402px;height:1px;background:linear-gradient(90deg,#0020ff 0%,#0000ff 27.7%,#0500ff 31.2%,#bd00ff 71.6%,#ff00fc 85.2%,#ff00c1 99.9%,#ff00c0 100%)"></i><i style="top:403px;height:1px;background:linear-gradient(90deg,#001fff 0%,#0000ff 27.7%,#0600ff 31.5%,#be00ff 71.9%,#ff00fd 85.2%,#ff00c2 99.6%,#ff00c1 100%)"></i><i style="top:404px;height:1px;background:linear-gradient(90deg,#001fff 0%,#0000ff 27.4%,#0500ff 31.5%,#bf00ff 72.2%,#ff00fc 85.5%,#ff00c2 100%)"></i><i style="top:405px;height:1px;background:linear-gradient(90deg,#001fff 0%,#0000ff 27.4%,#0500ff 31.5%,#be00ff 72.2%,#ff00fc 85.8%,#ff00c3 100%)"></i><i style="top:406px;height:1px;background:linear-gradient(90deg,#001fff 0%,#0000ff 27.1%,#0400ff 31.2%,#bc00ff 71.9%,#ff00fc 85.8%,#ff00c3 100%)"></i><i style="top:407px;height:1px;background:linear-gradient(90deg,#001eff 0%,#0000ff 26.8%,#0400ff 31.2%,#bd00ff 72.2%,#ff00fc 86%,#ff00c4 100%)"></i><i style="top:408px;height:1px;background:linear-gradient(90deg,#001eff 0%,#0000ff 26.8%,#0400ff 31.2%,#bc00ff 72.2%,#ff00fd 86%,#ff00c5 100%)"></i><i style="top:409px;height:1px;background:linear-gradient(90deg,#001eff 0%,#0000ff 26.5%,#0300ff 31.2%,#bd00ff 72.5%,#ff00fc 86.3%,#ff00c5 100%)"></i><i style="top:410px;height:1px;background:linear-gradient(90deg,#001dff 0%,#0000ff 26.5%,#0400ff 31.5%,#be00ff 72.8%,#ff00fb 86.6%,#ff00c6 100%)"></i><i style="top:411px;height:1px;background:linear-gradient(90deg,#001dff 0%,#0000ff 26.2%,#0400ff 31.5%,#bd00ff 72.8%,#ff00fc 86.6%,#ff00c7 100%)"></i><i style="top:412px;height:1px;background:linear-gradient(90deg,#001dff 0%,#0000ff 26.2%,#0400ff 31.5%,#be00ff 73.1%,#ff00fc 86.9%,#ff00c7 100%)"></i><i style="top:413px;height:1px;background:linear-gradient(90deg,#001dff 0%,#0000ff 25.9%,#0400ff 31.5%,#bd00ff 73.1%,#ff00fd 86.9%,#ff00c8 100%)"></i><i style="top:414px;height:1px;background:linear-gradient(90deg,#001cff 0%,#0000ff 25.9%,#0400ff 31.5%,#bc00ff 73.1%,#ff00fc 87.2%,#ff00c9 100%)"></i><i style="top:415px;height:1px;background:linear-gradient(90deg,#001cff 0%,#0000ff 25.6%,#0400ff 31.5%,#bd00ff 73.4%,#ff00fb 87.5%,#ff00c9 100%)"></i><i style="top:416px;height:1px;background:linear-gradient(90deg,#001cff 0%,#0000ff 25.6%,#0400ff 31.5%,#bc00ff 73.4%,#ff00fc 87.5%,#ff00ca 100%)"></i><i style="top:417px;height:1px;background:linear-gradient(90deg,#001bff 0%,#0000ff 25.3%,#0300ff 31.5%,#bc00ff 73.4%,#ff00fc 87.8%,#ff00cb 100%)"></i><i style="top:418px;height:1px;background:linear-gradient(90deg,#001bff 0%,#0000ff 25.3%,#0300ff 31.5%,#bd00ff 73.7%,#ff00fd 87.8%,#ff00cb 100%)"></i><i style="top:419px;height:1px;background:linear-gradient(90deg,#001bff 0%,#0000ff 25%,#0300ff 31.5%,#bc00ff 73.7%,#ff00fc 88.1%,#ff00cc 100%)"></i><i style="top:420px;height:1px;background:linear-gradient(90deg,#001bff 0%,#0000ff 25%,#0400ff 31.8%,#bd00ff 74%,#ff00fb 88.4%,#ff00cd 100%)"></i><i style="top:421px;height:1px;background:linear-gradient(90deg,#001aff 0%,#0000ff 24.8%,#0400ff 31.8%,#bd00ff 74.3%,#ff00fc 88.4%,#ff00cd 100%)"></i><i style="top:422px;height:1px;background:linear-gradient(90deg,#001aff 0%,#0000ff 24.8%,#0400ff 31.8%,#bd00ff 74.3%,#ff00fc 88.7%,#ff00ce 100%)"></i><i style="top:423px;height:1px;background:linear-gradient(90deg,#001aff 0%,#0000ff 24.5%,#0400ff 31.8%,#bc00ff 74.3%,#ff00fd 88.7%,#ff00cf 100%)"></i><i style="top:424px;height:1px;background:linear-gradient(90deg,#001aff 0%,#0000ff 24.5%,#0400ff 31.8%,#bd00ff 74.6%,#ff00fc 89%,#ff00cf 100%)"></i><i style="top:425px;height:1px;background:linear-gradient(90deg,#0019ff 0%,#0000ff 24.2%,#0300ff 31.8%,#bc00ff 74.6%,#ff00fb 89.3%,#ff00d0 100%)"></i><i style="top:426px;height:1px;background:linear-gradient(90deg,#0019ff 0%,#0000ff 24.2%,#0300ff 31.8%,#bd00ff 74.8%,#ff00fc 89.3%,#ff00d1 100%)"></i><i style="top:427px;height:1px;background:linear-gradient(90deg,#0019ff 0%,#0000ff 23.9%,#0300ff 31.8%,#bc00ff 74.8%,#ff00fc 89.6%,#ff00d1 100%)"></i><i style="top:428px;height:1px;background:linear-gradient(90deg,#0019ff 0%,#0000ff 23.6%,#0300ff 31.8%,#bc00ff 74.8%,#ff00fc 89.6%,#ff00d2 100%)"></i><i style="top:429px;height:1px;background:linear-gradient(90deg,#0018ff 0%,#0000ff 23.6%,#0400ff 32.1%,#be00ff 75.4%,#ff00fc 89.9%,#ff00d3 100%)"></i><i style="top:430px;height:1px;background:linear-gradient(90deg,#0018ff 0%,#0000ff 23.3%,#0400ff 32.1%,#bd00ff 75.4%,#ff00fb 90.2%,#ff00d4 100%)"></i><i style="top:431px;height:1px;background:linear-gradient(90deg,#0018ff 0%,#0000ff 23.3%,#0400ff 32.1%,#bc00ff 75.4%,#ff00fc 90.2%,#ff00d4 100%)"></i><i style="top:432px;height:1px;background:linear-gradient(90deg,#0018ff 0%,#0000ff 23%,#0400ff 32.1%,#bd00ff 75.7%,#ff00fc 90.5%,#ff00d5 100%)"></i><i style="top:433px;height:1px;background:linear-gradient(90deg,#0017ff 0%,#0000ff 23%,#0300ff 32.1%,#bc00ff 75.7%,#ff00fc 90.5%,#ff00d6 100%)"></i><i style="top:434px;height:1px;background:linear-gradient(90deg,#0017ff 0%,#0000ff 22.7%,#0300ff 32.1%,#bc00ff 75.7%,#ff00fc 90.8%,#ff00d6 100%)"></i><i style="top:435px;height:1px;background:linear-gradient(90deg,#0017ff 0%,#0000ff 22.7%,#0300ff 32.1%,#bc00ff 76%,#ff00fb 91.1%,#ff00d7 100%)"></i><i style="top:436px;height:1px;background:linear-gradient(90deg,#0017ff 0%,#0000ff 22.4%,#0300ff 32.1%,#bc00ff 76%,#ff00fc 91.1%,#ff00d8 100%)"></i><i style="top:437px;height:1px;background:linear-gradient(90deg,#0016ff 0%,#0000ff 22.4%,#0400ff 32.4%,#bd00ff 76.3%,#ff00fc 91.4%,#ff00d8 100%)"></i><i style="top:438px;height:1px;background:linear-gradient(90deg,#0016ff 0%,#0000ff 22.1%,#0400ff 32.4%,#bd00ff 76.6%,#ff00fc 91.4%,#ff00d9 100%)"></i><i style="top:439px;height:1px;background:linear-gradient(90deg,#0016ff 0%,#0000ff 22.1%,#0400ff 32.4%,#bd00ff 76.6%,#ff00fc 91.6%,#ff00da 100%)"></i><i style="top:440px;height:1px;background:linear-gradient(90deg,#0016ff 0%,#0000ff 21.8%,#0400ff 32.4%,#bc00ff 76.6%,#ff00fb 91.9%,#ff00da 100%)"></i><i style="top:441px;height:1px;background:linear-gradient(90deg,#0015ff 0%,#0000ff 21.8%,#0300ff 32.4%,#bd00ff 76.9%,#ff00fc 91.9%,#ff00db 100%)"></i><i style="top:442px;height:1px;background:linear-gradient(90deg,#0015ff 0%,#0000ff 21.5%,#0300ff 32.4%,#bc00ff 76.9%,#ff00fc 92.2%,#ff00dc 100%)"></i><i style="top:443px;height:1px;background:linear-gradient(90deg,#0015ff 0%,#0000ff 21.5%,#0300ff 32.4%,#bd00ff 77.2%,#ff00fc 92.2%,#ff00dd 100%)"></i><i style="top:444px;height:1px;background:linear-gradient(90deg,#0015ff 0%,#0000ff 21.2%,#0300ff 32.4%,#bc00ff 77.2%,#ff00fc 92.5%,#ff00dd 100%)"></i><i style="top:445px;height:1px;background:linear-gradient(90deg,#0014ff 0%,#0000ff 21.2%,#0300ff 32.4%,#bb00ff 77.2%,#ff00fd 92.5%,#ff00de 100%)"></i><i style="top:446px;height:1px;background:linear-gradient(90deg,#0014ff 0%,#0000ff 20.9%,#0400ff 32.7%,#bd00ff 77.8%,#ff00fc 92.8%,#ff00df 100%)"></i><i style="top:447px;height:1px;background:linear-gradient(90deg,#0014ff 0%,#0000ff 20.9%,#0400ff 32.7%,#bd00ff 77.8%,#ff00fc 93.1%,#ff00df 100%)"></i><i style="top:448px;height:1px;background:linear-gradient(90deg,#0014ff 0%,#0000ff 20.6%,#0400ff 32.7%,#bc00ff 77.8%,#ff00fc 93.1%,#ff00e0 100%)"></i><i style="top:449px;height:1px;background:linear-gradient(90deg,#0013ff 0%,#0000ff 20.6%,#0300ff 32.7%,#bd00ff 78.1%,#ff00fc 93.4%,#ff00e1 100%)"></i><i style="top:450px;height:1px;background:linear-gradient(90deg,#0013ff 0%,#0000ff 20.3%,#0300ff 32.7%,#bc00ff 78.1%,#ff00fd 93.4%,#ff00e2 100%)"></i><i style="top:451px;height:1px;background:linear-gradient(90deg,#0013ff 0%,#0000ff 20.3%,#0300ff 32.7%,#bc00ff 78.1%,#ff00fc 93.7%,#ff00e2 100%)"></i><i style="top:452px;height:1px;background:linear-gradient(90deg,#0013ff 0%,#0000ff 20%,#0300ff 32.7%,#bc00ff 78.4%,#ff00fb 94%,#ff00e3 100%)"></i><i style="top:453px;height:1px;background:linear-gradient(90deg,#0012ff 0%,#0000ff 20%,#0300ff 32.7%,#bc00ff 78.4%,#ff00fc 94%,#ff00e4 100%)"></i><i style="top:454px;height:1px;background:linear-gradient(90deg,#0012ff 0%,#0000ff 19.7%,#0400ff 33%,#bc00ff 78.7%,#ff00fc 94.3%,#ff00e4 100%)"></i><i style="top:455px;height:1px;background:linear-gradient(90deg,#0012ff 0%,#0000ff 19.7%,#0400ff 33%,#bd00ff 79%,#ff00fd 94.3%,#ff00e5 100%)"></i><i style="top:456px;height:1px;background:linear-gradient(90deg,#0012ff 0%,#0000ff 19.4%,#0300ff 33%,#bc00ff 79%,#ff00fc 94.6%,#ff00e6 100%)"></i><i style="top:457px;height:1px;background:linear-gradient(90deg,#0012ff 0%,#0000ff 19.4%,#0300ff 33%,#bc00ff 79%,#ff00fb 94.9%,#ff00e6 100%)"></i><i style="top:458px;height:1px;background:linear-gradient(90deg,#0011ff 0%,#0000ff 19.2%,#0300ff 33%,#bd00ff 79.3%,#ff00fc 94.9%,#ff00e7 100%)"></i><i style="top:459px;height:1px;background:linear-gradient(90deg,#0011ff 0%,#0000ff 19.2%,#0300ff 33%,#bc00ff 79.3%,#ff00fc 95.2%,#ff00e8 100%)"></i><i style="top:460px;height:1px;background:linear-gradient(90deg,#0011ff 0%,#0000ff 18.9%,#0300ff 33%,#bd00ff 79.6%,#ff00fc 95.2%,#ff00e9 100%)"></i><i style="top:461px;height:1px;background:linear-gradient(90deg,#0011ff 0%,#0000ff 18.9%,#0300ff 33%,#bc00ff 79.6%,#ff00fc 95.5%,#ff00e9 100%)"></i><i style="top:462px;height:1px;background:linear-gradient(90deg,#0010ff 0%,#0000ff 18.6%,#0400ff 33.3%,#bd00ff 79.9%,#ff00fb 95.8%,#ff00ea 100%)"></i><i style="top:463px;height:1px;background:linear-gradient(90deg,#0010ff 0%,#0000ff 18.6%,#0400ff 33.3%,#bc00ff 79.9%,#ff00fc 95.8%,#ff00eb 100%)"></i><i style="top:464px;height:1px;background:linear-gradient(90deg,#0010ff 0%,#0000ff 18.3%,#0300ff 33.3%,#bd00ff 80.2%,#ff00fc 96.1%,#ff00eb 100%)"></i><i style="top:465px;height:1px;background:linear-gradient(90deg,#0010ff 0%,#0000ff 18.3%,#0300ff 33.3%,#bc00ff 80.2%,#ff00fc 96.1%,#ff00ec 100%)"></i><i style="top:466px;height:1px;background:linear-gradient(90deg,#0010ff 0%,#0000ff 18%,#0300ff 33.3%,#bd00ff 80.4%,#ff00fc 96.4%,#ff00ed 100%)"></i><i style="top:467px;height:1px;background:linear-gradient(90deg,#000fff 0%,#0000ff 18%,#0300ff 33.3%,#bc00ff 80.4%,#ff00fb 96.7%,#ff00ee 100%)"></i><i style="top:468px;height:1px;background:linear-gradient(90deg,#000fff 0%,#0000ff 18%,#0300ff 33.3%,#bc00ff 80.4%,#ff00fc 96.7%,#ff00ee 100%)"></i><i style="top:469px;height:1px;background:linear-gradient(90deg,#000fff 0%,#0000ff 17.7%,#0300ff 33.3%,#bc00ff 80.7%,#ff00fc 97%,#ff00ef 100%)"></i><i style="top:470px;height:1px;background:linear-gradient(90deg,#000fff 0%,#0000ff 17.7%,#0400ff 33.6%,#bd00ff 81%,#ff00fc 97%,#ff00f0 100%)"></i><i style="top:471px;height:1px;background:linear-gradient(90deg,#000eff 0%,#0000ff 17.4%,#0400ff 33.6%,#bc00ff 81%,#ff00fc 97.2%,#ff00f0 100%)"></i><i style="top:472px;height:1px;background:linear-gradient(90deg,#000eff 0%,#0000ff 17.4%,#0300ff 33.6%,#bd00ff 81.3%,#ff00fb 97.5%,#ff00f1 100%)"></i><i style="top:473px;height:1px;background:linear-gradient(90deg,#000eff 0%,#0000ff 17.1%,#0300ff 33.6%,#bc00ff 81.3%,#ff00fc 97.5%,#ff00f2 100%)"></i><i style="top:474px;height:1px;background:linear-gradient(90deg,#000eff 0%,#0000ff 17.1%,#0300ff 33.6%,#bc00ff 81.3%,#ff00fc 97.8%,#ff00f3 100%)"></i><i style="top:475px;height:1px;background:linear-gradient(90deg,#000eff 0%,#0000ff 16.8%,#0300ff 33.6%,#bc00ff 81.6%,#ff00fc 97.8%,#ff00f3 100%)"></i><i style="top:476px;height:1px;background:linear-gradient(90deg,#000dff 0%,#0000ff 16.8%,#0300ff 33.6%,#bc00ff 81.6%,#ff00fc 98.1%,#ff00f4 100%)"></i><i style="top:477px;height:1px;background:linear-gradient(90deg,#000dff 0%,#0000ff 16.5%,#0300ff 33.6%,#bb00ff 81.6%,#ff00fb 98.4%,#ff00f5 100%)"></i><i style="top:478px;height:1px;background:linear-gradient(90deg,#000dff 0%,#0000ff 16.5%,#0400ff 33.9%,#bd00ff 82.2%,#ff00fc 98.4%,#ff00f6 100%)"></i><i style="top:479px;height:1px;background:linear-gradient(90deg,#000dff 0%,#0000ff 16.2%,#0400ff 33.9%,#bd00ff 82.2%,#ff00fc 98.7%,#ff00f6 100%)"></i><i style="top:480px;height:1px;background:linear-gradient(90deg,#000dff 0%,#0000ff 16.2%,#0300ff 33.9%,#bc00ff 82.2%,#ff00fc 98.7%,#ff00f7 100%)"></i><i style="top:481px;height:1px;background:linear-gradient(90deg,#000cff 0%,#0000ff 15.9%,#0300ff 33.9%,#bd00ff 82.5%,#ff00fc 99%,#ff00f8 100%)"></i><i style="top:482px;height:1px;background:linear-gradient(90deg,#000cff 0%,#0000ff 15.9%,#0300ff 33.9%,#bc00ff 82.5%,#ff00fb 99.3%,#ff00f8 100%)"></i><i style="top:483px;height:1px;background:linear-gradient(90deg,#000cff 0%,#0000ff 15.9%,#0300ff 33.9%,#bd00ff 82.8%,#ff00fc 99.3%,#ff00f9 100%)"></i><i style="top:484px;height:1px;background:linear-gradient(90deg,#000cff 0%,#0000ff 15.6%,#0300ff 33.9%,#bc00ff 82.8%,#ff00fc 99.6%,#ff00fa 100%)"></i><i style="top:485px;height:1px;background:linear-gradient(90deg,#000cff 0%,#0000ff 15.6%,#0300ff 33.9%,#bb00ff 82.8%,#ff00fc 99.6%,#ff00fb 100%)"></i><i style="top:486px;height:1px;background:linear-gradient(90deg,#000bff 0%,#0000ff 15.3%,#0400ff 34.2%,#bd00ff 83.4%,#ff00fb 100%)"></i><i style="top:487px;height:1px;background:linear-gradient(90deg,#000bff 0%,#0000ff 15.3%,#0400ff 34.2%,#bd00ff 83.4%,#ff00fc 100%)"></i><i style="top:488px;height:1px;background:linear-gradient(90deg,#000bff 0%,#0000ff 15.3%,#0300ff 34.2%,#bc00ff 83.4%,#ff00fd 100%)"></i><i style="top:489px;height:1px;background:linear-gradient(90deg,#000bff 0%,#0000ff 15%,#0300ff 34.2%,#bd00ff 83.7%,#ff00fe 100%)"></i><i style="top:490px;height:1px;background:linear-gradient(90deg,#000bff 0%,#0000ff 15%,#0300ff 34.2%,#bc00ff 83.7%,#ff00fe 100%)"></i><i style="top:491px;height:1px;background:linear-gradient(90deg,#000aff 0%,#0000ff 15%,#0300ff 34.2%,#bc00ff 83.7%,#ff00ff 100%)"></i><i style="top:492px;height:1px;background:linear-gradient(90deg,#000aff 0%,#0000ff 14.7%,#0300ff 34.2%,#bc00ff 84%,#fe00ff 100%)"></i><i style="top:493px;height:1px;background:linear-gradient(90deg,#000aff 0%,#0000ff 14.7%,#0300ff 34.2%,#bc00ff 84%,#fe00ff 100%)"></i><i style="top:494px;height:1px;background:linear-gradient(90deg,#000aff 0%,#0000ff 14.4%,#0400ff 34.5%,#bc00ff 84.3%,#fd00ff 100%)"></i><i style="top:495px;height:1px;background:linear-gradient(90deg,#000aff 0%,#0000ff 14.4%,#0400ff 34.5%,#bd00ff 84.6%,#fc00ff 100%)"></i><i style="top:496px;height:1px;background:linear-gradient(90deg,#0009ff 0%,#0000ff 14.4%,#0300ff 34.5%,#bc00ff 84.6%,#fb00ff 100%)"></i><i style="top:497px;height:1px;background:linear-gradient(90deg,#0009ff 0%,#0000ff 14.1%,#0300ff 34.5%,#bc00ff 84.6%,#fb00ff 100%)"></i><i style="top:498px;height:1px;background:linear-gradient(90deg,#0009ff 0%,#0000ff 14.1%,#0300ff 34.5%,#bc00ff 84.9%,#fa00ff 100%)"></i><i style="top:499px;height:1px;background:linear-gradient(90deg,#0009ff 0%,#0000ff 14.1%,#0300ff 34.5%,#bc00ff 84.9%,#f900ff 100%)"></i><i style="top:500px;height:1px;background:linear-gradient(90deg,#0009ff 0%,#0000ff 14.1%,#0300ff 34.5%,#bd00ff 85.2%,#f800ff 100%)"></i><i style="top:501px;height:1px;background:linear-gradient(90deg,#0008ff 0%,#0000ff 13.9%,#0300ff 34.5%,#bc00ff 85.2%,#f800ff 100%)"></i></div>
<svg width="1920" height="1058" viewBox="0 0 1920 1058">
<svg x="1230.0" y="153.0" width="678.7" height="522.3" viewBox="1230.0 153.0 678.7 522.3" overflow="hidden">
<path d="M1229.0 161.0H1909.7V665.0H1229.0Z M1791.5 217.8L1341.5 172.4L1428.5 537.9Z" fill="#000" fill-opacity="0.4" fill-rule="evenodd"/>
<path d="M1229.0 161.0H1909.7V665.0H1229.0Z M1520.6 661.0L1520.5 660.9L1520.4 660.9L1520.3 661.0L1520.2 661.1L1520.0 661.1L1519.8 661.0L1519.6 661.0L1519.5 661.2L1519.4 661.3L1519.3 661.4L1519.1 661.5L1518.9 661.5L1518.6 661.5L1518.2 661.4L1517.9 661.4L1517.5 661.4L1517.1 661.4L1516.7 661.3L1516.1 661.1L1515.3 660.6L1514.2 659.9L1513.0 659.1L1511.7 658.2L1510.1 657.0L1508.4 655.6L1506.3 654.0L1504.0 652.1L1501.4 650.0L1498.6 647.6L1495.5 644.9L1492.2 642.1L1488.4 639.0L1484.2 635.5L1479.6 631.7L1474.5 627.5L1469.0 622.9L1463.1 618.0L1456.7 612.5L1449.7 606.3L1442.3 599.5L1434.4 591.8L1425.8 583.0L1416.1 572.2L1405.1 559.1L1393.0 543.9L1380.2 526.7L1366.7 507.6L1352.6 486.5L1338.2 463.6L1323.7 439.5L1309.3 414.8L1295.5 389.6L1282.8 364.5L1271.6 340.2L1261.8 316.9L1253.4 295.2L1246.4 275.4L1240.9 257.8L1236.8 242.2L1233.9 228.7L1232.2 217.0L1231.6 206.9L1231.9 198.3L1233.1 190.8L1235.2 184.5L1238.2 179.2L1241.8 174.8L1246.1 171.5L1250.9 169.0L1256.1 167.2L1261.7 166.0L1267.7 165.3L1273.8 164.9L1280.2 164.6L1286.6 164.5L1293.0 164.5L1299.5 164.6L1306.1 164.8L1312.8 165.1L1319.6 165.5L1326.7 166.0L1334.0 166.5L1341.6 167.1L1349.4 167.8L1357.5 168.6L1365.9 169.4L1374.7 170.3L1383.8 171.3L1393.3 172.3L1403.2 173.4L1413.5 174.5L1424.2 175.7L1435.4 177.0L1447.0 178.3L1459.1 179.7L1471.7 181.1L1484.8 182.6L1498.3 184.2L1512.3 185.8L1526.7 187.4L1541.6 189.2L1557.0 190.9L1572.6 192.7L1588.6 194.5L1605.0 196.4L1621.5 198.3L1638.1 200.2L1654.5 202.1L1670.5 204.0L1686.4 205.8L1702.3 207.6L1717.9 209.4L1732.8 211.1L1747.1 212.8L1760.7 214.3L1773.7 215.8L1786.0 217.2L1797.5 218.6L1808.4 219.8L1818.4 221.0L1827.8 222.1L1836.6 223.1L1844.7 224.0L1852.3 224.9L1859.5 225.7L1866.3 226.5L1872.7 227.2L1878.7 227.9L1884.3 228.5L1889.5 229.1L1894.3 229.7L1898.7 230.2L1902.7 230.7L1906.1 231.1L1909.2 231.4L1912.1 231.7L1914.7 232.0L1917.0 232.3L1919.1 232.5L1920.9 232.8L1922.4 232.9L1923.7 233.1L1924.8 233.2L1925.9 233.3L1927.0 233.5L1927.9 233.6L1928.7 233.7L1929.6 233.8L1930.4 233.9L1931.3 233.9L1932.1 234.0L1932.8 234.1L1933.5 234.2L1933.9 234.3L1934.2 234.3L1934.5 234.3L1934.7 234.4L1934.9 234.4L1935.1 234.4L1935.1 234.4Z" fill="#242424" fill-rule="evenodd"/>
</svg>
<path d="M1230.0 682.3V153.0H1908.7V675.3M1222.5 675.3H1908.7" stroke="#9c9c9c" stroke-width="1.6" fill="none"/>
<line x1="1222.50" y1="631.77" x2="1230.00" y2="631.77" stroke="#9c9c9c" stroke-width="1.6"/>
<text x="1191.9" y="637.2" font-size="15.3" fill="#dcdcdc" textLength="30.7" lengthAdjust="spacingAndGlyphs" stroke="#dcdcdc" stroke-width="0.28">0.05</text>
<line x1="1222.50" y1="588.25" x2="1230.00" y2="588.25" stroke="#9c9c9c" stroke-width="1.6"/>
<text x="1200.7" y="593.6" font-size="15.3" fill="#dcdcdc" textLength="21.9" lengthAdjust="spacingAndGlyphs" stroke="#dcdcdc" stroke-width="0.28">0.1</text>
<line x1="1222.50" y1="544.72" x2="1230.00" y2="544.72" stroke="#9c9c9c" stroke-width="1.6"/>
<text x="1191.9" y="550.1" font-size="15.3" fill="#dcdcdc" textLength="30.7" lengthAdjust="spacingAndGlyphs" stroke="#dcdcdc" stroke-width="0.28">0.15</text>
<line x1="1222.50" y1="501.20" x2="1230.00" y2="501.20" stroke="#9c9c9c" stroke-width="1.6"/>
<text x="1200.7" y="506.6" font-size="15.3" fill="#dcdcdc" textLength="21.9" lengthAdjust="spacingAndGlyphs" stroke="#dcdcdc" stroke-width="0.28">0.2</text>
<line x1="1222.50" y1="457.67" x2="1230.00" y2="457.67" stroke="#9c9c9c" stroke-width="1.6"/>
<text x="1191.9" y="463.1" font-size="15.3" fill="#dcdcdc" textLength="30.7" lengthAdjust="spacingAndGlyphs" stroke="#dcdcdc" stroke-width="0.28">0.25</text>
<line x1="1222.50" y1="414.15" x2="1230.00" y2="414.15" stroke="#9c9c9c" stroke-width="1.6"/>
<text x="1200.7" y="419.5" font-size="15.3" fill="#dcdcdc" textLength="21.9" lengthAdjust="spacingAndGlyphs" stroke="#dcdcdc" stroke-width="0.28">0.3</text>
<line x1="1222.50" y1="370.62" x2="1230.00" y2="370.62" stroke="#9c9c9c" stroke-width="1.6"/>
<text x="1191.9" y="376.0" font-size="15.3" fill="#dcdcdc" textLength="30.7" lengthAdjust="spacingAndGlyphs" stroke="#dcdcdc" stroke-width="0.28">0.35</text>
<line x1="1222.50" y1="327.10" x2="1230.00" y2="327.10" stroke="#9c9c9c" stroke-width="1.6"/>
<text x="1200.7" y="332.5" font-size="15.3" fill="#dcdcdc" textLength="21.9" lengthAdjust="spacingAndGlyphs" stroke="#dcdcdc" stroke-width="0.28">0.4</text>
<line x1="1222.50" y1="283.57" x2="1230.00" y2="283.57" stroke="#9c9c9c" stroke-width="1.6"/>
<text x="1191.9" y="289.0" font-size="15.3" fill="#dcdcdc" textLength="30.7" lengthAdjust="spacingAndGlyphs" stroke="#dcdcdc" stroke-width="0.28">0.45</text>
<line x1="1222.50" y1="240.05" x2="1230.00" y2="240.05" stroke="#9c9c9c" stroke-width="1.6"/>
<text x="1200.7" y="245.4" font-size="15.3" fill="#dcdcdc" textLength="21.9" lengthAdjust="spacingAndGlyphs" stroke="#dcdcdc" stroke-width="0.28">0.5</text>
<line x1="1222.50" y1="196.52" x2="1230.00" y2="196.52" stroke="#9c9c9c" stroke-width="1.6"/>
<text x="1191.9" y="201.9" font-size="15.3" fill="#dcdcdc" textLength="30.7" lengthAdjust="spacingAndGlyphs" stroke="#dcdcdc" stroke-width="0.28">0.55</text>
<text x="1213.8" y="680.7" font-size="15.3" fill="#dcdcdc" textLength="8.8" lengthAdjust="spacingAndGlyphs" stroke="#dcdcdc" stroke-width="0.28">0</text>
<text x="1225.6" y="697.4" font-size="15.3" fill="#dcdcdc" textLength="8.8" lengthAdjust="spacingAndGlyphs" stroke="#dcdcdc" stroke-width="0.28">0</text>
<line x1="1286.56" y1="675.30" x2="1286.56" y2="682.30" stroke="#9c9c9c" stroke-width="1.6"/>
<text x="1271.2" y="697.4" font-size="15.3" fill="#dcdcdc" textLength="30.7" lengthAdjust="spacingAndGlyphs" stroke="#dcdcdc" stroke-width="0.28">0.05</text>
<line x1="1343.12" y1="675.30" x2="1343.12" y2="682.30" stroke="#9c9c9c" stroke-width="1.6"/>
<text x="1332.2" y="697.4" font-size="15.3" fill="#dcdcdc" textLength="21.9" lengthAdjust="spacingAndGlyphs" stroke="#dcdcdc" stroke-width="0.28">0.1</text>
<line x1="1399.67" y1="675.30" x2="1399.67" y2="682.30" stroke="#9c9c9c" stroke-width="1.6"/>
<text x="1384.3" y="697.4" font-size="15.3" fill="#dcdcdc" textLength="30.7" lengthAdjust="spacingAndGlyphs" stroke="#dcdcdc" stroke-width="0.28">0.15</text>
<line x1="1456.23" y1="675.30" x2="1456.23" y2="682.30" stroke="#9c9c9c" stroke-width="1.6"/>
<text x="1445.3" y="697.4" font-size="15.3" fill="#dcdcdc" textLength="21.9" lengthAdjust="spacingAndGlyphs" stroke="#dcdcdc" stroke-width="0.28">0.2</text>
<line x1="1512.79" y1="675.30" x2="1512.79" y2="682.30" stroke="#9c9c9c" stroke-width="1.6"/>
<text x="1497.5" y="697.4" font-size="15.3" fill="#dcdcdc" textLength="30.7" lengthAdjust="spacingAndGlyphs" stroke="#dcdcdc" stroke-width="0.28">0.25</text>
<line x1="1569.35" y1="675.30" x2="1569.35" y2="682.30" stroke="#9c9c9c" stroke-width="1.6"/>
<text x="1558.4" y="697.4" font-size="15.3" fill="#dcdcdc" textLength="21.9" lengthAdjust="spacingAndGlyphs" stroke="#dcdcdc" stroke-width="0.28">0.3</text>
<line x1="1625.91" y1="675.30" x2="1625.91" y2="682.30" stroke="#9c9c9c" stroke-width="1.6"/>
<text x="1610.6" y="697.4" font-size="15.3" fill="#dcdcdc" textLength="30.7" lengthAdjust="spacingAndGlyphs" stroke="#dcdcdc" stroke-width="0.28">0.35</text>
<line x1="1682.47" y1="675.30" x2="1682.47" y2="682.30" stroke="#9c9c9c" stroke-width="1.6"/>
<text x="1671.5" y="697.4" font-size="15.3" fill="#dcdcdc" textLength="21.9" lengthAdjust="spacingAndGlyphs" stroke="#dcdcdc" stroke-width="0.28">0.4</text>
<line x1="1739.03" y1="675.30" x2="1739.03" y2="682.30" stroke="#9c9c9c" stroke-width="1.6"/>
<text x="1723.7" y="697.4" font-size="15.3" fill="#dcdcdc" textLength="30.7" lengthAdjust="spacingAndGlyphs" stroke="#dcdcdc" stroke-width="0.28">0.45</text>
<line x1="1795.58" y1="675.30" x2="1795.58" y2="682.30" stroke="#9c9c9c" stroke-width="1.6"/>
<text x="1784.6" y="697.4" font-size="15.3" fill="#dcdcdc" textLength="21.9" lengthAdjust="spacingAndGlyphs" stroke="#dcdcdc" stroke-width="0.28">0.5</text>
<line x1="1852.14" y1="675.30" x2="1852.14" y2="682.30" stroke="#9c9c9c" stroke-width="1.6"/>
<text x="1836.8" y="697.4" font-size="15.3" fill="#dcdcdc" textLength="30.7" lengthAdjust="spacingAndGlyphs" stroke="#dcdcdc" stroke-width="0.28">0.55</text>
<rect x="1504.8" y="251.1" width="13.8" height="13.8" fill="none" stroke="#fff" stroke-width="1.5"/><rect x="1567.0" y="242.0" width="13.8" height="13.8" fill="none" stroke="#fff" stroke-width="1.5"/><rect x="1638.8" y="230.4" width="13.8" height="13.8" fill="none" stroke="#fff" stroke-width="1.5"/><rect x="1708.8" y="220.8" width="13.8" height="13.8" fill="none" stroke="#fff" stroke-width="1.5"/><rect x="1783.8" y="209.1" width="13.8" height="13.8" fill="none" stroke="#fff" stroke-width="1.5"/><rect x="1412.6" y="230.7" width="13.8" height="13.8" fill="none" stroke="#fff" stroke-width="1.5"/><rect x="1386.6" y="209.0" width="13.8" height="13.8" fill="none" stroke="#fff" stroke-width="1.5"/><rect x="1365.0" y="190.1" width="13.8" height="13.8" fill="none" stroke="#fff" stroke-width="1.5"/><rect x="1348.8" y="175.9" width="13.8" height="13.8" fill="none" stroke="#fff" stroke-width="1.5"/><rect x="1334.3" y="164.0" width="13.8" height="13.8" fill="none" stroke="#fff" stroke-width="1.5"/><rect x="1443.1" y="291.4" width="13.8" height="13.8" fill="none" stroke="#fff" stroke-width="1.5"/><rect x="1440.1" y="332.0" width="13.8" height="13.8" fill="none" stroke="#fff" stroke-width="1.5"/><rect x="1435.8" y="380.9" width="13.8" height="13.8" fill="none" stroke="#fff" stroke-width="1.5"/><rect x="1428.1" y="445.9" width="13.8" height="13.8" fill="none" stroke="#fff" stroke-width="1.5"/><rect x="1421.4" y="529.5" width="13.8" height="13.8" fill="none" stroke="#fff" stroke-width="1.5"/><rect x="1428.2" y="262.0" width="13.8" height="13.8" fill="none" stroke="#fff" stroke-width="1.5"/><rect x="1411.0" y="265.0" width="13.8" height="13.8" fill="none" stroke="#fff" stroke-width="1.5"/><rect x="1393.9" y="266.7" width="13.8" height="13.8" fill="none" stroke="#fff" stroke-width="1.5"/><rect x="1376.5" y="269.7" width="13.8" height="13.8" fill="none" stroke="#fff" stroke-width="1.5"/><rect x="1359.1" y="272.7" width="13.8" height="13.8" fill="none" stroke="#fff" stroke-width="1.5"/><rect x="1465.8" y="275.6" width="13.8" height="13.8" fill="none" stroke="#fff" stroke-width="1.5"/><rect x="1489.0" y="296.1" width="13.8" height="13.8" fill="none" stroke="#fff" stroke-width="1.5"/><rect x="1517.9" y="320.1" width="13.8" height="13.8" fill="none" stroke="#fff" stroke-width="1.5"/><rect x="1549.8" y="347.7" width="13.8" height="13.8" fill="none" stroke="#fff" stroke-width="1.5"/><rect x="1590.2" y="380.9" width="13.8" height="13.8" fill="none" stroke="#fff" stroke-width="1.5"/><rect x="1448.6" y="238.1" width="13.8" height="13.8" fill="none" stroke="#fff" stroke-width="1.5"/><rect x="1449.8" y="220.3" width="13.8" height="13.8" fill="none" stroke="#fff" stroke-width="1.5"/><rect x="1451.1" y="204.1" width="13.8" height="13.8" fill="none" stroke="#fff" stroke-width="1.5"/><rect x="1452.4" y="188.8" width="13.8" height="13.8" fill="none" stroke="#fff" stroke-width="1.5"/><rect x="1454.5" y="175.6" width="13.8" height="13.8" fill="none" stroke="#fff" stroke-width="1.5"/><circle cx="1529.2" cy="253.1" r="4.1" fill="#be9696" stroke="#000" stroke-width="1.3"/><circle cx="1597.1" cy="242.9" r="4.1" fill="#be7878" stroke="#000" stroke-width="1.3"/><circle cx="1660.7" cy="234.7" r="4.1" fill="#c36464" stroke="#000" stroke-width="1.3"/><circle cx="1729.7" cy="224.3" r="4.1" fill="#c84646" stroke="#000" stroke-width="1.3"/><circle cx="1790.3" cy="219.0" r="4.1" fill="#c80000" stroke="#000" stroke-width="1.3"/><circle cx="1431.0" cy="238.9" r="4.1" fill="#96b996" stroke="#000" stroke-width="1.3"/><circle cx="1405.0" cy="218.7" r="4.1" fill="#7db97d" stroke="#000" stroke-width="1.3"/><circle cx="1383.4" cy="201.4" r="4.1" fill="#64b464" stroke="#000" stroke-width="1.3"/><circle cx="1361.5" cy="185.3" r="4.1" fill="#46b446" stroke="#000" stroke-width="1.3"/><circle cx="1341.5" cy="171.1" r="4.1" fill="#00aa00" stroke="#000" stroke-width="1.3"/><circle cx="1458.5" cy="296.8" r="4.1" fill="#a0a0b9" stroke="#000" stroke-width="1.3"/><circle cx="1455.5" cy="335.8" r="4.1" fill="#8282be" stroke="#000" stroke-width="1.3"/><circle cx="1448.2" cy="383.3" r="4.1" fill="#6e6ebe" stroke="#000" stroke-width="1.3"/><circle cx="1441.0" cy="449.8" r="4.1" fill="#5555c8" stroke="#000" stroke-width="1.3"/><circle cx="1430.9" cy="536.4" r="4.1" fill="#0000be" stroke="#000" stroke-width="1.3"/><circle cx="1442.5" cy="264.8" r="4.1" fill="#a5b9b9" stroke="#000" stroke-width="1.3"/><circle cx="1425.3" cy="267.8" r="4.1" fill="#8cb9b9" stroke="#000" stroke-width="1.3"/><circle cx="1406.6" cy="270.5" r="4.1" fill="#78b9b9" stroke="#000" stroke-width="1.3"/><circle cx="1387.4" cy="273.4" r="4.1" fill="#5ab9b9" stroke="#000" stroke-width="1.3"/><circle cx="1367.6" cy="274.9" r="4.1" fill="#00b9b9" stroke="#000" stroke-width="1.3"/><circle cx="1485.8" cy="280.7" r="4.1" fill="#b9a0b9" stroke="#000" stroke-width="1.3"/><circle cx="1513.0" cy="300.8" r="4.1" fill="#be87be" stroke="#000" stroke-width="1.3"/><circle cx="1536.5" cy="321.1" r="4.1" fill="#be6ebe" stroke="#000" stroke-width="1.3"/><circle cx="1569.4" cy="346.0" r="4.1" fill="#be50be" stroke="#000" stroke-width="1.3"/><circle cx="1611.4" cy="377.6" r="4.1" fill="#be00be" stroke="#000" stroke-width="1.3"/><circle cx="1464.0" cy="242.9" r="4.1" fill="#b9b9a0" stroke="#000" stroke-width="1.3"/><circle cx="1465.4" cy="225.8" r="4.1" fill="#bebe87" stroke="#000" stroke-width="1.3"/><circle cx="1467.0" cy="211.5" r="4.1" fill="#bebe6e" stroke="#000" stroke-width="1.3"/><circle cx="1469.9" cy="198.4" r="4.1" fill="#c3c350" stroke="#000" stroke-width="1.3"/><circle cx="1471.4" cy="184.1" r="4.1" fill="#c8c81e" stroke="#000" stroke-width="1.3"/><rect x="1445.9" y="259.0" width="13.8" height="13.8" fill="none" stroke="#000" stroke-width="1.5"/><circle cx="1461.4" cy="261.7" r="4.4" fill="#fff" stroke="#000" stroke-width="1.3"/><circle cx="1442.5" cy="300.8" r="4.6" fill="#000"/>
<svg x="1677.3" y="513.8" width="224.6" height="151.9" viewBox="1677.3 513.8 224.6 151.9" overflow="hidden">
<rect x="1677.30" y="513.80" width="224.60" height="151.90" fill="url(#gIn)"/>
<path d="M1677.3 522.4L1901.9 656.5V512.8H1677.3Z" fill="#000" fill-opacity="0.4"/>
<path d="M1792 513.8L1901.9 587.8V513.8Z" fill="#232323"/>
</svg>
<rect x="1676.1" y="512.6" width="227.0" height="154.3" fill="none" stroke="#2a2a2a" stroke-width="4.5"/>
<rect x="1677.3" y="513.8" width="224.6" height="151.9" fill="none" stroke="#8c8c8c" stroke-width="1.7"/>
<rect x="1781.6" y="581.7" width="13.8" height="13.8" fill="none" stroke="#fff" stroke-width="1.5"/>
<circle cx="1833.4" cy="623.6" r="4.0" fill="#c4c412" stroke="#000" stroke-width="1.3"/>
<g opacity="0.8"><path d="M1631 996.7L1665.5 1003.2L1674.5 995.5M1631 996.7L1637.2 1032L1654 1046L1696.5 1032L1640.5 1029.2" fill="none" stroke="#c9b0b2" stroke-width="5.4" stroke-linejoin="round" stroke-linecap="round" opacity="0.55"/><path d="M1631 996.7L1665.5 1003.2L1674.5 995.5M1631 996.7L1637.2 1032L1654 1046L1696.5 1032L1640.5 1029.2" fill="none" stroke="#8e262d" stroke-width="3.4" stroke-linejoin="round" stroke-linecap="round"/><path d="M1641.5 1009.5L1653.6 1023.5L1674.5 995.5" fill="none" stroke="#d8d8d8" stroke-width="4.6" stroke-linejoin="round" stroke-linecap="round" opacity="0.7"/><path d="M1641.5 1009.5L1653.6 1023.5L1674.5 995.5" fill="none" stroke="#333" stroke-width="2.2" stroke-linejoin="round" stroke-linecap="round"/><text x="1676.5" y="1025.0" font-size="26.3" fill="#8f2a33" font-weight="bold" textLength="146.0" lengthAdjust="spacingAndGlyphs" stroke="#d9c3c5" stroke-width="3.2" stroke-linejoin="round" opacity="0.75">NOTEBOOK</text><text x="1676.5" y="1025.0" font-size="26.3" fill="#8f2a33" font-weight="bold" textLength="146.0" lengthAdjust="spacingAndGlyphs" stroke="#8f2a33" stroke-width="1.1" stroke-linejoin="round">NOTEBOOK</text><text x="1824.5" y="1025.0" font-size="26.3" fill="#ddd" font-weight="bold" textLength="87.0" lengthAdjust="spacingAndGlyphs" stroke="#ddd" stroke-width="3.0" stroke-linejoin="round" opacity="0.8">CHECK</text><text x="1824.5" y="1025.0" font-size="26.3" fill="#2c2c2c" font-weight="bold" textLength="87.0" lengthAdjust="spacingAndGlyphs" stroke="#2c2c2c" stroke-width="0.5">CHECK</text></g>
</svg>
</body></html>
